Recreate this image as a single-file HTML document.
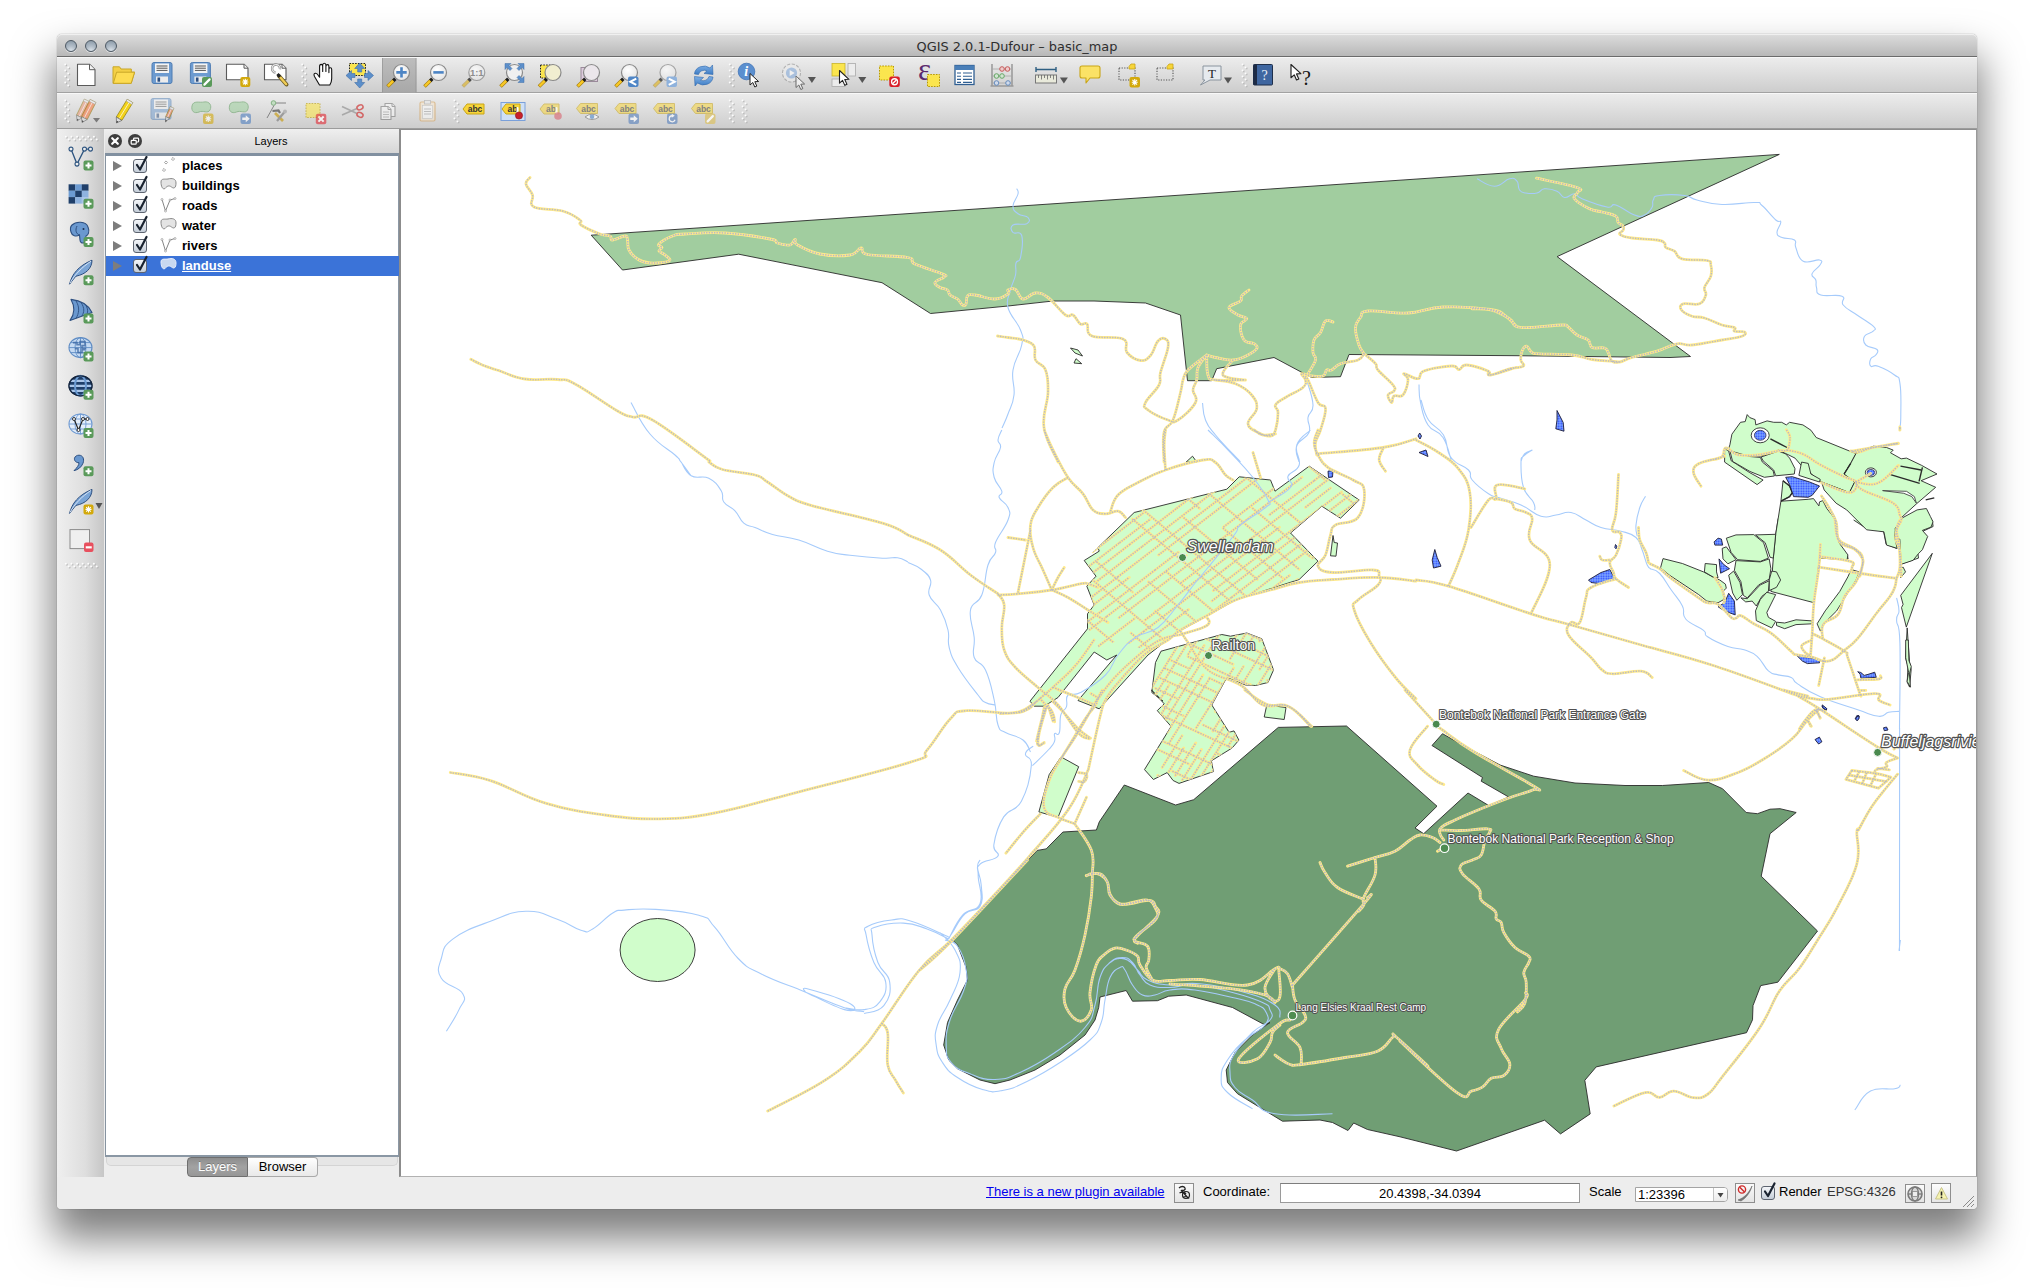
<!DOCTYPE html>
<html>
<head>
<meta charset="utf-8">
<title>QGIS 2.0.1-Dufour - basic_map</title>
<style>
html,body{margin:0;padding:0;background:#fff;}
body{width:2034px;height:1288px;position:relative;overflow:hidden;font-family:"Liberation Sans",sans-serif;font-size:13px;color:#000;}
#win{position:absolute;left:57px;top:34px;width:1920px;height:1175px;background:#ededed;border-radius:5px 5px 4px 4px;
 box-shadow:0 0 1px rgba(0,0,0,.6),0 26px 40px 4px rgba(0,0,0,.51);}
#title{position:absolute;left:0;top:0;width:1920px;height:22px;border-radius:5px 5px 0 0;
 background:linear-gradient(#e4e4e4 0,#dadada 8%,#b8b8b8 100%);border-bottom:1px solid #6b6b6b;box-shadow:inset 0 1px 0 #f0f0f0;}
#title .t{position:absolute;left:0;right:0;top:5px;text-align:center;font-size:13.5px;color:#2e2e2e;letter-spacing:.2px;font-family:"DejaVu Sans","Liberation Sans",sans-serif;font-size:12.9px;letter-spacing:0}
.tl{position:absolute;top:6px;width:12px;height:12px;border-radius:50%;border:1.2px solid #4e5964;box-sizing:border-box;
 background:radial-gradient(circle at 50% 95%,#dbe3ea 0,#b3bec9 40%,#8696a4 100%);box-shadow:0 1px 0 rgba(255,255,255,.5)}
.tb{position:absolute;left:0;width:1920px;height:35px;background:linear-gradient(#ececec,#cdcdcd);border-top:1px solid #f8f8f8;box-sizing:border-box}
#tb1{top:23px;height:36px;border-bottom:1px solid #a2a2a2}
#tb2{top:59px;height:36px;border-bottom:1px solid #9c9c9c}
#leftcol{position:absolute;left:0;top:95px;width:47px;height:1048px;background:linear-gradient(90deg,#efefef,#dedede 60%,#c6c6c6)}
#lp{position:absolute;left:48px;top:95px;width:295px;height:1048px;background:#ededed}
#lph{position:absolute;left:0;top:0;width:295px;height:24px;background:linear-gradient(#efefef,#d6d6d6);}
#lph .t{position:absolute;left:116px;width:100px;top:6px;text-align:center;font-size:11px;box-sizing:border-box}
#tree{position:absolute;left:0;top:24px;width:295px;height:1004px;background:#fff;box-sizing:border-box;border:1px solid #8693a0;border-top:3px solid #8190a0;border-right:2px solid #8c98a5;border-bottom:2px solid #8a97a4}
.row{position:absolute;left:0px;width:293px;height:20px;font-weight:bold;font-size:13px}
.row .n{position:absolute;left:76px;top:2px}
.row.sel{background:#3b73d8;color:#fff}
.row.sel .n{text-decoration:underline}
.tri{position:absolute;left:7px;top:5px;width:0;height:0;border-left:9px solid #7d7d7d;border-top:5px solid transparent;border-bottom:5px solid transparent}
.cb{position:absolute;left:27px;top:3px;width:14px;height:14px;box-sizing:border-box;border:1px solid #5d6470;border-radius:3px;background:linear-gradient(#f4f6f9,#c4cdd8)}
#map{position:absolute;left:342px;top:95px;width:1578px;height:1048px;background:#fff;overflow:hidden;box-sizing:border-box;border:1px solid #8e8e8e;border-left:2px solid #8c8c8c;border-bottom-color:#b2b2b2;border-right-color:#9a9a9a}
#status{position:absolute;left:0;top:1143px;width:1920px;height:32px;background:#ededed;box-sizing:border-box;border-radius:0 0 4px 4px;font-size:13px}
#status span,#status div{position:absolute}
</style>
</head>
<body>
<div id="win">
 <div id="title">
  <div class="tl" style="left:8px"></div><div class="tl" style="left:28px"></div><div class="tl" style="left:48px"></div>
  <div class="t">QGIS 2.0.1-Dufour &#8211; basic_map</div>
 </div>
 <div class="tb" id="tb1"><svg style="position:absolute;left:0;top:-1px" width="1920" height="36" viewBox="57 57 1920 36"><defs><radialGradient id="gl" cx=".4" cy=".35" r=".7"><stop offset="0" stop-color="#ffffff"/><stop offset="1" stop-color="#e3e3e3"/></radialGradient>
<linearGradient id="bl" x1="0" y1="0" x2="0" y2="1"><stop offset="0" stop-color="#7fb0e6"/><stop offset="1" stop-color="#3d7cc4"/></linearGradient></defs><rect x="65.2" y="64.3" width="2" height="2" rx=".9" fill="#a9a9a9" opacity=".75"/><rect x="64.3" y="63.4" width="2" height="2" rx=".9" fill="#fdfdfd"/><rect x="68.2" y="67.3" width="2" height="2" rx=".9" fill="#a9a9a9" opacity=".75"/><rect x="67.3" y="66.4" width="2" height="2" rx=".9" fill="#fdfdfd"/><rect x="65.2" y="70.3" width="2" height="2" rx=".9" fill="#a9a9a9" opacity=".75"/><rect x="64.3" y="69.4" width="2" height="2" rx=".9" fill="#fdfdfd"/><rect x="68.2" y="73.3" width="2" height="2" rx=".9" fill="#a9a9a9" opacity=".75"/><rect x="67.3" y="72.4" width="2" height="2" rx=".9" fill="#fdfdfd"/><rect x="65.2" y="76.3" width="2" height="2" rx=".9" fill="#a9a9a9" opacity=".75"/><rect x="64.3" y="75.4" width="2" height="2" rx=".9" fill="#fdfdfd"/><rect x="68.2" y="79.3" width="2" height="2" rx=".9" fill="#a9a9a9" opacity=".75"/><rect x="67.3" y="78.4" width="2" height="2" rx=".9" fill="#fdfdfd"/><rect x="65.2" y="82.3" width="2" height="2" rx=".9" fill="#a9a9a9" opacity=".75"/><rect x="64.3" y="81.4" width="2" height="2" rx=".9" fill="#fdfdfd"/><rect x="68.2" y="85.3" width="2" height="2" rx=".9" fill="#a9a9a9" opacity=".75"/><rect x="67.3" y="84.4" width="2" height="2" rx=".9" fill="#fdfdfd"/><g opacity="1"><path d="M77.5 64.2 H89.5 L95.0 69.7 V85.5 H77.5 Z" fill="#fff" stroke="#5a5a5a" stroke-width="1.1" stroke-linejoin="round"/><path d="M89.5 64.2 V69.7 H95.0" fill="#f4f4f4" stroke="#5a5a5a" stroke-width="1"/></g><path d="M113 83.3 V66.8 H119.5 L121 69 H131.3 V72.2 H134.6 L131.2 83.3 Z" fill="#f3cf45" stroke="#c9a728" stroke-width="1" stroke-linejoin="round"/><path d="M113.3 83.3 L116.6 72.2 H134.6 L131.2 83.3 Z" fill="#fddc52" stroke="#c9a728" stroke-width="1" stroke-linejoin="round"/><g opacity="1"><rect x="152" y="62.5" width="20" height="21" rx="2" fill="#6d9bd0" stroke="#4f7db3" stroke-width="1"/><rect x="155" y="63.5" width="14" height="9.5" fill="#f4f4f4"/><path d="M156.5 66.0 H167.5 M156.5 68.2 H167.5 M156.5 70.4 H167.5" stroke="#555" stroke-width="1"/><rect x="156" y="76.5" width="12" height="6" fill="#ececec"/><rect x="157.5" y="77.5" width="2.6" height="4.2" fill="#2d4f80"/></g><g opacity="1"><rect x="190.4" y="62.5" width="20" height="21" rx="2" fill="#6d9bd0" stroke="#4f7db3" stroke-width="1"/><rect x="193.4" y="63.5" width="14" height="9.5" fill="#f4f4f4"/><path d="M194.9 66.0 H205.9 M194.9 68.2 H205.9 M194.9 70.4 H205.9" stroke="#555" stroke-width="1"/><rect x="194.4" y="76.5" width="12" height="6" fill="#ececec"/><rect x="195.9" y="77.5" width="2.6" height="4.2" fill="#2d4f80"/></g><g opacity="1"><rect x="202" y="77" width="10" height="10" rx="2" fill="#5a9a5a"/><path d="M204.4 84.6 L209.6 79.4" stroke="#fff" stroke-width="2.2" stroke-linecap="round"/></g><g opacity="1"><path d="M226.5 64.2 H244.0 L248.0 68.2 V79.7 H226.5 Z" fill="#fff" stroke="#5a5a5a" stroke-width="1.1" stroke-linejoin="round"/><path d="M244.0 64.2 V68.2 H248.0" fill="#f4f4f4" stroke="#5a5a5a" stroke-width="1"/></g><g opacity="1"><rect x="240.3" y="77" width="10" height="10" rx="2" fill="#d3a90b"/><path d="M242.3 82.0 H248.3 M245.3 78.8 V85.2 M243.0 79.7 L247.60000000000002 84.3 M243.0 84.3 L247.60000000000002 79.7" stroke="#fff" stroke-width="1.1"/></g><g opacity="1"><path d="M264.5 64.2 H282.0 L286.0 68.2 V79.7 H264.5 Z" fill="#fff" stroke="#5a5a5a" stroke-width="1.1" stroke-linejoin="round"/><path d="M282.0 64.2 V68.2 H286.0" fill="#f4f4f4" stroke="#5a5a5a" stroke-width="1"/></g><path d="M275.5 72.5 A4 4 0 1 1 280 69.2" fill="none" stroke="#8a8a8a" stroke-width="2.4"/><path d="M275.5 72.5 A4 4 0 1 1 280 69.2" fill="none" stroke="#e8e8e8" stroke-width="1.1"/><line x1="279" y1="76" x2="286.5" y2="84.5" stroke="#6a5a20" stroke-width="4" stroke-linecap="round"/><line x1="279.3" y1="76.3" x2="286.2" y2="84.2" stroke="#f0cc55" stroke-width="2.4" stroke-linecap="round"/><line x1="277.5" y1="74" x2="280" y2="77" stroke="#222" stroke-width="3"/><rect x="302.2" y="64.3" width="2" height="2" rx=".9" fill="#a9a9a9" opacity=".75"/><rect x="301.3" y="63.4" width="2" height="2" rx=".9" fill="#fdfdfd"/><rect x="305.2" y="67.3" width="2" height="2" rx=".9" fill="#a9a9a9" opacity=".75"/><rect x="304.3" y="66.4" width="2" height="2" rx=".9" fill="#fdfdfd"/><rect x="302.2" y="70.3" width="2" height="2" rx=".9" fill="#a9a9a9" opacity=".75"/><rect x="301.3" y="69.4" width="2" height="2" rx=".9" fill="#fdfdfd"/><rect x="305.2" y="73.3" width="2" height="2" rx=".9" fill="#a9a9a9" opacity=".75"/><rect x="304.3" y="72.4" width="2" height="2" rx=".9" fill="#fdfdfd"/><rect x="302.2" y="76.3" width="2" height="2" rx=".9" fill="#a9a9a9" opacity=".75"/><rect x="301.3" y="75.4" width="2" height="2" rx=".9" fill="#fdfdfd"/><rect x="305.2" y="79.3" width="2" height="2" rx=".9" fill="#a9a9a9" opacity=".75"/><rect x="304.3" y="78.4" width="2" height="2" rx=".9" fill="#fdfdfd"/><rect x="302.2" y="82.3" width="2" height="2" rx=".9" fill="#a9a9a9" opacity=".75"/><rect x="301.3" y="81.4" width="2" height="2" rx=".9" fill="#fdfdfd"/><rect x="305.2" y="85.3" width="2" height="2" rx=".9" fill="#a9a9a9" opacity=".75"/><rect x="304.3" y="84.4" width="2" height="2" rx=".9" fill="#fdfdfd"/><path d="M319.5 85 L314.5 76.5 Q313.2 73.6 315.3 73.2 Q317 73 318.4 75.6 L319.6 77.2 V66.6 Q319.6 64.4 321.1 64.4 Q322.7 64.4 322.7 66.6 V71.5 V65.2 Q322.7 63.2 324.3 63.2 Q325.9 63.2 325.9 65.2 V71.5 V66.4 Q325.9 64.6 327.4 64.6 Q328.9 64.6 328.9 66.4 V72.6 V69.4 Q328.9 67.8 330.3 67.8 Q331.7 67.8 331.7 69.4 V78.5 Q331.7 82 329.8 85 Z" fill="#fff" stroke="#111" stroke-width="1.1" stroke-linejoin="round"/><rect x="349.5" y="63.5" width="16" height="12" fill="#fbe54e" stroke="#222" stroke-width="1" stroke-dasharray="1.6 1.2" opacity="1"/><path transform="translate(359.7 66.5) rotate(0)" d="M0 -3.5 L5 2 H2 V5.5 H-2 V2 H-5 Z" fill="#5c8fca" stroke="#3f6fa8" stroke-width=".6"/><path transform="translate(370 75.5) rotate(90)" d="M0 -3.5 L5 2 H2 V5.5 H-2 V2 H-5 Z" fill="#5c8fca" stroke="#3f6fa8" stroke-width=".6"/><path transform="translate(359.7 84.5) rotate(180)" d="M0 -3.5 L5 2 H2 V5.5 H-2 V2 H-5 Z" fill="#5c8fca" stroke="#3f6fa8" stroke-width=".6"/><path transform="translate(349.5 75.5) rotate(270)" d="M0 -3.5 L5 2 H2 V5.5 H-2 V2 H-5 Z" fill="#5c8fca" stroke="#3f6fa8" stroke-width=".6"/><rect x="382" y="58" width="34.5" height="34.5" fill="url(#pr)"/><defs><linearGradient id="pr" x1="0" y1="0" x2="0" y2="1"><stop offset="0" stop-color="#bdbdbd"/><stop offset="1" stop-color="#a8a8a8"/></linearGradient></defs><path d="M382.5 58 V92.5 M416 58 V92.5" stroke="#8f8f8f" stroke-width="1" opacity=".6"/><g opacity="1"><line x1="387.5" y1="86.5" x2="393.9" y2="80.2" stroke="#a07a10" stroke-width="3.6" stroke-linecap="butt" opacity="1"/><line x1="387.9" y1="86.1" x2="393.9" y2="80.2" stroke="#f7c826" stroke-width="2.4" opacity="1"/><line x1="393.3" y1="80.8" x2="395.3" y2="78.8" stroke="#1d1d1d" stroke-width="3.4"/><circle cx="401.5" cy="72.5" r="8" fill="url(#gl)" stroke="#8a8a8a" stroke-width="1.2"/></g><path d="M396.3 72.4 H406.7 M401.5 67.2 V77.6" stroke="#4c84c4" stroke-width="2.6"/><g opacity="1"><line x1="424.5" y1="86.5" x2="430.9" y2="80.2" stroke="#a07a10" stroke-width="3.6" stroke-linecap="butt" opacity="1"/><line x1="424.9" y1="86.1" x2="430.9" y2="80.2" stroke="#f7c826" stroke-width="2.4" opacity="1"/><line x1="430.3" y1="80.8" x2="432.3" y2="78.8" stroke="#1d1d1d" stroke-width="3.4"/><circle cx="438.5" cy="72.5" r="8" fill="url(#gl)" stroke="#8a8a8a" stroke-width="1.2"/></g><path d="M433.3 72.4 H443.7" stroke="#4c84c4" stroke-width="2.6"/><g opacity="0.75"><line x1="462.8" y1="86.5" x2="469.2" y2="80.2" stroke="#a07a10" stroke-width="3.6" stroke-linecap="butt" opacity="0.6"/><line x1="463.2" y1="86.1" x2="469.2" y2="80.2" stroke="#f7c826" stroke-width="2.4" opacity="0.6"/><line x1="468.6" y1="80.8" x2="470.6" y2="78.8" stroke="#1d1d1d" stroke-width="3.4"/><circle cx="476.8" cy="72.5" r="8" fill="url(#gl)" stroke="#8a8a8a" stroke-width="1.2"/></g><text x="476.8" y="76.3" font-family="Liberation Sans,sans-serif" font-weight="bold" font-size="9.5" text-anchor="middle" fill="#8e8e8e">1:1</text><g opacity="1"><line x1="500.5" y1="86.5" x2="506.9" y2="80.2" stroke="#a07a10" stroke-width="3.6" stroke-linecap="butt" opacity="1"/><line x1="500.9" y1="86.1" x2="506.9" y2="80.2" stroke="#f7c826" stroke-width="2.4" opacity="1"/><line x1="506.3" y1="80.8" x2="508.3" y2="78.8" stroke="#1d1d1d" stroke-width="3.4"/><circle cx="514.5" cy="72.5" r="8" fill="#f0f0f0" stroke="#8a8a8a" stroke-width="1.2"/></g><path d="M505 63.5 H511 L509 65.5 L512 68.5 L510 70.5 L507 67.5 L505 69.5 Z M524 63.5 H518 L520 65.5 L517 68.5 L519 70.5 L522 67.5 L524 69.5 Z M524 82.5 H518 L520 80.5 L517 77.5 L519 75.5 L522 78.5 L524 76.5 Z" fill="#5c8fca" stroke="#3f6fa8" stroke-width=".5"/><rect x="540.5" y="65" width="13" height="13" fill="#fbe54e" stroke="#222" stroke-width="1" stroke-dasharray="1.6 1.2" opacity="1"/><g opacity="1"><line x1="539" y1="86.5" x2="545.4" y2="80.2" stroke="#a07a10" stroke-width="3.6" stroke-linecap="butt" opacity="1"/><line x1="539.4" y1="86.1" x2="545.4" y2="80.2" stroke="#f7c826" stroke-width="2.4" opacity="1"/><line x1="544.8" y1="80.8" x2="546.8" y2="78.8" stroke="#1d1d1d" stroke-width="3.4"/><circle cx="553" cy="72.5" r="8" fill="#f1eed0" stroke="#8a8a8a" stroke-width="1.2"/></g><rect x="581" y="67.5" width="16.5" height="14" fill="#dccbdc" stroke="#9a8a9a" stroke-width="1"/><g opacity="1"><line x1="577.5" y1="86.5" x2="583.9" y2="80.2" stroke="#a07a10" stroke-width="3.6" stroke-linecap="butt" opacity="1"/><line x1="577.9" y1="86.1" x2="583.9" y2="80.2" stroke="#f7c826" stroke-width="2.4" opacity="1"/><line x1="583.3" y1="80.8" x2="585.3" y2="78.8" stroke="#1d1d1d" stroke-width="3.4"/><circle cx="591.5" cy="72.5" r="8" fill="#ebe6eb" stroke="#8a8a8a" stroke-width="1.2"/></g><g opacity="1"><line x1="615.5" y1="86.5" x2="621.9" y2="80.2" stroke="#a07a10" stroke-width="3.6" stroke-linecap="butt" opacity="1"/><line x1="615.9" y1="86.1" x2="621.9" y2="80.2" stroke="#f7c826" stroke-width="2.4" opacity="1"/><line x1="621.3" y1="80.8" x2="623.3" y2="78.8" stroke="#1d1d1d" stroke-width="3.4"/><circle cx="629.5" cy="72.5" r="8" fill="url(#gl)" stroke="#8a8a8a" stroke-width="1.2"/></g><g opacity="1"><rect x="628" y="76.5" width="10.5" height="10.5" rx="2" fill="#4f86c6"/><path d="M636.25 78.55 L630.25 81.75 L636.25 84.95" stroke="#fff" stroke-width="2" fill="none"/></g><g opacity="0.7"><line x1="654" y1="86.5" x2="660.4" y2="80.2" stroke="#a07a10" stroke-width="3.6" stroke-linecap="butt" opacity="0.7"/><line x1="654.4" y1="86.1" x2="660.4" y2="80.2" stroke="#f7c826" stroke-width="2.4" opacity="0.7"/><line x1="659.8" y1="80.8" x2="661.8" y2="78.8" stroke="#1d1d1d" stroke-width="3.4"/><circle cx="668" cy="72.5" r="8" fill="url(#gl)" stroke="#8a8a8a" stroke-width="1.2"/></g><g opacity="1"><rect x="666.5" y="76.5" width="10.5" height="10.5" rx="2" fill="#8fb2dc"/><path d="M668.75 78.55 L674.75 81.75 L668.75 84.95" stroke="#fff" stroke-width="2" fill="none"/></g><path d="M694.5 74 A9.5 8.5 0 0 1 710 68 L712.5 65 L713 74.5 L704 73.5 L707 70.8 A6 5.3 0 0 0 698.5 74.5 Z" fill="url(#bl)" stroke="#2f68ad" stroke-width=".6"/><path d="M713 77 A9.5 8.5 0 0 1 697.5 83 L695 86 L694.5 76.5 L703.5 77.5 L700.5 80.2 A6 5.3 0 0 0 709 76.5 Z" fill="url(#bl)" stroke="#2f68ad" stroke-width=".6"/><rect x="729.7" y="64.3" width="2" height="2" rx=".9" fill="#a9a9a9" opacity=".75"/><rect x="728.8" y="63.4" width="2" height="2" rx=".9" fill="#fdfdfd"/><rect x="732.7" y="67.3" width="2" height="2" rx=".9" fill="#a9a9a9" opacity=".75"/><rect x="731.8" y="66.4" width="2" height="2" rx=".9" fill="#fdfdfd"/><rect x="729.7" y="70.3" width="2" height="2" rx=".9" fill="#a9a9a9" opacity=".75"/><rect x="728.8" y="69.4" width="2" height="2" rx=".9" fill="#fdfdfd"/><rect x="732.7" y="73.3" width="2" height="2" rx=".9" fill="#a9a9a9" opacity=".75"/><rect x="731.8" y="72.4" width="2" height="2" rx=".9" fill="#fdfdfd"/><rect x="729.7" y="76.3" width="2" height="2" rx=".9" fill="#a9a9a9" opacity=".75"/><rect x="728.8" y="75.4" width="2" height="2" rx=".9" fill="#fdfdfd"/><rect x="732.7" y="79.3" width="2" height="2" rx=".9" fill="#a9a9a9" opacity=".75"/><rect x="731.8" y="78.4" width="2" height="2" rx=".9" fill="#fdfdfd"/><rect x="729.7" y="82.3" width="2" height="2" rx=".9" fill="#a9a9a9" opacity=".75"/><rect x="728.8" y="81.4" width="2" height="2" rx=".9" fill="#fdfdfd"/><rect x="732.7" y="85.3" width="2" height="2" rx=".9" fill="#a9a9a9" opacity=".75"/><rect x="731.8" y="84.4" width="2" height="2" rx=".9" fill="#fdfdfd"/><circle cx="746.5" cy="71.5" r="8.3" fill="#5b8fcf" stroke="#3f74b8" stroke-width=".8"/><text x="746.3" y="76.3" font-family="Liberation Serif,serif" font-style="italic" font-weight="bold" font-size="14" text-anchor="middle" fill="#fff">i</text><g transform="translate(750 73.5) scale(1)" opacity="1"><path d="M0 0 L0 11.5 L2.8 9 L4.8 13.5 L6.8 12.6 L4.8 8.2 L8.6 8 Z" fill="#fff" stroke="#222" stroke-width="1" stroke-linejoin="round"/></g><g opacity=".55"><circle cx="791.5" cy="73" r="9" fill="#eee" stroke="#8c8c8c" stroke-width="1.1" stroke-dasharray="3.2 1.5"/><circle cx="791.5" cy="73" r="5.6" fill="#7fa8dc"/><path d="M789.7 70 L794.7 73 L789.7 76 Z" fill="#fff"/></g><g transform="translate(796 76) scale(1)" opacity="0.6"><path d="M0 0 L0 11.5 L2.8 9 L4.8 13.5 L6.8 12.6 L4.8 8.2 L8.6 8 Z" fill="#fff" stroke="#222" stroke-width="1" stroke-linejoin="round"/></g><path d="M807.9 77.0 L815.9 77.0 L811.9 83.0 Z" fill="#555"/><rect x="832" y="63.5" width="13" height="12.5" fill="#fbe54e" stroke="#c9b52a" stroke-width=".8"/><rect x="848" y="63.5" width="7.5" height="12.5" fill="#ececec" stroke="#aaa" stroke-width=".8"/><rect x="832" y="79" width="13" height="7.5" fill="#ececec" stroke="#aaa" stroke-width=".8"/><g transform="translate(839.5 70.5) scale(1.1)" opacity="1"><path d="M0 0 L0 11.5 L2.8 9 L4.8 13.5 L6.8 12.6 L4.8 8.2 L8.6 8 Z" fill="#fff" stroke="#222" stroke-width="1" stroke-linejoin="round"/></g><path d="M858.3 77.0 L866.3 77.0 L862.3 83.0 Z" fill="#555"/><rect x="879.5" y="66" width="14" height="14" fill="#fbe54e" stroke="#b89a00" stroke-width="1" stroke-dasharray="1.6 1.2" opacity="1"/><g opacity="1"><rect x="889.3" y="76.5" width="10.5" height="10.5" rx="2" fill="#d9202a"/><circle cx="894.55" cy="81.75" r="3" fill="none" stroke="#fff" stroke-width="1.3"/><path d="M892.55 83.75 L896.55 79.75" stroke="#fff" stroke-width="1.3"/></g><text x="924.5" y="79.5" font-family="Liberation Serif,serif" font-size="31" text-anchor="middle" fill="#5b2a6e">&#949;</text><rect x="927.5" y="74.5" width="12" height="12" fill="#fbe54e" stroke="#b89a00" stroke-width="1" stroke-dasharray="1.6 1.2" opacity="1"/><rect x="955" y="65.5" width="19" height="19" fill="#fff" stroke="#2f5f92" stroke-width="1.3"/><rect x="955" y="65.5" width="19" height="4.5" fill="#4a7fb8"/><path d="M957 73 H961 M963 73 H972 M957 76.2 H961 M963 76.2 H972 M957 79.4 H961 M963 79.4 H972 M957 82.4 H961 M963 82.4 H972" stroke="#2f5f92" stroke-width="1.1"/><g opacity=".8"><path d="M992 64 V86 M1012 64 V86 M990.5 86 H1013.5" stroke="#8c8c8c" stroke-width="1.6"/><path d="M992 69 H1012 M992 76 H1012 M992 83 H1012" stroke="#999" stroke-width=".8"/><g fill="#f2c8c8" stroke="#c03a3a" stroke-width="1"><circle cx="1002" cy="69" r="2.3"/><circle cx="1007.5" cy="69" r="2.3"/></g><g fill="#cfe8cf" stroke="#4a9a4a" stroke-width="1"><circle cx="996.5" cy="76" r="2.3"/><circle cx="1002" cy="76" r="2.3"/></g><g fill="#cfdcf0" stroke="#4a7ab8" stroke-width="1"><circle cx="996.5" cy="83" r="2.3"/><circle cx="1008" cy="83" r="2.3"/></g></g><path d="M1036 69.5 H1056 M1036 67 V72 M1056 67 V72" stroke="#2f5f82" stroke-width="1.4"/><rect x="1035.5" y="75" width="21" height="8" fill="#e9eadb" stroke="#777" stroke-width="1"/><path d="M1038.5 75 V78 M1041.5 75 V79.5 M1044.5 75 V78 M1047.5 75 V79.5 M1050.5 75 V78 M1053.5 75 V79.5" stroke="#666" stroke-width=".8"/><path d="M1059.9 77.5 L1067.9 77.5 L1063.9 83.5 Z" fill="#555"/><path d="M1082 66 H1098 Q1100 66 1100 68 V76 Q1100 78 1098 78 H1090 L1086 83 V78 H1082 Q1080 78 1080 76 V68 Q1080 66 1082 66 Z" fill="#fbe266" stroke="#c9a516" stroke-width="1.1" stroke-linejoin="round"/><rect x="1119" y="68" width="16" height="12" fill="none" stroke="#555" stroke-width="1.1" stroke-dasharray="1.2 1.4"/><path d="M1129 66.5 L1131 64 H1135 V69 H1129 Z" fill="#f7d53a" stroke="#c8a516" stroke-width=".8"/><g opacity="1"><rect x="1129.5" y="77" width="10.5" height="10.5" rx="2" fill="#d3a90b"/><path d="M1131.75 82.25 H1137.75 M1134.75 79.05 V85.45 M1132.45 79.95 L1137.05 84.55 M1132.45 84.55 L1137.05 79.95" stroke="#fff" stroke-width="1.1"/></g><rect x="1157" y="68" width="16" height="12" fill="none" stroke="#555" stroke-width="1.1" stroke-dasharray="1.2 1.4"/><path d="M1167 66.5 L1169 64 H1173 V69 H1167 Z" fill="#f7d53a" stroke="#c8a516" stroke-width=".8"/><path d="M1203 66 H1221 V80 H1210 L1200.5 85 L1205 80 H1203 Z" fill="#e6eaee" stroke="#8a949e" stroke-width="1" stroke-linejoin="round"/><text x="1212" y="78" font-family="Liberation Serif,serif" font-size="13" text-anchor="middle" fill="#222">T</text><path d="M1224.0 77.5 L1232.0 77.5 L1228 83.5 Z" fill="#555"/><rect x="1242.5" y="64.3" width="2" height="2" rx=".9" fill="#a9a9a9" opacity=".75"/><rect x="1241.6" y="63.4" width="2" height="2" rx=".9" fill="#fdfdfd"/><rect x="1245.5" y="67.3" width="2" height="2" rx=".9" fill="#a9a9a9" opacity=".75"/><rect x="1244.6" y="66.4" width="2" height="2" rx=".9" fill="#fdfdfd"/><rect x="1242.5" y="70.3" width="2" height="2" rx=".9" fill="#a9a9a9" opacity=".75"/><rect x="1241.6" y="69.4" width="2" height="2" rx=".9" fill="#fdfdfd"/><rect x="1245.5" y="73.3" width="2" height="2" rx=".9" fill="#a9a9a9" opacity=".75"/><rect x="1244.6" y="72.4" width="2" height="2" rx=".9" fill="#fdfdfd"/><rect x="1242.5" y="76.3" width="2" height="2" rx=".9" fill="#a9a9a9" opacity=".75"/><rect x="1241.6" y="75.4" width="2" height="2" rx=".9" fill="#fdfdfd"/><rect x="1245.5" y="79.3" width="2" height="2" rx=".9" fill="#a9a9a9" opacity=".75"/><rect x="1244.6" y="78.4" width="2" height="2" rx=".9" fill="#fdfdfd"/><rect x="1242.5" y="82.3" width="2" height="2" rx=".9" fill="#a9a9a9" opacity=".75"/><rect x="1241.6" y="81.4" width="2" height="2" rx=".9" fill="#fdfdfd"/><rect x="1245.5" y="85.3" width="2" height="2" rx=".9" fill="#a9a9a9" opacity=".75"/><rect x="1244.6" y="84.4" width="2" height="2" rx=".9" fill="#fdfdfd"/><rect x="1253.5" y="64.5" width="19" height="20.5" rx="1" fill="#3f66a0" stroke="#1f2f4a" stroke-width="1"/><rect x="1253.5" y="64.5" width="3.5" height="20.5" fill="#1d2b45"/><text x="1264.5" y="80" font-family="Liberation Serif,serif" font-size="14" text-anchor="middle" fill="#e8eef8">?</text><g transform="translate(1291 64.5) scale(1.15)" opacity="1"><path d="M0 0 L0 11.5 L2.8 9 L4.8 13.5 L6.8 12.6 L4.8 8.2 L8.6 8 Z" fill="#fff" stroke="#222" stroke-width="1" stroke-linejoin="round"/></g><text x="1306.5" y="85" font-family="Liberation Serif,serif" font-size="20" text-anchor="middle" fill="#111">?</text></svg></div>
 <div class="tb" id="tb2"><svg style="position:absolute;left:0;top:-1px" width="1920" height="36" viewBox="57 93 1920 36"><rect x="65.2" y="100.3" width="2" height="2" rx=".9" fill="#a9a9a9" opacity=".75"/><rect x="64.3" y="99.4" width="2" height="2" rx=".9" fill="#fdfdfd"/><rect x="68.2" y="103.3" width="2" height="2" rx=".9" fill="#a9a9a9" opacity=".75"/><rect x="67.3" y="102.4" width="2" height="2" rx=".9" fill="#fdfdfd"/><rect x="65.2" y="106.3" width="2" height="2" rx=".9" fill="#a9a9a9" opacity=".75"/><rect x="64.3" y="105.4" width="2" height="2" rx=".9" fill="#fdfdfd"/><rect x="68.2" y="109.3" width="2" height="2" rx=".9" fill="#a9a9a9" opacity=".75"/><rect x="67.3" y="108.4" width="2" height="2" rx=".9" fill="#fdfdfd"/><rect x="65.2" y="112.3" width="2" height="2" rx=".9" fill="#a9a9a9" opacity=".75"/><rect x="64.3" y="111.4" width="2" height="2" rx=".9" fill="#fdfdfd"/><rect x="68.2" y="115.3" width="2" height="2" rx=".9" fill="#a9a9a9" opacity=".75"/><rect x="67.3" y="114.4" width="2" height="2" rx=".9" fill="#fdfdfd"/><rect x="65.2" y="118.3" width="2" height="2" rx=".9" fill="#a9a9a9" opacity=".75"/><rect x="64.3" y="117.4" width="2" height="2" rx=".9" fill="#fdfdfd"/><rect x="68.2" y="121.3" width="2" height="2" rx=".9" fill="#a9a9a9" opacity=".75"/><rect x="67.3" y="120.4" width="2" height="2" rx=".9" fill="#fdfdfd"/><g opacity="0.7"><path d="M76.5 115.2 L84.3 99.2 L89.7 101.8 L81.9 117.8 Z" fill="#e9a58a" stroke="#8a7a10" stroke-width=".7"/><path d="M79.2 116.5 L87.0 100.5" stroke="#fff" stroke-width="1" opacity=".7"/><path d="M83.4 101.0 L84.3 99.2 L89.7 101.8 L88.8 103.6 Z" fill="#eee" stroke="#999" stroke-width=".5"/><path d="M77 121 L76.5 115.2 L81.9 117.8 Z" fill="#ddd" stroke="#666" stroke-width=".7"/><path d="M77 121 L78.8 119.6 L77.0 118.8 Z" fill="#333"/></g><g opacity="0.8"><path d="M81.4 116.6 L90.1 99.5 L95.9 102.5 L87.2 119.5 Z" fill="#f0936a" stroke="#8a7a10" stroke-width=".7"/><path d="M84.3 118.0 L93.0 101.0" stroke="#fff" stroke-width="1" opacity=".7"/><path d="M89.2 101.3 L90.1 99.5 L95.9 102.5 L95.0 104.3 Z" fill="#eee" stroke="#999" stroke-width=".5"/><path d="M82 122.5 L81.4 116.6 L87.2 119.5 Z" fill="#ddd" stroke="#666" stroke-width=".7"/><path d="M82 122.5 L83.8 121.2 L82.0 120.3 Z" fill="#333"/></g><path d="M93 118 H100 L96.5 122.5 Z" fill="#7a7a7a"/><g opacity="1"><path d="M116.3 117.0 L127.2 99.3 L132.8 102.7 L121.9 120.4 Z" fill="#f2d21b" stroke="#8a7a10" stroke-width=".7"/><path d="M119.1 118.7 L130.0 101.0" stroke="#fff" stroke-width="1" opacity=".7"/><path d="M126.2 101.0 L127.2 99.3 L132.8 102.7 L131.7 104.4 Z" fill="#eee" stroke="#999" stroke-width=".5"/><path d="M116.5 123 L116.3 117.0 L121.9 120.4 Z" fill="#ddd" stroke="#666" stroke-width=".7"/><path d="M116.5 123 L118.4 121.8 L116.7 120.8 Z" fill="#333"/></g><g opacity="0.5"><rect x="151" y="98.5" width="20" height="21" rx="2" fill="#6d9bd0" stroke="#4f7db3" stroke-width="1"/><rect x="154" y="99.5" width="14" height="9.5" fill="#f4f4f4"/><path d="M155.5 102.0 H166.5 M155.5 104.2 H166.5 M155.5 106.4 H166.5" stroke="#555" stroke-width="1"/><rect x="155" y="112.5" width="12" height="6" fill="#ececec"/><rect x="156.5" y="113.5" width="2.6" height="4.2" fill="#2d4f80"/></g><g opacity="0.8"><path d="M165.7 116.6 L170.2 106.7 L173.8 108.3 L169.4 118.3 Z" fill="#f0936a" stroke="#8a7a10" stroke-width=".7"/><path d="M167.5 117.4 L172.0 107.5" stroke="#fff" stroke-width="1" opacity=".7"/><path d="M169.4 108.5 L170.2 106.7 L173.8 108.3 L173.0 110.1 Z" fill="#eee" stroke="#999" stroke-width=".5"/><path d="M165.5 122 L165.7 116.6 L169.4 118.3 Z" fill="#ddd" stroke="#666" stroke-width=".7"/><path d="M165.5 122 L167.2 120.6 L165.4 119.8 Z" fill="#333"/></g><path d="M192 106 C193 100 200 103 204 102 C210 101 212 106 210 110 C208 114 203 110 199 112 C194 114 191 111 192 106 Z" fill="#9ccf9c" stroke="#5a9a5a" stroke-width="1" opacity="0.55"/><g opacity="0.6"><rect x="203" y="113.5" width="10.5" height="10.5" rx="2" fill="#d3a90b"/><path d="M205.25 118.75 H211.25 M208.25 115.55 V121.95 M205.95 116.45 L210.55 121.05 M205.95 121.05 L210.55 116.45" stroke="#fff" stroke-width="1.1"/></g><path d="M229.5 106 C230.5 100 237.5 103 241.5 102 C247.5 101 249.5 106 247.5 110 C245.5 114 240.5 110 236.5 112 C231.5 114 228.5 111 229.5 106 Z" fill="#9ccf9c" stroke="#5a9a5a" stroke-width="1" opacity="0.55"/><g opacity="0.6"><rect x="240.5" y="113.5" width="10.5" height="10.5" rx="2" fill="#4f7fc0"/><path d="M242.25 117.45 H245.75 V115.25 L249.75 118.75 L245.75 122.25 V120.05 H242.25 Z" fill="#fff"/></g><g opacity=".75"><circle cx="273.5" cy="103" r="2.3" fill="#b8dcb8" stroke="#5a9a5a" stroke-width=".9"/><path d="M274 105.5 L267 118 M276 103 H286" stroke="#666" stroke-width="1"/><path d="M275 113 L283 121" stroke="#c9a228" stroke-width="2.6"/><path d="M272.5 111 L278.5 110.5 L280 113" stroke="#555" stroke-width="2.2" fill="none"/><path d="M284.5 112 L277 121" stroke="#888" stroke-width="2.2"/><circle cx="285" cy="111.5" r="2" fill="#aaa"/></g><rect x="306" y="103.5" width="14" height="14" fill="#fbe54e" stroke="#b89a00" stroke-width="1" stroke-dasharray="1.6 1.2" opacity="0.6"/><g opacity="0.7"><rect x="315.8" y="113.8" width="10.5" height="10.5" rx="2" fill="#e0404a"/><path d="M318.45 116.45 L323.65000000000003 121.64999999999999 M318.45 121.64999999999999 L323.65000000000003 116.45" stroke="#fff" stroke-width="2"/></g><g opacity=".75"><path d="M342 106.5 L357 113.5 M342 115 L357 108.5" stroke="#999" stroke-width="1.6"/><ellipse cx="360" cy="107.3" rx="3.2" ry="2.3" fill="none" stroke="#d04040" stroke-width="1.5" transform="rotate(-25 360 107.3)"/><ellipse cx="360" cy="114.8" rx="3.2" ry="2.3" fill="none" stroke="#d04040" stroke-width="1.5" transform="rotate(25 360 114.8)"/></g><g opacity=".45"><g opacity="1"><path d="M385 103.5 H392 L395 106.5 V116.5 H385 Z" fill="#fff" stroke="#5a5a5a" stroke-width="1.1" stroke-linejoin="round"/><path d="M392 103.5 V106.5 H395" fill="#f4f4f4" stroke="#5a5a5a" stroke-width="1"/></g><g opacity="1"><path d="M381 106.5 H388 L391 109.5 V119.5 H381 Z" fill="#fff" stroke="#5a5a5a" stroke-width="1.1" stroke-linejoin="round"/><path d="M388 106.5 V109.5 H391" fill="#f4f4f4" stroke="#5a5a5a" stroke-width="1"/></g><path d="M383 112 H389 M383 114.5 H389 M383 117 H389" stroke="#777" stroke-width=".8"/></g><g opacity=".5"><rect x="420" y="102" width="15" height="19" rx="1.5" fill="#f7e4c8" stroke="#d49a4a" stroke-width="1.2"/><rect x="424.5" y="100.5" width="6" height="3.5" fill="#e8e8e8" stroke="#999" stroke-width=".8"/><rect x="422.5" y="105.5" width="10" height="13" fill="#fff" stroke="#aaa" stroke-width=".6"/><path d="M424 109 H431 M424 111.5 H431 M424 114 H431" stroke="#888" stroke-width=".8"/></g><rect x="454.4" y="100.3" width="2" height="2" rx=".9" fill="#a9a9a9" opacity=".75"/><rect x="453.5" y="99.4" width="2" height="2" rx=".9" fill="#fdfdfd"/><rect x="457.4" y="103.3" width="2" height="2" rx=".9" fill="#a9a9a9" opacity=".75"/><rect x="456.5" y="102.4" width="2" height="2" rx=".9" fill="#fdfdfd"/><rect x="454.4" y="106.3" width="2" height="2" rx=".9" fill="#a9a9a9" opacity=".75"/><rect x="453.5" y="105.4" width="2" height="2" rx=".9" fill="#fdfdfd"/><rect x="457.4" y="109.3" width="2" height="2" rx=".9" fill="#a9a9a9" opacity=".75"/><rect x="456.5" y="108.4" width="2" height="2" rx=".9" fill="#fdfdfd"/><rect x="454.4" y="112.3" width="2" height="2" rx=".9" fill="#a9a9a9" opacity=".75"/><rect x="453.5" y="111.4" width="2" height="2" rx=".9" fill="#fdfdfd"/><rect x="457.4" y="115.3" width="2" height="2" rx=".9" fill="#a9a9a9" opacity=".75"/><rect x="456.5" y="114.4" width="2" height="2" rx=".9" fill="#fdfdfd"/><rect x="454.4" y="118.3" width="2" height="2" rx=".9" fill="#a9a9a9" opacity=".75"/><rect x="453.5" y="117.4" width="2" height="2" rx=".9" fill="#fdfdfd"/><rect x="457.4" y="121.3" width="2" height="2" rx=".9" fill="#a9a9a9" opacity=".75"/><rect x="456.5" y="120.4" width="2" height="2" rx=".9" fill="#fdfdfd"/><g opacity="1"><path d="M463.0 109 L467.0 104 H484.0 V114 H467.0 Z" fill="#f7d53a" stroke="#c8a516" stroke-width="1" stroke-linejoin="round"/><text x="475.0" y="112.2" font-family="Liberation Sans,sans-serif" font-weight="bold" font-size="8.5" text-anchor="middle" fill="#333">abc</text></g><rect x="501" y="102.5" width="24" height="18" fill="#cfe0f6" stroke="#7aa0da" stroke-width="1"/><g opacity="1"><path d="M502.0 109 L506.0 104 H520.0 V114 H506.0 Z" fill="#f7d53a" stroke="#c8a516" stroke-width="1" stroke-linejoin="round"/><text x="512.5" y="112.2" font-family="Liberation Sans,sans-serif" font-weight="bold" font-size="8.5" text-anchor="middle" fill="#333">ab</text></g><path d="M517.5 108 V113" stroke="#fff" stroke-width="2" stroke-linecap="round"/><circle cx="519" cy="115.5" r="3.6" fill="#c8202a" stroke="#8a1018" stroke-width=".6"/><g opacity="0.55"><path d="M540.0 109 L544.0 104 H559.0 V114 H544.0 Z" fill="#f7d53a" stroke="#c8a516" stroke-width="1" stroke-linejoin="round"/><text x="551.0" y="112.2" font-family="Liberation Sans,sans-serif" font-weight="bold" font-size="8.5" text-anchor="middle" fill="#333">ab</text></g><path d="M556.5 108 V113" stroke="#fff" stroke-width="2" stroke-linecap="round" opacity=".8"/><circle cx="558" cy="116" r="3.8" fill="#d88088" opacity=".8"/><g opacity="0.55"><path d="M576.5 108.5 L580.5 103.5 H597.5 V113.5 H580.5 Z" fill="#f7d53a" stroke="#c8a516" stroke-width="1" stroke-linejoin="round"/><text x="588.5" y="111.7" font-family="Liberation Sans,sans-serif" font-weight="bold" font-size="8.5" text-anchor="middle" fill="#333">abc</text></g><g opacity=".7"><path d="M585 117 Q592 111.5 599 117 Q592 122 585 117 Z" fill="#fff" stroke="#777" stroke-width=".9"/><circle cx="592" cy="116.8" r="2.3" fill="#6a9ad0"/></g><g opacity="0.55"><path d="M615.0 108.5 L619.0 103.5 H636.0 V113.5 H619.0 Z" fill="#f7d53a" stroke="#c8a516" stroke-width="1" stroke-linejoin="round"/><text x="627.0" y="111.7" font-family="Liberation Sans,sans-serif" font-weight="bold" font-size="8.5" text-anchor="middle" fill="#333">abc</text></g><g opacity="0.65"><rect x="628.5" y="113.5" width="10.5" height="10.5" rx="2" fill="#5f86bf"/><path d="M630.25 117.45 H633.75 V115.25 L637.75 118.75 L633.75 122.25 V120.05 H630.25 Z" fill="#fff"/></g><g opacity="0.55"><path d="M653.5 108.5 L657.5 103.5 H674.5 V113.5 H657.5 Z" fill="#f7d53a" stroke="#c8a516" stroke-width="1" stroke-linejoin="round"/><text x="665.5" y="111.7" font-family="Liberation Sans,sans-serif" font-weight="bold" font-size="8.5" text-anchor="middle" fill="#333">abc</text></g><g opacity="0.65"><rect x="667" y="113.5" width="10.5" height="10.5" rx="2" fill="#5f86bf"/><path d="M675.05 119.75 A3 3 0 1 1 672.25 115.75" stroke="#fff" stroke-width="1.3" fill="none"/><path d="M671.75 113.75 L674.75 115.75 L671.75 117.75 Z" fill="#fff"/></g><g opacity="0.55"><path d="M691.5 108.5 L695.5 103.5 H712.5 V113.5 H695.5 Z" fill="#f7d53a" stroke="#c8a516" stroke-width="1" stroke-linejoin="round"/><text x="703.5" y="111.7" font-family="Liberation Sans,sans-serif" font-weight="bold" font-size="8.5" text-anchor="middle" fill="#333">abc</text></g><g opacity="0.75"><rect x="705" y="113.5" width="10.5" height="10.5" rx="2" fill="#dcc36a"/><path d="M707.65 121.35 L712.85 116.15" stroke="#fff" stroke-width="2.2" stroke-linecap="round"/></g><rect x="729.7" y="100.3" width="2" height="2" rx=".9" fill="#a9a9a9" opacity=".75"/><rect x="728.8" y="99.4" width="2" height="2" rx=".9" fill="#fdfdfd"/><rect x="732.7" y="103.3" width="2" height="2" rx=".9" fill="#a9a9a9" opacity=".75"/><rect x="731.8" y="102.4" width="2" height="2" rx=".9" fill="#fdfdfd"/><rect x="729.7" y="106.3" width="2" height="2" rx=".9" fill="#a9a9a9" opacity=".75"/><rect x="728.8" y="105.4" width="2" height="2" rx=".9" fill="#fdfdfd"/><rect x="732.7" y="109.3" width="2" height="2" rx=".9" fill="#a9a9a9" opacity=".75"/><rect x="731.8" y="108.4" width="2" height="2" rx=".9" fill="#fdfdfd"/><rect x="729.7" y="112.3" width="2" height="2" rx=".9" fill="#a9a9a9" opacity=".75"/><rect x="728.8" y="111.4" width="2" height="2" rx=".9" fill="#fdfdfd"/><rect x="732.7" y="115.3" width="2" height="2" rx=".9" fill="#a9a9a9" opacity=".75"/><rect x="731.8" y="114.4" width="2" height="2" rx=".9" fill="#fdfdfd"/><rect x="729.7" y="118.3" width="2" height="2" rx=".9" fill="#a9a9a9" opacity=".75"/><rect x="728.8" y="117.4" width="2" height="2" rx=".9" fill="#fdfdfd"/><rect x="732.7" y="121.3" width="2" height="2" rx=".9" fill="#a9a9a9" opacity=".75"/><rect x="731.8" y="120.4" width="2" height="2" rx=".9" fill="#fdfdfd"/><rect x="742.5" y="100.3" width="2" height="2" rx=".9" fill="#a9a9a9" opacity=".75"/><rect x="741.6" y="99.4" width="2" height="2" rx=".9" fill="#fdfdfd"/><rect x="745.5" y="103.3" width="2" height="2" rx=".9" fill="#a9a9a9" opacity=".75"/><rect x="744.6" y="102.4" width="2" height="2" rx=".9" fill="#fdfdfd"/><rect x="742.5" y="106.3" width="2" height="2" rx=".9" fill="#a9a9a9" opacity=".75"/><rect x="741.6" y="105.4" width="2" height="2" rx=".9" fill="#fdfdfd"/><rect x="745.5" y="109.3" width="2" height="2" rx=".9" fill="#a9a9a9" opacity=".75"/><rect x="744.6" y="108.4" width="2" height="2" rx=".9" fill="#fdfdfd"/><rect x="742.5" y="112.3" width="2" height="2" rx=".9" fill="#a9a9a9" opacity=".75"/><rect x="741.6" y="111.4" width="2" height="2" rx=".9" fill="#fdfdfd"/><rect x="745.5" y="115.3" width="2" height="2" rx=".9" fill="#a9a9a9" opacity=".75"/><rect x="744.6" y="114.4" width="2" height="2" rx=".9" fill="#fdfdfd"/><rect x="742.5" y="118.3" width="2" height="2" rx=".9" fill="#a9a9a9" opacity=".75"/><rect x="741.6" y="117.4" width="2" height="2" rx=".9" fill="#fdfdfd"/><rect x="745.5" y="121.3" width="2" height="2" rx=".9" fill="#a9a9a9" opacity=".75"/><rect x="744.6" y="120.4" width="2" height="2" rx=".9" fill="#fdfdfd"/></svg></div>
 <div id="leftcol"><svg style="position:absolute;left:0;top:0" width="47" height="1048" viewBox="57 129 47 1048"><defs><radialGradient id="gl" cx=".4" cy=".35" r=".7"><stop offset="0" stop-color="#ffffff"/><stop offset="1" stop-color="#e3e3e3"/></radialGradient>
<linearGradient id="bl" x1="0" y1="0" x2="0" y2="1"><stop offset="0" stop-color="#7fb0e6"/><stop offset="1" stop-color="#3d7cc4"/></linearGradient></defs><rect x="65.8" y="136.6" width="2" height="2" rx=".9" fill="#a9a9a9" opacity=".7"/><rect x="64.9" y="135.7" width="2" height="2" rx=".9" fill="#fdfdfd"/><rect x="68.6" y="139.4" width="2" height="2" rx=".9" fill="#a9a9a9" opacity=".7"/><rect x="67.7" y="138.5" width="2" height="2" rx=".9" fill="#fdfdfd"/><rect x="71.4" y="136.6" width="2" height="2" rx=".9" fill="#a9a9a9" opacity=".7"/><rect x="70.5" y="135.7" width="2" height="2" rx=".9" fill="#fdfdfd"/><rect x="74.2" y="139.4" width="2" height="2" rx=".9" fill="#a9a9a9" opacity=".7"/><rect x="73.3" y="138.5" width="2" height="2" rx=".9" fill="#fdfdfd"/><rect x="77.0" y="136.6" width="2" height="2" rx=".9" fill="#a9a9a9" opacity=".7"/><rect x="76.1" y="135.7" width="2" height="2" rx=".9" fill="#fdfdfd"/><rect x="79.8" y="139.4" width="2" height="2" rx=".9" fill="#a9a9a9" opacity=".7"/><rect x="78.9" y="138.5" width="2" height="2" rx=".9" fill="#fdfdfd"/><rect x="82.6" y="136.6" width="2" height="2" rx=".9" fill="#a9a9a9" opacity=".7"/><rect x="81.7" y="135.7" width="2" height="2" rx=".9" fill="#fdfdfd"/><rect x="85.4" y="139.4" width="2" height="2" rx=".9" fill="#a9a9a9" opacity=".7"/><rect x="84.5" y="138.5" width="2" height="2" rx=".9" fill="#fdfdfd"/><rect x="88.2" y="136.6" width="2" height="2" rx=".9" fill="#a9a9a9" opacity=".7"/><rect x="87.3" y="135.7" width="2" height="2" rx=".9" fill="#fdfdfd"/><rect x="91.0" y="139.4" width="2" height="2" rx=".9" fill="#a9a9a9" opacity=".7"/><rect x="90.1" y="138.5" width="2" height="2" rx=".9" fill="#fdfdfd"/><rect x="93.8" y="136.6" width="2" height="2" rx=".9" fill="#a9a9a9" opacity=".7"/><rect x="92.9" y="135.7" width="2" height="2" rx=".9" fill="#fdfdfd"/><rect x="96.6" y="139.4" width="2" height="2" rx=".9" fill="#a9a9a9" opacity=".7"/><rect x="95.7" y="138.5" width="2" height="2" rx=".9" fill="#fdfdfd"/><path d="M71 149.1 L77 164.1 L84.5 149.1 H90.5" fill="none" stroke="#2f5580" stroke-width="1.3"/><circle cx="71" cy="149.1" r="2" fill="#eee" stroke="#2f5580" stroke-width="1.1"/><circle cx="77" cy="164.1" r="2" fill="#eee" stroke="#2f5580" stroke-width="1.1"/><circle cx="84.5" cy="149.1" r="2" fill="#eee" stroke="#2f5580" stroke-width="1.1"/><circle cx="90.5" cy="149.1" r="2" fill="#eee" stroke="#2f5580" stroke-width="1.1"/><g opacity="1"><rect x="83.5" y="160.6" width="10" height="10" rx="2" fill="#5a9a5a"/><path d="M85.5 165.6 H91.5 M88.5 162.6 V168.6" stroke="#fff" stroke-width="2"/></g><rect x="68.6" y="184.3" width="6.7" height="6.5" fill="#1f3f6a"/><rect x="75.2" y="184.3" width="6.7" height="6.5" fill="#6c9bd2"/><rect x="81.8" y="184.3" width="6.7" height="6.5" fill="#1f3f6a"/><rect x="68.6" y="190.7" width="6.7" height="6.5" fill="#6c9bd2"/><rect x="75.2" y="190.7" width="6.7" height="6.5" fill="#1f3f6a"/><rect x="81.8" y="190.7" width="6.7" height="6.5" fill="#8fb3df"/><rect x="68.6" y="197.1" width="6.7" height="6.5" fill="#1f3f6a"/><rect x="75.2" y="197.1" width="6.7" height="6.5" fill="#8fb3df"/><rect x="81.8" y="197.1" width="6.7" height="6.5" fill="#a9c5e8"/><g opacity="1"><rect x="83.5" y="198.8" width="10" height="10" rx="2" fill="#5a9a5a"/><path d="M85.5 203.8 H91.5 M88.5 200.8 V206.8" stroke="#fff" stroke-width="2"/></g><path d="M72 225 C76 221 86 221 88 227 C90 232 88 235 86 236 L85 242 C83 244 80 243 80 240 L79.5 235 C76 237 72 236 71 232 C70 229 70 227 72 225 Z" fill="#6a98cf" stroke="#2d4f80" stroke-width="1.1"/><path d="M77 226 C75 230 76 234 79.5 235" fill="none" stroke="#2d4f80" stroke-width="1"/><circle cx="83.5" cy="229" r="1" fill="#1d3050"/><g opacity="1"><rect x="83.5" y="237" width="10" height="10" rx="2" fill="#5a9a5a"/><path d="M85.5 242.0 H91.5 M88.5 239.0 V245.0" stroke="#fff" stroke-width="2"/></g><path d="M69.5 284.2 C72 274.2 78 266.2 92 260.2 C92 268.2 86 274.2 76 276.2 C74 278.2 72 281.2 69.5 284.2 Z" fill="#7ba5d6" stroke="#2d4f80" stroke-width="1"/><path d="M70 283.2 C75 274.2 82 267.2 91 261.2" fill="none" stroke="#dfeaf7" stroke-width=".9"/><g opacity="1"><rect x="83.5" y="275.2" width="10" height="10" rx="2" fill="#5a9a5a"/><path d="M85.5 280.2 H91.5 M88.5 277.2 V283.2" stroke="#fff" stroke-width="2"/></g><path d="M71 299.4 C80 300.4 88 304.4 92 312.4 L70 320.4 C75 313.4 75 306.4 71 299.4 Z" fill="#6a98cf" stroke="#2d4f80" stroke-width="1.1" stroke-linejoin="round"/><path d="M76 300.9 C80 307.4 79 313.4 76 318.4 M81 302.4 C85 308.4 84 312.4 82 315.9 M86 305.4 C88 309.4 88 311.4 87 313.9" fill="none" stroke="#2d4f80" stroke-width=".9"/><g opacity="1"><rect x="83.5" y="313.4" width="10" height="10" rx="2" fill="#5a9a5a"/><path d="M85.5 318.4 H91.5 M88.5 315.4 V321.4" stroke="#fff" stroke-width="2"/></g><ellipse cx="80.5" cy="347.6" rx="11.5" ry="10" fill="#c5daf2" stroke="#5f8cc4" stroke-width="1.1"/><path d="M69 347.6 H92 M71 342.6 H90 M71 352.6 H90 M80.5 337.6 V357.6" stroke="#5f8cc4" stroke-width=".9" fill="none"/><ellipse cx="80.5" cy="347.6" rx="5.5" ry="10" fill="none" stroke="#5f8cc4" stroke-width=".9"/><path d="M73 342.6 h4 v2 h3 v-3 h5 v4 h-3 v3 h4 M75 348.6 h3 v4 h4 v-3 h3" fill="none" stroke="#3f6aa5" stroke-width="1.6" opacity=".8"/><g opacity="1"><rect x="83.5" y="351.6" width="10" height="10" rx="2" fill="#5a9a5a"/><path d="M85.5 356.6 H91.5 M88.5 353.6 V359.6" stroke="#fff" stroke-width="2"/></g><ellipse cx="80.5" cy="385.8" rx="11.5" ry="10" fill="#1f3f6a" stroke="#14253f" stroke-width="1.1"/><path d="M70 380.8 H91 M69 385.8 H92 M70 390.8 H91" stroke="#a9c5e8" stroke-width="2.2"/><ellipse cx="80.5" cy="385.8" rx="5.5" ry="10" fill="none" stroke="#6c9bd2" stroke-width="2"/><ellipse cx="80.5" cy="385.8" rx="11.5" ry="10" fill="none" stroke="#14253f" stroke-width="1.2"/><g opacity="1"><rect x="83.5" y="389.8" width="10" height="10" rx="2" fill="#5a9a5a"/><path d="M85.5 394.8 H91.5 M88.5 391.8 V397.8" stroke="#fff" stroke-width="2"/></g><ellipse cx="80.5" cy="424" rx="11.5" ry="10" fill="#e4eefa" stroke="#6f9ad2" stroke-width="1.1"/><path d="M69 424 H92 M71 419 H90 M71 429 H90 M80.5 414 V434" stroke="#6f9ad2" stroke-width=".9" fill="none"/><ellipse cx="80.5" cy="424" rx="5.5" ry="10" fill="none" stroke="#6f9ad2" stroke-width=".9"/><path d="M74 419 L78.5 430 L83 419 H87.5" fill="none" stroke="#222" stroke-width="1.2"/><circle cx="74" cy="419" r="1.5" fill="#fff" stroke="#222" stroke-width=".9"/><circle cx="78.5" cy="430" r="1.5" fill="#fff" stroke="#222" stroke-width=".9"/><circle cx="83" cy="419" r="1.5" fill="#fff" stroke="#222" stroke-width=".9"/><circle cx="87.5" cy="419" r="1.5" fill="#fff" stroke="#222" stroke-width=".9"/><g opacity="1"><rect x="83.5" y="428" width="10" height="10" rx="2" fill="#5a9a5a"/><path d="M85.5 433.0 H91.5 M88.5 430.0 V436.0" stroke="#fff" stroke-width="2"/></g><path d="M79 455.2 C83 455.2 84.5 459.2 83 463.2 C81.5 467.2 78 469.7 74 470.7 C77 467.7 79 465.2 79 462.7 C75.5 462.7 74 460.2 74.5 458.2 C75 456.2 77 455.2 79 455.2 Z" fill="#6a98cf" stroke="#2d4f80" stroke-width="1"/><g opacity="1"><rect x="83.5" y="466.2" width="10" height="10" rx="2" fill="#5a9a5a"/><path d="M85.5 471.2 H91.5 M88.5 468.2 V474.2" stroke="#fff" stroke-width="2"/></g><path d="M69.5 513.4 C72 503.4 78 495.4 92 489.4 C92 497.4 86 503.4 76 505.4 C74 507.4 72 510.4 69.5 513.4 Z" fill="#7ba5d6" stroke="#2d4f80" stroke-width="1"/><path d="M70 512.4 C75 503.4 82 496.4 91 490.4" fill="none" stroke="#dfeaf7" stroke-width=".9"/><g opacity="1"><rect x="83.5" y="504.4" width="10" height="10" rx="2" fill="#d3a90b"/><path d="M85.5 509.4 H91.5 M88.5 506.2 V512.6 M86.2 507.09999999999997 L90.8 511.7 M86.2 511.7 L90.8 507.09999999999997" stroke="#fff" stroke-width="1.1"/></g><path d="M95.5 502.9 L102.5 502.9 L99 508.9 Z" fill="#555"/><rect x="70" y="529.6" width="19.5" height="19" fill="#efefef" stroke="#8c8c8c" stroke-width="1"/><g opacity="1"><rect x="84" y="542.6" width="9.5" height="9.5" rx="2" fill="#e8505e"/><path d="M85.75 547.35 H91.75" stroke="#fff" stroke-width="2.2"/></g><rect x="65.8" y="563.6" width="2" height="2" rx=".9" fill="#a9a9a9" opacity=".7"/><rect x="64.9" y="562.7" width="2" height="2" rx=".9" fill="#fdfdfd"/><rect x="68.6" y="566.4" width="2" height="2" rx=".9" fill="#a9a9a9" opacity=".7"/><rect x="67.7" y="565.5" width="2" height="2" rx=".9" fill="#fdfdfd"/><rect x="71.4" y="563.6" width="2" height="2" rx=".9" fill="#a9a9a9" opacity=".7"/><rect x="70.5" y="562.7" width="2" height="2" rx=".9" fill="#fdfdfd"/><rect x="74.2" y="566.4" width="2" height="2" rx=".9" fill="#a9a9a9" opacity=".7"/><rect x="73.3" y="565.5" width="2" height="2" rx=".9" fill="#fdfdfd"/><rect x="77.0" y="563.6" width="2" height="2" rx=".9" fill="#a9a9a9" opacity=".7"/><rect x="76.1" y="562.7" width="2" height="2" rx=".9" fill="#fdfdfd"/><rect x="79.8" y="566.4" width="2" height="2" rx=".9" fill="#a9a9a9" opacity=".7"/><rect x="78.9" y="565.5" width="2" height="2" rx=".9" fill="#fdfdfd"/><rect x="82.6" y="563.6" width="2" height="2" rx=".9" fill="#a9a9a9" opacity=".7"/><rect x="81.7" y="562.7" width="2" height="2" rx=".9" fill="#fdfdfd"/><rect x="85.4" y="566.4" width="2" height="2" rx=".9" fill="#a9a9a9" opacity=".7"/><rect x="84.5" y="565.5" width="2" height="2" rx=".9" fill="#fdfdfd"/><rect x="88.2" y="563.6" width="2" height="2" rx=".9" fill="#a9a9a9" opacity=".7"/><rect x="87.3" y="562.7" width="2" height="2" rx=".9" fill="#fdfdfd"/><rect x="91.0" y="566.4" width="2" height="2" rx=".9" fill="#a9a9a9" opacity=".7"/><rect x="90.1" y="565.5" width="2" height="2" rx=".9" fill="#fdfdfd"/><rect x="93.8" y="563.6" width="2" height="2" rx=".9" fill="#a9a9a9" opacity=".7"/><rect x="92.9" y="562.7" width="2" height="2" rx=".9" fill="#fdfdfd"/><rect x="96.6" y="566.4" width="2" height="2" rx=".9" fill="#a9a9a9" opacity=".7"/><rect x="95.7" y="565.5" width="2" height="2" rx=".9" fill="#fdfdfd"/></svg></div>
 <div id="lp">
  <div id="lph"><div class="t">Layers</div><svg style="position:absolute;left:0;top:0" width="295" height="24" viewBox="105 129 295 24"><circle cx="115" cy="141" r="7" fill="#3e3e3e"/><path d="M112.2 138.2 L117.8 143.8 M112.2 143.8 L117.8 138.2" stroke="#fff" stroke-width="2.2" stroke-linecap="round"/><circle cx="135" cy="141" r="7" fill="#3e3e3e"/><rect x="133.6" y="138.2" width="5" height="3.8" rx=".8" fill="none" stroke="#fff" stroke-width="1.2"/><rect x="131.2" y="140.4" width="5" height="3.8" rx=".8" fill="#3e3e3e" stroke="#fff" stroke-width="1.2"/></svg></div>
  <div id="tree">
   <div class="row" style="top:0px"><div class="tri"></div><div class="cb"></div><span class="n">places</span></div>
   <div class="row" style="top:20px"><div class="tri"></div><div class="cb"></div><span class="n">buildings</span></div>
   <div class="row" style="top:40px"><div class="tri"></div><div class="cb"></div><span class="n">roads</span></div>
   <div class="row" style="top:60px"><div class="tri"></div><div class="cb"></div><span class="n">water</span></div>
   <div class="row" style="top:80px"><div class="tri"></div><div class="cb"></div><span class="n">rivers</span></div>
   <div class="row sel" style="top:100px"><div class="tri"></div><div class="cb"></div><span class="n">landuse</span></div>
  <svg style="position:absolute;left:0;top:0;pointer-events:none" width="292" height="130" viewBox="106 156 292 130"><path d="M137 165 L140 169.5 L146.5 157" fill="none" stroke="#1a2330" stroke-width="2.2" stroke-linecap="round" stroke-linejoin="round"/><rect x="162.9" y="168.9" width="2.2" height="2.2" transform="rotate(45 164 170)" fill="#fff" stroke="#888" stroke-width=".7"/><rect x="164.9" y="161.4" width="2.2" height="2.2" transform="rotate(45 166 162.5)" fill="#fff" stroke="#888" stroke-width=".7"/><rect x="171.9" y="157.9" width="2.2" height="2.2" transform="rotate(45 173 159)" fill="#fff" stroke="#888" stroke-width=".7"/><path d="M137 185 L140 189.5 L146.5 177" fill="none" stroke="#1a2330" stroke-width="2.2" stroke-linecap="round" stroke-linejoin="round"/><path d="M161 182 C161 178 165 179.5 168 179 C172 178 176 178.5 176 183 C176 188 174 189 171.5 187 C169 185 167 186 165 188.5 C162.5 190 161 186 161 182 Z" fill="#e4e4e4" stroke="#8a8a8a" stroke-width="1"/><path d="M137 205 L140 209.5 L146.5 197" fill="none" stroke="#1a2330" stroke-width="2.2" stroke-linecap="round" stroke-linejoin="round"/><path d="M162 199.5 L165.5 211 L170 200 L175 198.5" fill="none" stroke="#777" stroke-width=".9"/><circle cx="162" cy="199.5" r="1" fill="#fff" stroke="#888" stroke-width=".6"/><circle cx="165.5" cy="211" r="1" fill="#fff" stroke="#888" stroke-width=".6"/><circle cx="170" cy="200" r="1" fill="#fff" stroke="#888" stroke-width=".6"/><circle cx="175" cy="198.5" r="1" fill="#fff" stroke="#888" stroke-width=".6"/><path d="M137 225 L140 229.5 L146.5 217" fill="none" stroke="#1a2330" stroke-width="2.2" stroke-linecap="round" stroke-linejoin="round"/><path d="M161 222 C161 218 165 219.5 168 219 C172 218 176 218.5 176 223 C176 228 174 229 171.5 227 C169 225 167 226 165 228.5 C162.5 230 161 226 161 222 Z" fill="#e4e4e4" stroke="#8a8a8a" stroke-width="1"/><path d="M137 245 L140 249.5 L146.5 237" fill="none" stroke="#1a2330" stroke-width="2.2" stroke-linecap="round" stroke-linejoin="round"/><path d="M162 239.5 L165.5 251 L170 240 L175 238.5" fill="none" stroke="#777" stroke-width=".9"/><circle cx="162" cy="239.5" r="1" fill="#fff" stroke="#888" stroke-width=".6"/><circle cx="165.5" cy="251" r="1" fill="#fff" stroke="#888" stroke-width=".6"/><circle cx="170" cy="240" r="1" fill="#fff" stroke="#888" stroke-width=".6"/><circle cx="175" cy="238.5" r="1" fill="#fff" stroke="#888" stroke-width=".6"/><path d="M137 265 L140 269.5 L146.5 257" fill="none" stroke="#1a2330" stroke-width="2.2" stroke-linecap="round" stroke-linejoin="round"/><path d="M161 262 C161 258 165 259.5 168 259 C172 258 176 258.5 176 263 C176 268 174 269 171.5 267 C169 265 167 266 165 268.5 C162.5 270 161 266 161 262 Z" fill="#c9d8f0" stroke="#e8eefc" stroke-width="1"/></svg>
  </div>
  <div style="position:absolute;left:1px;top:1028px;width:292px;height:9px;border:1px solid #d4d4d4;border-top:none;border-radius:0 0 5px 5px;background:#e6e6e6;box-sizing:border-box"></div><div style="position:absolute;left:82px;top:1028px;width:61px;height:20px;box-sizing:border-box;border:1px solid #6f6f6f;border-radius:4px 0 0 4px;background:linear-gradient(#8e8e8e,#a2a2a2 50%,#979797);color:#fff;font-size:13px;text-align:center;line-height:17px;text-shadow:0 -1px 0 rgba(0,0,0,.25)">Layers</div><div style="position:absolute;left:143px;top:1028px;width:70px;height:20px;box-sizing:border-box;border:1px solid #a9a9a9;border-left:none;border-radius:0 4px 4px 0;background:linear-gradient(#ffffff,#f3f3f3 50%,#e9e9e9);color:#000;font-size:13px;text-align:center;line-height:17px">Browser</div>
 </div>
 <div id="map"><svg width="1577" height="1047" viewBox="400 130 1577 1047" style="position:absolute;left:-1px;top:0">
<defs>
<pattern id="wat" width="2.5" height="2.5" patternUnits="userSpaceOnUse"><rect width="2.5" height="2.5" fill="#a3d0ff"/><rect x="0.35" y="0.35" width="1.8" height="1.8" fill="#2440ff"/></pattern>
</defs>
<polygon points="591.2,235.2 1779.3,154.4 1557.1,256.6 1690.5,356.5 1670.0,357.5 1516.0,355.7 1349.0,354.5 1340.5,376.7 1311.7,377.5 1303.0,373.0 1274.0,357.5 1216.7,368.7 1211.7,380.7 1187.5,380.7 1180.5,315.0 1145.5,303.0 1094.0,301.0 1053.0,301.0 1008.0,306.0 930.5,313.5 882.0,282.7 738.7,254.2 622.5,270.0" fill="#a1cd9f" stroke="#2a2a2a" stroke-width="0.9" stroke-linejoin="round"/>
<polygon points="952.5,940.0 1037.2,850.4 1046.2,848.9 1062.9,832.0 1096.4,830.0 1099.3,821.8 1124.3,785.0 1175.6,805.0 1193.7,799.7 1278.3,727.4 1346.5,726.0 1437.0,806.2 1415.0,828.0 1423.7,833.7 1468.0,793.0 1488.7,805.5 1508.7,797.0 1481.2,781.2 1482.5,777.5 1432.0,745.5 1442.5,733.7 1460.0,743.7 1500.0,765.0 1533.7,776.2 1575.0,783.0 1625.0,785.5 1662.5,785.5 1708.7,782.5 1722.5,788.7 1746.2,812.5 1757.5,813.7 1770.0,809.2 1780.0,808.7 1796.2,812.5 1770.0,833.7 1761.2,876.2 1817.5,931.0 1777.8,982.2 1760.7,985.6 1753.0,1005.6 1752.5,1019.8 1746.5,1032.7 1596.2,1066.9 1584.8,1080.3 1590.2,1113.9 1560.5,1133.9 1544.6,1120.2 1456.5,1151.0 1400.0,1136.8 1367.5,1129.5 1353.7,1123.0 1348.0,1130.5 1332.5,1122.5 1320.0,1120.0 1282.5,1121.2 1260.0,1107.5 1237.5,1093.7 1227.5,1082.5 1226.2,1070.0 1235.0,1052.5 1252.5,1035.0 1270.0,1022.5 1265.0,1025.0 1232.5,1007.5 1186.2,995.0 1168.7,996.2 1157.5,1000.7 1132.5,1001.2 1126.2,990.5 1100.0,997.0 1098.7,1007.5 1095.0,1020.0 1085.0,1035.0 1060.0,1055.0 1035.0,1070.0 1010.0,1080.0 995.0,1083.7 980.0,1080.0 957.5,1068.7 948.7,1060.0 943.7,1045.0 947.5,1022.5 957.5,1000.0 967.5,980.0 966.2,967.5 957.5,945.0" fill="#709e74" stroke="#2a2a2a" stroke-width="0.9" stroke-linejoin="round"/>
<polygon points="1134.2,512.5 1226.8,489.2 1239.2,476.8 1270.5,480.0 1275.0,491.2 1309.2,466.2 1359.2,500.0 1340.5,518.2 1321.8,506.2 1290.5,533.0 1318.0,561.2 1299.2,579.5 1235.5,600.0 1206.8,616.2 1176.8,632.5 1148.0,655.0 1099.2,708.8 1078.0,700.5 1116.8,655.0 1106.8,660.0 1094.2,652.0 1058.0,697.5 1044.2,706.2 1034.2,706.2 1030.0,701.2 1087.5,628.8 1087.5,613.8 1094.2,605.0 1086.8,586.2 1096.0,576.2 1084.2,560.5 1099.2,551.2 1098.0,547.5" fill="#d0fdcb" stroke="#2a2a2a" stroke-width="0.9" stroke-linejoin="round"/>
<polygon points="1161.0,651.2 1221.8,634.5 1230.5,636.2 1246.8,633.0 1261.8,638.8 1273.5,670.0 1268.0,682.5 1255.5,685.5 1245.5,685.0 1226.8,677.5 1211.8,705.0 1229.1,732.3 1234.0,730.9 1238.9,740.1 1232.1,748.0 1211.4,760.8 1213.4,771.6 1179.0,783.4 1173.1,780.5 1167.2,772.6 1153.4,779.5 1144.5,769.6 1171.1,726.4 1157.3,710.6 1164.2,703.8 1151.4,690.0 1163.0,701.2 1151.8,692.5 1155.5,662.5" fill="#d0fdcb" stroke="#2a2a2a" stroke-width="0.9" stroke-linejoin="round"/>
<polygon points="1070.5,348.0 1078.0,350.0 1082.5,356.0 1075.0,353.0" fill="#d0fdcb" stroke="#2a2a2a" stroke-width="0.9" stroke-linejoin="round"/>
<polygon points="1076.0,358.7 1081.7,363.7 1074.0,363.0" fill="#d0fdcb" stroke="#2a2a2a" stroke-width="0.9" stroke-linejoin="round"/>
<polygon points="1266.8,705.0 1286.0,707.5 1284.2,719.5 1264.2,717.0" fill="#d0fdcb" stroke="#2a2a2a" stroke-width="0.9" stroke-linejoin="round"/>
<polygon points="1333.0,535.5 1334.2,542.5 1337.5,543.0 1336.0,556.2 1330.5,555.8" fill="#d0fdcb" stroke="#2a2a2a" stroke-width="0.9" stroke-linejoin="round"/>
<polygon points="1186.2,462.0 1192.5,456.2 1196.8,462.0" fill="#d0fdcb" stroke="#2a2a2a" stroke-width="0.9" stroke-linejoin="round"/>
<polygon points="1061.0,756.9 1078.7,766.7 1058.0,817.4 1038.9,811.9 1049.2,774.6" fill="#d0fdcb" stroke="#2a2a2a" stroke-width="0.9" stroke-linejoin="round"/>
<polygon points="1772.4,576.0 1775.7,534.4 1781.0,500.6 1783.0,480.7 1789.6,486.0 1792.3,492.6 1789.6,496.6 1781.0,501.2 1808.2,499.3 1813.5,498.6 1818.9,505.9 1819.5,501.9 1822.8,500.6 1826.8,508.5 1832.1,515.2 1836.1,521.8 1837.4,535.1 1840.1,541.7 1839.4,547.0 1847.4,555.0 1848.1,559.0 1820.2,556.3 1818.2,576.0" fill="#d0fdcb"/><polyline points="1772.4,576.0 1775.7,534.4 1781.0,500.6 1783.0,480.7 1789.6,486.0 1792.3,492.6 1789.6,496.6 1781.0,501.2 1808.2,499.3 1813.5,498.6 1818.9,505.9 1819.5,501.9 1822.8,500.6 1826.8,508.5 1832.1,515.2 1836.1,521.8 1837.4,535.1 1840.1,541.7 1839.4,547.0 1847.4,555.0 1848.1,559.0 1820.2,556.3 1818.2,576.0" fill="none" stroke="#2a2a2a" stroke-width="0.9" stroke-linejoin="round"/>
<polygon points="1835.0,518.4 1839.0,542.7 1847.9,554.9 1847.1,559.7 1819.5,558.1 1813.9,602.7 1770.9,591.4 1773.3,558.1 1775.7,534.3 1778.2,518.4" fill="#d0fdcb"/><polyline points="1835.0,518.4 1839.0,542.7 1847.9,554.9 1847.1,559.7 1819.5,558.1 1813.9,602.7 1770.9,591.4 1773.3,558.1 1775.7,534.3 1778.2,518.4" fill="none" stroke="#2a2a2a" stroke-width="0.9" stroke-linejoin="round"/>
<polygon points="1853.6,520.0 1865.8,528.1 1883.6,531.4 1886.1,544.3 1896.6,548.4 1898.2,539.5 1902.3,539.5 1901.5,563.8 1918.5,558.1 1917.7,551.6 1925.8,535.4 1922.6,531.4 1933.1,526.5 1932.3,520.0" fill="#d0fdcb"/><polyline points="1853.6,520.0 1865.8,528.1 1883.6,531.4 1886.1,544.3 1896.6,548.4 1898.2,539.5 1902.3,539.5 1901.5,563.8 1918.5,558.1 1917.7,551.6 1925.8,535.4 1922.6,531.4 1933.1,526.5 1932.3,520.0" fill="none" stroke="#2a2a2a" stroke-width="0.9" stroke-linejoin="round"/>
<polygon points="1747.2,414.6 1749.8,417.6 1755.1,419.6 1755.8,424.9 1767.1,420.9 1773.7,422.3 1781.7,422.3 1786.3,424.9 1789.6,422.3 1802.9,424.9 1810.9,430.2 1816.2,437.5 1850.7,451.5 1856.0,453.5 1850.7,463.4 1844.1,474.0 1854.7,482.0 1849.4,492.6 1821.5,482.0 1802.9,467.4 1795.0,458.1 1785.7,453.5 1778.4,450.1 1761.1,456.1 1749.8,455.4 1736.5,454.1 1728.6,448.8 1729.9,444.8 1731.9,434.2 1740.5,422.3 1745.2,421.6" fill="#d0fdcb" stroke="#2a2a2a" stroke-width="0.9" stroke-linejoin="round"/>
<polygon points="1724.6,448.8 1728.6,450.8 1731.2,460.8 1736.5,464.1 1749.8,472.7 1763.1,480.0 1757.1,484.6 1724.6,462.1" fill="#d0fdcb" stroke="#2a2a2a" stroke-width="0.9" stroke-linejoin="round"/>
<polygon points="1761.1,457.0 1778.4,451.1 1785.7,453.9 1789.6,458.1 1795.0,468.7 1794.3,474.0 1775.7,475.8 1773.7,470.0 1763.1,460.8" fill="#d0fdcb" stroke="#2a2a2a" stroke-width="0.9" stroke-linejoin="round"/>
<polygon points="1729.9,450.8 1749.8,456.5 1760.4,457.4 1762.4,462.1 1773.1,470.7 1774.4,476.0 1764.4,477.3 1749.8,471.4 1732.6,461.4" fill="#d0fdcb" stroke="#2a2a2a" stroke-width="0.9" stroke-linejoin="round"/>
<polygon points="1801.6,462.1 1808.2,463.4 1810.9,474.0 1820.2,479.3 1819.5,482.0 1798.9,475.4" fill="#d0fdcb" stroke="#2a2a2a" stroke-width="0.9" stroke-linejoin="round"/>
<polygon points="1856.0,453.5 1873.3,446.2 1886.6,447.5 1893.2,450.1 1890.5,452.8 1901.2,458.8 1906.5,458.1 1921.7,465.4 1937.0,474.0 1921.1,480.7 1935.7,487.3 1916.4,503.9 1901.2,517.8 1895.8,528.5 1894.5,536.4 1897.2,548.4 1886.6,545.1 1883.9,531.8 1866.6,529.8 1846.7,509.9 1836.1,503.2 1824.2,490.0 1821.5,482.0 1849.4,492.6 1854.7,482.0 1844.1,474.0 1850.7,463.4" fill="#d0fdcb" stroke="#2a2a2a" stroke-width="0.9" stroke-linejoin="round"/>
<polygon points="1902.5,517.8 1917.1,509.9 1926.4,508.5 1930.4,516.5 1933.0,521.8 1931.0,527.1 1922.4,530.4 1927.7,536.4 1922.4,549.7 1918.4,553.7 1913.1,560.3 1901.2,564.3 1899.8,539.1 1895.8,539.1 1895.2,528.5 1901.2,519.2" fill="#d0fdcb" stroke="#2a2a2a" stroke-width="0.9" stroke-linejoin="round"/>
<polygon points="1663.0,558.6 1682.4,563.5 1703.5,571.9 1714.1,577.6 1719.8,580.0 1725.4,584.1 1726.3,588.1 1723.0,591.4 1723.8,599.5 1718.1,602.7 1706.8,601.1 1698.7,594.6 1684.1,584.9 1669.5,575.2 1660.5,567.9" fill="#d0fdcb" stroke="#2a2a2a" stroke-width="0.9" stroke-linejoin="round"/>
<polygon points="1705.2,563.5 1716.5,564.6 1716.5,571.9 1718.1,577.6 1714.1,577.6 1704.4,571.9" fill="#d0fdcb" stroke="#2a2a2a" stroke-width="0.9" stroke-linejoin="round"/>
<polygon points="1726.3,538.2 1736.0,534.9 1753.8,534.6 1763.6,542.7 1768.4,558.1 1760.3,561.4 1737.6,559.7 1731.1,552.4" fill="#d0fdcb" stroke="#2a2a2a" stroke-width="0.9" stroke-linejoin="round"/>
<polygon points="1755.5,534.9 1775.7,534.3 1773.3,558.1 1770.1,557.3 1765.2,542.7" fill="#d0fdcb" stroke="#2a2a2a" stroke-width="0.9" stroke-linejoin="round"/>
<polygon points="1722.2,548.4 1726.3,546.8 1731.1,553.3 1736.0,559.7 1727.9,563.8 1723.0,558.9" fill="#d0fdcb" stroke="#2a2a2a" stroke-width="0.9" stroke-linejoin="round"/>
<polygon points="1736.0,560.6 1760.3,561.9 1769.2,558.9 1770.9,568.7 1769.2,579.2 1758.7,584.9 1747.3,597.9 1743.3,595.4 1740.9,581.7 1734.4,570.3" fill="#d0fdcb" stroke="#2a2a2a" stroke-width="0.9" stroke-linejoin="round"/>
<polygon points="1728.7,575.2 1733.6,571.1 1740.0,582.5 1742.5,594.6 1736.8,600.3 1732.7,593.0" fill="#d0fdcb" stroke="#2a2a2a" stroke-width="0.9" stroke-linejoin="round"/>
<polygon points="1771.7,571.1 1776.5,571.9 1780.6,580.0 1776.5,587.3 1769.2,590.6 1769.2,580.0" fill="#d0fdcb" stroke="#2a2a2a" stroke-width="0.9" stroke-linejoin="round"/>
<polygon points="1740.9,597.9 1747.3,598.7 1760.3,584.9 1769.2,580.8 1768.4,591.4 1761.9,596.3 1756.3,606.0 1752.2,601.1 1745.7,601.9" fill="#d0fdcb" stroke="#2a2a2a" stroke-width="0.9" stroke-linejoin="round"/>
<polygon points="1766.8,592.2 1775.7,594.6 1766.8,612.5 1768.4,617.3 1775.7,621.4 1771.7,627.9 1756.3,620.6 1755.5,610.9 1760.3,599.5" fill="#d0fdcb" stroke="#2a2a2a" stroke-width="0.9" stroke-linejoin="round"/>
<polygon points="1776.5,622.2 1784.7,623.0 1796.0,619.8 1812.2,620.9 1812.2,623.8 1796.0,624.6 1784.7,628.7 1776.5,625.5" fill="#d0fdcb" stroke="#2a2a2a" stroke-width="0.9" stroke-linejoin="round"/>
<polygon points="1851.2,569.5 1859.3,571.9 1856.0,580.0 1844.7,597.9 1836.6,610.9 1823.6,623.8 1820.4,631.1 1817.1,623.8 1825.2,610.9 1839.8,591.4 1847.9,576.8" fill="#d0fdcb" stroke="#2a2a2a" stroke-width="0.9" stroke-linejoin="round"/>
<polygon points="1899.9,568.7 1903.1,567.1 1905.5,571.9 1900.7,577.6" fill="#d0fdcb" stroke="#2a2a2a" stroke-width="0.9" stroke-linejoin="round"/>
<polygon points="1932.3,553.3 1906.3,627.1 1901.5,607.6 1903.1,604.4 1900.7,595.4" fill="#d0fdcb" stroke="#2a2a2a" stroke-width="0.9" stroke-linejoin="round"/>
<polygon points="1907.2,627.9 1909.6,662.8 1911.2,669.3 1909.6,687.1 1907.2,682.2 1908.0,666.0 1905.5,657.9" fill="#d0fdcb" stroke="#2a2a2a" stroke-width="0.9" stroke-linejoin="round"/>
<polygon points="1905.7,640.0 1908.3,640.0 1908.9,660.6 1911.3,666.5 1909.4,673.9 1910.4,687.2 1907.1,681.3 1908.6,672.4 1905.7,657.7" fill="#d0fdcb" stroke="#2a2a2a" stroke-width="0.9" stroke-linejoin="round"/>
<polygon points="1882.6,490.6 1906.5,491.3 1914.4,496.6 1916.4,503.2 1911.8,496.6 1903.8,493.3" fill="#ffffff" stroke="#444" stroke-width="0.9" stroke-linejoin="round"/>
<ellipse cx="657.6" cy="950" rx="37.5" ry="31.5" fill="#d0fdcb" stroke="#2a2a2a" stroke-width="0.9"/>
<path d="M1900.5 466.1 L1921.1 470.0" fill="none" stroke="#2a2a2a" stroke-width="1.4"/>
<path d="M1922.4 467.4 L1919.1 481.3" fill="none" stroke="#2a2a2a" stroke-width="1.4"/>
<path d="M1890.5 474.7 L1919.7 483.3" fill="none" stroke="#2a2a2a" stroke-width="1.4"/>
<path d="M1925.7 499.9 L1934.3 497.9" fill="none" stroke="#2a2a2a" stroke-width="1.4"/>
<path d="M1850.7 463.4 L1844.1 474.0" fill="none" stroke="#2a2a2a" stroke-width="1.4"/>
<path d="M1770.4 438.9 L1787.0 447.5" fill="none" stroke="#2a2a2a" stroke-width="1.4"/>
<path d="M1781.0 501.2 L1789.6 496.6 L1792.3 492.6 L1789.6 486.0 L1783.0 480.7" fill="none" stroke="#2a2a2a" stroke-width="1.4"/>
<clipPath id="ct1"><polygon points="1084.0,560.0 1098.0,547.0 1134.0,512.0 1226.0,489.0 1239.0,477.0 1270.0,480.0 1275.0,491.0 1309.0,466.0 1359.0,500.0 1340.0,518.0 1322.0,506.0 1290.0,533.0 1318.0,561.0 1299.0,579.0 1235.0,600.0 1206.0,616.0 1176.0,632.0 1150.0,652.0 1118.0,640.0 1100.0,650.0 1088.0,628.0 1087.0,614.0 1094.0,605.0 1087.0,586.0 1096.0,576.0"/></clipPath>
<clipPath id="ct2"><polygon points="1161.0,651.2 1221.8,634.5 1230.5,636.2 1246.8,633.0 1261.8,638.8 1273.5,670.0 1268.0,682.5 1255.5,685.5 1245.5,685.0 1226.8,677.5 1211.8,705.0 1229.1,732.3 1234.0,730.9 1238.9,740.1 1232.1,748.0 1211.4,760.8 1213.4,771.6 1179.0,783.4 1173.1,780.5 1167.2,772.6 1153.4,779.5 1144.5,769.6 1171.1,726.4 1157.3,710.6 1164.2,703.8 1151.4,690.0 1163.0,701.2 1151.8,692.5 1155.5,662.5"/></clipPath>
<g clip-path="url(#ct1)"><path d="M1032.8 586.8 L1058.0 567.5 M1058.0 567.5 L1080.4 550.2 M1186.6 468.8 L1209.7 451.1 M1259.0 413.2 L1286.8 391.9 M1286.8 391.9 L1302.5 379.8 M1092.8 551.8 L1143.3 513.0 M1168.3 493.9 L1199.1 470.2 M1199.1 470.2 L1225.4 450.0 M1225.4 450.0 L1268.1 417.3 M1043.7 601.0 L1078.8 574.1 M1078.8 574.1 L1119.5 542.8 M1119.5 542.8 L1150.1 519.4 M1194.9 485.0 L1235.2 454.1 M1235.2 454.1 L1286.3 414.9 M1286.3 414.9 L1313.4 394.0 M1048.3 606.9 L1083.0 580.3 M1083.0 580.3 L1108.3 560.9 M1108.3 560.9 L1129.5 544.6 M1129.5 544.6 L1176.6 508.4 M1176.6 508.4 L1227.7 469.2 M1227.7 469.2 L1272.4 435.0 M1272.4 435.0 L1312.9 403.9 M1312.9 403.9 L1318.0 400.0 M1097.5 580.9 L1142.3 546.5 M1142.3 546.5 L1197.6 504.1 M1197.6 504.1 L1227.6 481.0 M1084.0 602.9 L1117.8 576.9 M1117.8 576.9 L1140.5 559.5 M1140.5 559.5 L1179.9 529.2 M1179.9 529.2 L1229.0 491.6 M1229.0 491.6 L1258.8 468.7 M1258.8 468.7 L1291.4 443.7 M1092.1 605.9 L1129.3 577.4 M1158.5 555.0 L1193.3 528.3 M1193.3 528.3 L1233.3 497.6 M1233.3 497.6 L1277.8 463.4 M1277.8 463.4 L1319.7 431.3 M1319.7 431.3 L1333.8 420.5 M1070.0 635.3 L1121.1 596.1 M1121.1 596.1 L1154.9 570.1 M1154.9 570.1 L1178.4 552.1 M1279.6 474.5 L1303.0 456.5 M1303.0 456.5 L1323.8 440.6 M1074.6 641.3 L1106.8 616.5 M1106.8 616.5 L1131.0 598.0 M1131.0 598.0 L1186.3 555.5 M1223.4 527.1 L1246.9 509.0 M1246.9 509.0 L1276.2 486.6 M1301.8 466.9 L1344.3 434.3 M1118.9 617.8 L1157.6 588.1 M1157.6 588.1 L1208.3 549.3 M1208.3 549.3 L1237.4 526.9 M1237.4 526.9 L1263.2 507.1 M1263.2 507.1 L1302.1 477.3 M1333.7 453.0 L1349.4 440.9 M1085.8 655.9 L1134.4 618.6 M1180.7 583.1 L1219.0 553.7 M1269.6 514.8 L1314.2 480.6 M1314.2 480.6 L1350.0 453.1 M1350.0 453.1 L1355.5 448.9 M1145.0 620.1 L1187.1 587.7 M1187.1 587.7 L1236.9 549.5 M1236.9 549.5 L1280.1 516.4 M1280.1 516.4 L1303.0 498.8 M1303.0 498.8 L1355.3 458.7 M1355.3 458.7 L1360.2 454.9 M1095.4 668.4 L1143.5 631.6 M1143.5 631.6 L1191.9 594.5 M1191.9 594.5 L1225.8 568.4 M1225.8 568.4 L1279.5 527.2 M1305.4 507.4 L1330.6 488.0 M1101.5 676.3 L1156.3 634.2 M1156.3 634.2 L1188.6 609.4 M1213.2 590.6 L1267.6 548.8 M1267.6 548.8 L1306.3 519.1 M1306.3 519.1 L1341.6 492.0 M1211.9 601.0 L1264.2 560.8 M1264.2 560.8 L1300.4 533.1 M1300.4 533.1 L1352.5 493.1 M1352.5 493.1 L1375.7 475.2 M1185.7 632.6 L1205.6 617.3 M1205.6 617.3 L1231.6 597.4 M1231.6 597.4 L1277.3 562.3 M1277.3 562.3 L1308.8 538.1 M1308.8 538.1 L1348.5 507.7 M1348.5 507.7 L1372.1 489.6 M1117.1 696.7 L1155.1 667.6 M1155.1 667.6 L1202.0 631.5 M1202.0 631.5 L1237.7 604.2 M1237.7 604.2 L1275.6 575.1 M1275.6 575.1 L1320.1 540.9 M1320.1 540.9 L1359.0 511.1 M1359.0 511.1 L1386.8 489.7 M1175.9 662.6 L1215.8 632.1 M1265.6 593.9 L1289.7 575.3 M1312.2 558.1 L1334.6 540.9 M1334.6 540.9 L1382.4 504.2 M1382.4 504.2 L1392.2 496.7 M1127.4 710.1 L1152.4 691.0 M1206.8 649.3 L1260.6 608.0 M1260.6 608.0 L1297.8 579.4 M1347.4 541.4 L1382.6 514.3 M1292.9 403.8 L1325.2 430.9 M1325.2 430.9 L1341.0 444.2 M1341.0 444.2 L1375.5 473.1 M1375.5 473.1 L1378.0 475.2 M1311.5 444.7 L1350.7 477.6 M1350.7 477.6 L1365.5 490.1 M1231.4 401.0 L1271.8 434.9 M1271.8 434.9 L1291.7 451.6 M1291.7 451.6 L1324.5 479.1 M1342.6 494.3 L1354.0 503.8 M1222.3 411.8 L1266.4 448.8 M1209.0 427.7 L1238.3 452.2 M1238.3 452.2 L1270.5 479.3 M1199.9 438.6 L1221.4 456.6 M1221.4 456.6 L1246.0 477.3 M1246.0 477.3 L1270.2 497.6 M1270.2 497.6 L1291.0 515.1 M1291.0 515.1 L1306.9 528.4 M1306.9 528.4 L1322.4 541.4 M1187.3 453.5 L1208.5 471.2 M1252.4 508.1 L1292.8 542.0 M1292.8 542.0 L1309.9 556.4 M1176.5 466.4 L1207.3 492.3 M1207.3 492.3 L1252.8 530.4 M1252.8 530.4 L1293.6 564.7 M1293.6 564.7 L1299.1 569.3 M1182.3 494.0 L1199.8 508.6 M1223.0 528.1 L1240.9 543.1 M1240.9 543.1 L1282.9 578.3 M1183.6 517.6 L1212.6 541.9 M1212.6 541.9 L1257.4 579.5 M1141.3 508.4 L1166.1 529.2 M1166.1 529.2 L1181.4 542.1 M1181.4 542.1 L1211.3 567.2 M1211.3 567.2 L1232.8 585.2 M1232.8 585.2 L1248.2 598.2 M1248.2 598.2 L1263.8 611.3 M1132.4 519.0 L1148.4 532.4 M1148.4 532.4 L1170.9 551.3 M1170.9 551.3 L1202.4 577.7 M1202.4 577.7 L1237.9 607.5 M1237.9 607.5 L1255.0 621.8 M1165.9 571.4 L1203.4 602.9 M1203.4 602.9 L1220.1 616.9 M1220.1 616.9 L1243.0 636.1 M1148.3 581.7 L1179.7 608.0 M1179.7 608.0 L1220.6 642.3 M1220.6 642.3 L1230.7 650.8 M1096.5 561.8 L1132.7 592.2 M1155.1 611.0 L1174.5 627.3 M1174.5 627.3 L1193.0 642.8 M1193.0 642.8 L1219.0 664.7 M1085.9 574.4 L1122.1 604.8 M1122.1 604.8 L1137.5 617.7 M1137.5 617.7 L1175.7 649.8 M1175.7 649.8 L1207.5 676.4 M1207.5 676.4 L1208.5 677.2 M1075.6 586.7 L1093.2 601.4 M1130.9 633.0 L1168.9 664.9 M1168.9 664.9 L1198.2 689.5 M1063.8 600.8 L1100.1 631.2 M1100.1 631.2 L1134.3 659.9 M1152.0 674.8 L1175.1 694.1 M1175.1 694.1 L1186.3 703.6 M1053.7 612.7 L1070.9 627.2 M1070.9 627.2 L1106.8 657.3 M1106.8 657.3 L1142.8 687.5 M1142.8 687.5 L1174.0 713.7" fill="none" stroke="#ffea8a" stroke-width="2.7" stroke-linecap="round"/><path d="M1032.8 586.8 L1058.0 567.5 M1058.0 567.5 L1080.4 550.2 M1186.6 468.8 L1209.7 451.1 M1259.0 413.2 L1286.8 391.9 M1286.8 391.9 L1302.5 379.8 M1092.8 551.8 L1143.3 513.0 M1168.3 493.9 L1199.1 470.2 M1199.1 470.2 L1225.4 450.0 M1225.4 450.0 L1268.1 417.3 M1043.7 601.0 L1078.8 574.1 M1078.8 574.1 L1119.5 542.8 M1119.5 542.8 L1150.1 519.4 M1194.9 485.0 L1235.2 454.1 M1235.2 454.1 L1286.3 414.9 M1286.3 414.9 L1313.4 394.0 M1048.3 606.9 L1083.0 580.3 M1083.0 580.3 L1108.3 560.9 M1108.3 560.9 L1129.5 544.6 M1129.5 544.6 L1176.6 508.4 M1176.6 508.4 L1227.7 469.2 M1227.7 469.2 L1272.4 435.0 M1272.4 435.0 L1312.9 403.9 M1312.9 403.9 L1318.0 400.0 M1097.5 580.9 L1142.3 546.5 M1142.3 546.5 L1197.6 504.1 M1197.6 504.1 L1227.6 481.0 M1084.0 602.9 L1117.8 576.9 M1117.8 576.9 L1140.5 559.5 M1140.5 559.5 L1179.9 529.2 M1179.9 529.2 L1229.0 491.6 M1229.0 491.6 L1258.8 468.7 M1258.8 468.7 L1291.4 443.7 M1092.1 605.9 L1129.3 577.4 M1158.5 555.0 L1193.3 528.3 M1193.3 528.3 L1233.3 497.6 M1233.3 497.6 L1277.8 463.4 M1277.8 463.4 L1319.7 431.3 M1319.7 431.3 L1333.8 420.5 M1070.0 635.3 L1121.1 596.1 M1121.1 596.1 L1154.9 570.1 M1154.9 570.1 L1178.4 552.1 M1279.6 474.5 L1303.0 456.5 M1303.0 456.5 L1323.8 440.6 M1074.6 641.3 L1106.8 616.5 M1106.8 616.5 L1131.0 598.0 M1131.0 598.0 L1186.3 555.5 M1223.4 527.1 L1246.9 509.0 M1246.9 509.0 L1276.2 486.6 M1301.8 466.9 L1344.3 434.3 M1118.9 617.8 L1157.6 588.1 M1157.6 588.1 L1208.3 549.3 M1208.3 549.3 L1237.4 526.9 M1237.4 526.9 L1263.2 507.1 M1263.2 507.1 L1302.1 477.3 M1333.7 453.0 L1349.4 440.9 M1085.8 655.9 L1134.4 618.6 M1180.7 583.1 L1219.0 553.7 M1269.6 514.8 L1314.2 480.6 M1314.2 480.6 L1350.0 453.1 M1350.0 453.1 L1355.5 448.9 M1145.0 620.1 L1187.1 587.7 M1187.1 587.7 L1236.9 549.5 M1236.9 549.5 L1280.1 516.4 M1280.1 516.4 L1303.0 498.8 M1303.0 498.8 L1355.3 458.7 M1355.3 458.7 L1360.2 454.9 M1095.4 668.4 L1143.5 631.6 M1143.5 631.6 L1191.9 594.5 M1191.9 594.5 L1225.8 568.4 M1225.8 568.4 L1279.5 527.2 M1305.4 507.4 L1330.6 488.0 M1101.5 676.3 L1156.3 634.2 M1156.3 634.2 L1188.6 609.4 M1213.2 590.6 L1267.6 548.8 M1267.6 548.8 L1306.3 519.1 M1306.3 519.1 L1341.6 492.0 M1211.9 601.0 L1264.2 560.8 M1264.2 560.8 L1300.4 533.1 M1300.4 533.1 L1352.5 493.1 M1352.5 493.1 L1375.7 475.2 M1185.7 632.6 L1205.6 617.3 M1205.6 617.3 L1231.6 597.4 M1231.6 597.4 L1277.3 562.3 M1277.3 562.3 L1308.8 538.1 M1308.8 538.1 L1348.5 507.7 M1348.5 507.7 L1372.1 489.6 M1117.1 696.7 L1155.1 667.6 M1155.1 667.6 L1202.0 631.5 M1202.0 631.5 L1237.7 604.2 M1237.7 604.2 L1275.6 575.1 M1275.6 575.1 L1320.1 540.9 M1320.1 540.9 L1359.0 511.1 M1359.0 511.1 L1386.8 489.7 M1175.9 662.6 L1215.8 632.1 M1265.6 593.9 L1289.7 575.3 M1312.2 558.1 L1334.6 540.9 M1334.6 540.9 L1382.4 504.2 M1382.4 504.2 L1392.2 496.7 M1127.4 710.1 L1152.4 691.0 M1206.8 649.3 L1260.6 608.0 M1260.6 608.0 L1297.8 579.4 M1347.4 541.4 L1382.6 514.3 M1292.9 403.8 L1325.2 430.9 M1325.2 430.9 L1341.0 444.2 M1341.0 444.2 L1375.5 473.1 M1375.5 473.1 L1378.0 475.2 M1311.5 444.7 L1350.7 477.6 M1350.7 477.6 L1365.5 490.1 M1231.4 401.0 L1271.8 434.9 M1271.8 434.9 L1291.7 451.6 M1291.7 451.6 L1324.5 479.1 M1342.6 494.3 L1354.0 503.8 M1222.3 411.8 L1266.4 448.8 M1209.0 427.7 L1238.3 452.2 M1238.3 452.2 L1270.5 479.3 M1199.9 438.6 L1221.4 456.6 M1221.4 456.6 L1246.0 477.3 M1246.0 477.3 L1270.2 497.6 M1270.2 497.6 L1291.0 515.1 M1291.0 515.1 L1306.9 528.4 M1306.9 528.4 L1322.4 541.4 M1187.3 453.5 L1208.5 471.2 M1252.4 508.1 L1292.8 542.0 M1292.8 542.0 L1309.9 556.4 M1176.5 466.4 L1207.3 492.3 M1207.3 492.3 L1252.8 530.4 M1252.8 530.4 L1293.6 564.7 M1293.6 564.7 L1299.1 569.3 M1182.3 494.0 L1199.8 508.6 M1223.0 528.1 L1240.9 543.1 M1240.9 543.1 L1282.9 578.3 M1183.6 517.6 L1212.6 541.9 M1212.6 541.9 L1257.4 579.5 M1141.3 508.4 L1166.1 529.2 M1166.1 529.2 L1181.4 542.1 M1181.4 542.1 L1211.3 567.2 M1211.3 567.2 L1232.8 585.2 M1232.8 585.2 L1248.2 598.2 M1248.2 598.2 L1263.8 611.3 M1132.4 519.0 L1148.4 532.4 M1148.4 532.4 L1170.9 551.3 M1170.9 551.3 L1202.4 577.7 M1202.4 577.7 L1237.9 607.5 M1237.9 607.5 L1255.0 621.8 M1165.9 571.4 L1203.4 602.9 M1203.4 602.9 L1220.1 616.9 M1220.1 616.9 L1243.0 636.1 M1148.3 581.7 L1179.7 608.0 M1179.7 608.0 L1220.6 642.3 M1220.6 642.3 L1230.7 650.8 M1096.5 561.8 L1132.7 592.2 M1155.1 611.0 L1174.5 627.3 M1174.5 627.3 L1193.0 642.8 M1193.0 642.8 L1219.0 664.7 M1085.9 574.4 L1122.1 604.8 M1122.1 604.8 L1137.5 617.7 M1137.5 617.7 L1175.7 649.8 M1175.7 649.8 L1207.5 676.4 M1207.5 676.4 L1208.5 677.2 M1075.6 586.7 L1093.2 601.4 M1130.9 633.0 L1168.9 664.9 M1168.9 664.9 L1198.2 689.5 M1063.8 600.8 L1100.1 631.2 M1100.1 631.2 L1134.3 659.9 M1152.0 674.8 L1175.1 694.1 M1175.1 694.1 L1186.3 703.6 M1053.7 612.7 L1070.9 627.2 M1070.9 627.2 L1106.8 657.3 M1106.8 657.3 L1142.8 687.5 M1142.8 687.5 L1174.0 713.7" fill="none" stroke="#b9b9c6" stroke-width="1.5" stroke-dasharray="1.4 1.2"/></g>
<g clip-path="url(#ct2)"><path d="M1118.8 740.4 L1129.3 723.5 M1149.7 690.9 L1163.7 668.5 M1163.7 668.5 L1184.5 635.2 M1124.6 744.1 L1134.4 728.4 M1155.0 695.4 L1173.8 665.3 M1173.8 665.3 L1193.5 633.8 M1193.5 633.8 L1204.5 616.2 M1130.0 747.4 L1144.4 724.3 M1156.4 705.2 L1168.9 685.2 M1188.0 654.6 L1205.9 626.0 M1205.9 626.0 L1214.7 611.8 M1157.4 720.3 L1170.3 699.7 M1170.3 699.7 L1191.5 665.8 M1191.5 665.8 L1204.2 645.5 M1215.8 626.9 L1222.3 616.5 M1163.5 723.1 L1175.0 704.8 M1175.0 704.8 L1185.4 688.0 M1185.4 688.0 L1206.1 655.0 M1206.1 655.0 L1224.8 625.1 M1224.8 625.1 L1227.9 620.0 M1167.5 732.0 L1185.1 703.7 M1185.1 703.7 L1203.0 675.0 M1168.7 743.8 L1186.4 715.4 M1186.4 715.4 L1197.8 697.2 M1197.8 697.2 L1209.8 678.1 M1233.0 640.9 L1241.0 628.2 M1162.1 767.5 L1182.1 735.6 M1230.1 658.8 L1245.6 634.0 M1245.6 634.0 L1246.9 631.9 M1168.8 771.7 L1183.7 747.9 M1196.1 728.0 L1207.8 709.4 M1207.8 709.4 L1217.4 694.0 M1217.4 694.0 L1233.7 667.9 M1244.5 650.6 L1253.6 636.0 M1175.2 775.7 L1195.8 742.8 M1215.3 711.6 L1223.7 698.2 M1223.7 698.2 L1243.5 666.4 M1259.3 641.3 L1260.0 640.0 M1182.2 780.1 L1201.5 749.3 M1212.8 731.3 L1222.8 715.3 M1222.8 715.3 L1239.7 688.1 M1239.7 688.1 L1257.3 660.1 M1257.3 660.1 L1267.0 644.4 M1188.1 783.8 L1196.6 770.2 M1196.6 770.2 L1207.6 752.6 M1207.6 752.6 L1224.1 726.2 M1233.8 710.7 L1250.2 684.5 M1259.6 669.4 L1272.9 648.1 M1194.2 787.6 L1205.1 770.1 M1205.1 770.1 L1213.2 757.2 M1213.2 757.2 L1227.3 734.7 M1227.3 734.7 L1243.8 708.3 M1258.0 685.5 L1269.2 667.6 M1269.2 667.6 L1279.0 651.9 M1200.0 791.2 L1214.5 767.9 M1228.0 746.3 L1244.8 719.4 M1255.8 701.9 L1268.2 682.0 M1207.6 796.0 L1225.4 767.6 M1225.4 767.6 L1236.0 750.5 M1236.0 750.5 L1248.1 731.2 M1277.1 684.7 L1292.4 660.3 M1197.3 598.3 L1215.9 607.0 M1215.9 607.0 L1244.6 620.3 M1244.6 620.3 L1261.5 628.2 M1261.5 628.2 L1279.9 636.8 M1192.8 607.9 L1215.3 618.4 M1215.3 618.4 L1248.9 634.1 M1248.9 634.1 L1283.4 650.1 M1187.8 618.6 L1205.6 626.9 M1236.1 641.1 L1264.7 654.5 M1264.7 654.5 L1278.4 660.9 M1197.0 634.5 L1218.6 644.5 M1218.6 644.5 L1235.0 652.2 M1235.0 652.2 L1253.3 660.7 M1253.3 660.7 L1274.0 670.4 M1178.4 638.8 L1193.1 645.7 M1193.1 645.7 L1215.1 655.9 M1215.1 655.9 L1233.1 664.3 M1267.0 680.1 L1269.0 681.1 M1187.8 656.5 L1202.8 663.5 M1202.8 663.5 L1222.2 672.5 M1222.2 672.5 L1256.2 688.3 M1256.2 688.3 L1263.9 691.9 M1168.8 659.2 L1188.4 668.4 M1209.1 678.0 L1222.8 684.4 M1222.8 684.4 L1257.2 700.4 M1164.7 668.2 L1189.0 679.5 M1189.0 679.5 L1224.2 696.0 M1224.2 696.0 L1243.5 704.9 M1243.5 704.9 L1255.3 710.4 M1160.1 678.0 L1191.9 692.8 M1191.9 692.8 L1224.1 707.9 M1224.1 707.9 L1250.7 720.3 M1155.3 688.3 L1177.1 698.5 M1238.2 727.0 L1245.9 730.6 M1149.8 700.1 L1183.4 715.8 M1203.0 724.9 L1218.8 732.3 M1218.8 732.3 L1240.4 742.4 M1146.1 708.1 L1169.1 718.8 M1169.1 718.8 L1198.0 732.3 M1198.0 732.3 L1230.8 747.5 M1230.8 747.5 L1236.7 750.3 M1141.4 718.2 L1167.8 730.5 M1217.3 753.6 L1232.0 760.4 M1136.3 728.9 L1157.3 738.7 M1157.3 738.7 L1193.4 755.5 M1193.4 755.5 L1212.2 764.3 M1212.2 764.3 L1227.0 771.2 M1132.3 737.6 L1156.6 749.0 M1156.6 749.0 L1189.3 764.2 M1220.1 778.5 L1222.9 779.9 M1126.6 749.8 L1148.6 760.1 M1172.4 771.2 L1203.6 785.7 M1203.6 785.7 L1217.2 792.1 M1122.3 759.0 L1140.9 767.6 M1157.7 775.4 L1177.0 784.5 M1205.4 797.7 L1213.0 801.2" fill="none" stroke="#ffea8a" stroke-width="2.7" stroke-linecap="round"/><path d="M1118.8 740.4 L1129.3 723.5 M1149.7 690.9 L1163.7 668.5 M1163.7 668.5 L1184.5 635.2 M1124.6 744.1 L1134.4 728.4 M1155.0 695.4 L1173.8 665.3 M1173.8 665.3 L1193.5 633.8 M1193.5 633.8 L1204.5 616.2 M1130.0 747.4 L1144.4 724.3 M1156.4 705.2 L1168.9 685.2 M1188.0 654.6 L1205.9 626.0 M1205.9 626.0 L1214.7 611.8 M1157.4 720.3 L1170.3 699.7 M1170.3 699.7 L1191.5 665.8 M1191.5 665.8 L1204.2 645.5 M1215.8 626.9 L1222.3 616.5 M1163.5 723.1 L1175.0 704.8 M1175.0 704.8 L1185.4 688.0 M1185.4 688.0 L1206.1 655.0 M1206.1 655.0 L1224.8 625.1 M1224.8 625.1 L1227.9 620.0 M1167.5 732.0 L1185.1 703.7 M1185.1 703.7 L1203.0 675.0 M1168.7 743.8 L1186.4 715.4 M1186.4 715.4 L1197.8 697.2 M1197.8 697.2 L1209.8 678.1 M1233.0 640.9 L1241.0 628.2 M1162.1 767.5 L1182.1 735.6 M1230.1 658.8 L1245.6 634.0 M1245.6 634.0 L1246.9 631.9 M1168.8 771.7 L1183.7 747.9 M1196.1 728.0 L1207.8 709.4 M1207.8 709.4 L1217.4 694.0 M1217.4 694.0 L1233.7 667.9 M1244.5 650.6 L1253.6 636.0 M1175.2 775.7 L1195.8 742.8 M1215.3 711.6 L1223.7 698.2 M1223.7 698.2 L1243.5 666.4 M1259.3 641.3 L1260.0 640.0 M1182.2 780.1 L1201.5 749.3 M1212.8 731.3 L1222.8 715.3 M1222.8 715.3 L1239.7 688.1 M1239.7 688.1 L1257.3 660.1 M1257.3 660.1 L1267.0 644.4 M1188.1 783.8 L1196.6 770.2 M1196.6 770.2 L1207.6 752.6 M1207.6 752.6 L1224.1 726.2 M1233.8 710.7 L1250.2 684.5 M1259.6 669.4 L1272.9 648.1 M1194.2 787.6 L1205.1 770.1 M1205.1 770.1 L1213.2 757.2 M1213.2 757.2 L1227.3 734.7 M1227.3 734.7 L1243.8 708.3 M1258.0 685.5 L1269.2 667.6 M1269.2 667.6 L1279.0 651.9 M1200.0 791.2 L1214.5 767.9 M1228.0 746.3 L1244.8 719.4 M1255.8 701.9 L1268.2 682.0 M1207.6 796.0 L1225.4 767.6 M1225.4 767.6 L1236.0 750.5 M1236.0 750.5 L1248.1 731.2 M1277.1 684.7 L1292.4 660.3 M1197.3 598.3 L1215.9 607.0 M1215.9 607.0 L1244.6 620.3 M1244.6 620.3 L1261.5 628.2 M1261.5 628.2 L1279.9 636.8 M1192.8 607.9 L1215.3 618.4 M1215.3 618.4 L1248.9 634.1 M1248.9 634.1 L1283.4 650.1 M1187.8 618.6 L1205.6 626.9 M1236.1 641.1 L1264.7 654.5 M1264.7 654.5 L1278.4 660.9 M1197.0 634.5 L1218.6 644.5 M1218.6 644.5 L1235.0 652.2 M1235.0 652.2 L1253.3 660.7 M1253.3 660.7 L1274.0 670.4 M1178.4 638.8 L1193.1 645.7 M1193.1 645.7 L1215.1 655.9 M1215.1 655.9 L1233.1 664.3 M1267.0 680.1 L1269.0 681.1 M1187.8 656.5 L1202.8 663.5 M1202.8 663.5 L1222.2 672.5 M1222.2 672.5 L1256.2 688.3 M1256.2 688.3 L1263.9 691.9 M1168.8 659.2 L1188.4 668.4 M1209.1 678.0 L1222.8 684.4 M1222.8 684.4 L1257.2 700.4 M1164.7 668.2 L1189.0 679.5 M1189.0 679.5 L1224.2 696.0 M1224.2 696.0 L1243.5 704.9 M1243.5 704.9 L1255.3 710.4 M1160.1 678.0 L1191.9 692.8 M1191.9 692.8 L1224.1 707.9 M1224.1 707.9 L1250.7 720.3 M1155.3 688.3 L1177.1 698.5 M1238.2 727.0 L1245.9 730.6 M1149.8 700.1 L1183.4 715.8 M1203.0 724.9 L1218.8 732.3 M1218.8 732.3 L1240.4 742.4 M1146.1 708.1 L1169.1 718.8 M1169.1 718.8 L1198.0 732.3 M1198.0 732.3 L1230.8 747.5 M1230.8 747.5 L1236.7 750.3 M1141.4 718.2 L1167.8 730.5 M1217.3 753.6 L1232.0 760.4 M1136.3 728.9 L1157.3 738.7 M1157.3 738.7 L1193.4 755.5 M1193.4 755.5 L1212.2 764.3 M1212.2 764.3 L1227.0 771.2 M1132.3 737.6 L1156.6 749.0 M1156.6 749.0 L1189.3 764.2 M1220.1 778.5 L1222.9 779.9 M1126.6 749.8 L1148.6 760.1 M1172.4 771.2 L1203.6 785.7 M1203.6 785.7 L1217.2 792.1 M1122.3 759.0 L1140.9 767.6 M1157.7 775.4 L1177.0 784.5 M1205.4 797.7 L1213.0 801.2" fill="none" stroke="#b9b9c6" stroke-width="1.5" stroke-dasharray="1.4 1.2"/></g>
<path d="M631.0 402.5 C635.4 409.9 639.7 421.8 650.0 434.0 C660.3 446.2 667.8 448.5 675.0 455.0 C682.2 461.5 677.3 457.2 681.0 462.0 C684.7 466.8 688.7 472.5 691.0 475.7 M1016.7 188.7 C1017.0 189.9 1018.9 190.0 1018.0 194.0 C1017.1 198.0 1013.0 201.4 1013.0 206.0 C1013.0 210.6 1014.5 211.0 1018.0 213.7 C1021.5 216.4 1026.0 215.2 1028.0 217.5 C1030.0 219.8 1030.2 221.9 1026.7 223.7 C1023.2 225.4 1016.2 222.9 1013.0 225.0 C1009.8 227.1 1011.0 230.1 1013.0 232.5 C1015.0 234.9 1020.0 229.7 1021.7 235.5 C1023.5 241.3 1021.8 251.1 1020.5 257.5 C1019.2 263.9 1017.2 258.9 1016.0 263.0 C1014.8 267.1 1016.8 268.7 1015.5 275.0 C1014.2 281.3 1012.2 282.4 1010.5 290.0 C1008.8 297.6 1005.7 298.2 1008.0 307.5 C1010.3 316.8 1017.3 321.2 1020.5 330.0 C1023.7 338.8 1023.5 335.7 1021.7 345.0 C1020.0 354.3 1014.8 358.3 1013.0 370.0 C1011.2 381.7 1015.2 384.7 1014.0 395.0 C1012.8 405.3 1010.8 406.3 1008.0 414.0 C1005.2 421.7 1003.4 424.7 1002.0 428.0 M1202.5 403.0 C1203.2 407.0 1202.5 412.5 1205.5 420.0 C1208.5 427.5 1207.3 425.2 1215.5 435.0 C1223.7 444.8 1234.7 455.7 1240.5 462.0 M1306.7 380.0 C1308.2 385.8 1312.7 396.2 1313.0 405.0 C1313.3 413.8 1308.9 411.1 1308.0 417.5 C1307.1 423.9 1311.6 425.9 1309.0 432.5 C1306.4 439.1 1299.0 439.1 1296.7 446.0 C1294.4 452.9 1298.5 458.3 1299.0 462.0 M1419.0 384.5 C1419.3 388.7 1418.4 393.1 1420.5 402.5 C1422.6 411.9 1422.8 416.8 1428.0 425.0 C1433.2 433.2 1437.5 428.9 1443.0 437.5 C1448.5 446.1 1449.7 456.3 1451.7 462.0 M1477.0 178.8 C1481.1 180.5 1486.9 186.2 1494.5 186.2 C1502.1 186.2 1504.2 180.0 1509.5 178.8 C1514.8 177.6 1514.7 178.6 1517.0 181.2 C1519.3 183.8 1517.4 187.2 1519.5 190.0 C1521.6 192.8 1521.7 192.3 1525.8 193.0 C1529.9 193.7 1532.6 194.0 1537.0 193.0 C1541.4 192.0 1539.8 189.2 1544.5 188.8 C1549.2 188.4 1552.3 189.2 1557.0 191.2 C1561.7 193.2 1560.4 196.9 1564.5 197.5 C1568.6 198.1 1570.4 193.5 1574.5 193.8 C1578.6 194.1 1574.4 195.7 1582.0 198.8 C1589.6 201.9 1599.1 205.6 1607.0 207.0 C1614.9 208.4 1609.4 203.1 1615.8 205.0 C1622.2 206.9 1627.8 212.7 1634.5 215.0 C1641.2 217.3 1640.4 216.8 1644.5 215.0 C1648.6 213.2 1650.0 211.0 1652.0 207.5 C1654.0 204.0 1651.5 202.8 1653.2 200.0 C1655.0 197.2 1652.2 196.6 1659.5 195.5 C1666.8 194.4 1675.8 194.4 1684.5 195.5 C1693.2 196.6 1688.2 197.9 1697.0 200.0 C1705.8 202.1 1708.6 203.9 1722.0 204.5 C1735.4 205.1 1745.2 202.3 1754.5 202.5 C1763.8 202.7 1757.0 201.4 1762.0 205.5 C1767.0 209.6 1771.4 216.2 1775.8 220.0 C1780.2 223.8 1780.5 219.1 1780.8 222.0 C1781.1 224.9 1776.7 228.9 1777.0 232.5 C1777.3 236.1 1777.9 235.8 1782.0 237.5 C1786.1 239.2 1791.3 237.7 1794.5 240.0 C1797.7 242.3 1793.8 242.6 1795.8 247.5 C1797.8 252.4 1797.7 258.3 1803.2 261.2 C1808.7 264.1 1815.6 259.1 1819.5 260.0 C1823.4 260.9 1821.8 261.8 1820.0 265.0 C1818.2 268.2 1813.0 270.3 1812.0 273.8 C1811.0 277.3 1814.8 276.8 1815.8 280.0 C1816.8 283.2 1815.3 284.0 1816.5 287.5 C1817.7 291.0 1814.8 293.0 1820.8 295.0 C1826.8 297.0 1836.8 293.9 1842.0 296.2 C1847.2 298.5 1839.7 300.6 1843.2 305.0 C1846.7 309.4 1850.0 310.1 1857.0 315.0 C1864.0 319.9 1869.4 322.4 1873.2 326.2 C1877.0 330.0 1875.2 328.9 1873.2 331.2 C1871.2 333.5 1866.2 333.0 1864.5 336.2 C1862.8 339.4 1862.9 341.9 1865.8 345.0 C1868.7 348.1 1874.7 347.2 1877.0 349.5 C1879.3 351.8 1877.2 352.8 1875.8 355.0 C1874.4 357.2 1872.0 356.2 1870.8 358.8 C1869.6 361.4 1869.1 364.5 1870.8 366.2 C1872.5 367.9 1872.7 364.1 1878.2 366.2 C1883.7 368.3 1889.4 370.9 1894.5 375.0 C1899.6 379.1 1898.5 374.5 1900.0 383.8 C1901.5 393.1 1900.8 404.8 1900.8 415.0 C1900.8 425.2 1900.2 424.6 1900.0 427.5 M1532.5 450.0 C1530.6 450.9 1527.2 451.0 1524.5 453.8 C1521.8 456.6 1521.7 460.1 1520.8 462.0 M681.2 462.0 C683.5 465.2 684.8 472.0 691.2 475.8 C697.6 479.6 701.8 474.7 708.8 478.2 C715.8 481.7 717.7 485.2 721.2 490.8 C724.7 496.4 720.6 497.3 723.8 502.0 C727.0 506.7 730.3 505.9 735.0 510.8 C739.7 515.7 739.1 519.3 743.8 523.2 C748.5 527.1 748.3 524.9 755.0 527.5 C761.7 530.1 762.3 531.6 772.5 534.5 C782.7 537.4 786.0 536.1 798.8 540.0 C811.6 543.9 815.6 547.7 827.5 551.2 C839.4 554.7 837.2 553.6 850.0 555.2 C862.8 556.8 871.4 557.6 882.5 558.2 C893.6 558.8 891.5 556.9 897.5 557.8 C903.5 558.7 905.5 561.0 908.0 562.0 M1001.8 430.0 C1000.9 432.3 998.3 435.9 998.0 440.0 C997.7 444.1 1001.4 442.2 1000.5 447.5 C999.6 452.8 995.7 455.5 994.2 462.5 C992.7 469.5 992.4 470.8 994.2 477.5 C996.0 484.2 1000.6 486.5 1001.8 491.2 C1003.0 495.9 997.8 493.7 999.2 497.5 C1000.6 501.3 1005.9 502.2 1008.0 507.5 C1010.1 512.8 1010.9 511.8 1008.0 520.0 C1005.1 528.2 998.4 534.9 995.5 542.5 C992.6 550.1 997.2 547.2 995.5 552.5 C993.8 557.8 991.2 555.1 988.0 565.0 C984.8 574.9 985.9 584.5 981.8 595.0 C977.7 605.5 972.3 600.1 970.5 610.0 C968.7 619.9 973.3 626.4 974.2 637.5 C975.1 648.6 971.6 649.9 974.2 657.5 C976.8 665.1 980.8 660.1 985.5 670.0 C990.2 679.9 991.3 687.2 994.2 700.0 C997.1 712.8 995.4 717.4 998.0 725.0 C1000.6 732.6 999.7 729.0 1005.5 732.5 C1011.3 736.0 1017.2 735.5 1023.0 740.0 C1028.8 744.5 1028.8 749.2 1030.5 752.0 M908.0 562.5 C910.9 564.0 915.2 564.7 920.5 568.8 C925.8 572.9 928.5 573.9 930.5 580.0 C932.5 586.1 926.9 588.0 929.2 595.0 C931.5 602.0 936.1 601.8 940.5 610.0 C944.9 618.2 946.0 621.2 948.0 630.0 C950.0 638.8 946.9 638.8 949.2 647.5 C951.5 656.2 951.3 656.4 958.0 667.5 C964.7 678.6 971.6 686.8 978.0 695.0 C984.4 703.2 981.4 700.2 985.5 702.5 C989.6 704.8 993.2 704.4 995.5 705.0 M1208.0 430.0 C1213.2 435.2 1220.0 441.4 1230.5 452.5 C1241.0 463.6 1244.2 466.4 1253.0 477.5 C1261.8 488.6 1265.1 493.0 1268.0 500.0 C1270.9 507.0 1271.9 501.7 1265.5 507.5 C1259.1 513.3 1247.8 518.6 1240.5 525.0 C1233.2 531.4 1241.8 525.1 1234.2 535.0 C1226.6 544.9 1217.0 556.4 1208.0 567.5 C1199.0 578.6 1202.5 573.8 1195.5 582.5 C1188.5 591.2 1186.8 594.5 1178.0 605.0 C1169.2 615.5 1167.9 619.9 1158.0 627.5 C1148.1 635.1 1144.8 631.1 1135.5 637.5 C1126.2 643.9 1125.0 646.2 1118.0 655.0 C1111.0 663.8 1114.2 666.2 1105.5 675.0 C1096.8 683.8 1089.2 687.8 1080.5 692.5 C1071.8 697.2 1071.3 691.6 1068.0 695.0 C1064.7 698.4 1068.1 702.3 1066.4 706.9 C1064.7 711.5 1062.6 708.7 1060.9 714.7 C1059.2 720.7 1060.8 728.4 1059.3 732.8 C1057.8 737.2 1055.7 731.7 1054.6 733.6 C1053.5 735.5 1055.9 737.4 1054.6 741.0 C1053.3 744.6 1054.4 743.2 1049.2 749.0 C1044.0 754.8 1036.3 761.8 1032.4 765.7 M1310.5 430.0 C1307.3 433.5 1299.4 436.8 1296.8 445.0 C1294.2 453.2 1301.3 457.7 1299.2 465.0 C1297.1 472.3 1290.0 470.9 1288.0 476.2 C1286.0 481.4 1295.2 481.4 1290.5 487.5 C1285.8 493.6 1273.2 499.0 1268.0 502.5 M1650.0 568.7 C1652.3 569.8 1654.8 568.6 1659.7 573.5 C1664.6 578.4 1665.8 582.2 1671.1 589.8 C1676.4 597.4 1679.0 599.2 1682.4 606.0 C1685.8 612.8 1680.8 613.3 1685.7 619.0 C1690.6 624.7 1698.4 626.1 1703.5 630.3 C1708.6 634.5 1701.9 633.0 1707.6 636.8 C1713.3 640.6 1719.4 643.5 1727.9 646.5 C1736.4 649.5 1737.3 647.5 1744.1 649.8 C1750.9 652.1 1751.4 651.4 1757.1 656.3 C1762.8 661.2 1763.5 666.6 1768.4 670.9 C1773.3 675.2 1772.9 673.4 1778.2 674.9 C1783.5 676.4 1786.7 675.3 1791.2 677.4 C1795.7 679.5 1790.8 679.4 1797.6 683.9 C1804.4 688.4 1806.4 690.8 1820.4 696.8 C1834.4 702.8 1844.1 705.2 1857.7 709.8 C1871.3 714.3 1871.6 715.7 1878.8 716.3 C1886.0 716.9 1883.8 713.4 1888.5 712.3 C1893.2 711.2 1896.5 711.6 1899.0 711.4 M1896.6 597.9 C1897.2 600.9 1899.0 605.6 1899.0 610.9 C1899.0 616.2 1896.4 613.0 1896.6 620.6 C1896.8 628.2 1899.2 618.0 1899.9 643.3 C1900.6 668.6 1899.6 709.0 1899.5 729.0 M1421.0 400.0 C1422.8 404.7 1423.2 411.8 1428.5 420.0 C1433.8 428.2 1438.2 426.2 1443.5 435.0 C1448.8 443.8 1445.2 449.3 1451.0 457.5 C1456.8 465.7 1463.6 464.8 1468.5 470.0 C1473.4 475.2 1467.5 474.4 1472.2 480.0 C1476.9 485.6 1482.4 489.7 1488.5 493.8 C1494.6 497.9 1490.9 494.9 1498.5 497.5 C1506.1 500.1 1511.1 500.6 1521.0 505.0 C1530.9 509.4 1532.8 513.9 1541.0 516.2 C1549.2 518.5 1549.0 515.9 1556.0 515.0 C1563.0 514.1 1564.0 511.3 1571.0 512.5 C1578.0 513.7 1579.0 516.5 1586.0 520.0 C1593.0 523.5 1592.8 524.9 1601.0 527.5 C1609.2 530.1 1612.8 528.9 1621.0 531.2 C1629.2 533.5 1631.1 533.1 1636.0 537.5 C1640.9 541.9 1639.6 543.6 1642.2 550.0 C1644.8 556.4 1645.1 560.6 1647.2 565.0 C1649.3 569.4 1650.1 567.9 1651.0 568.8 M1532.2 450.0 C1530.2 451.4 1526.1 453.3 1523.5 456.2 C1520.9 459.1 1521.0 455.2 1521.0 462.5 C1521.0 469.8 1520.6 478.2 1523.5 487.5 C1526.4 496.8 1530.9 497.2 1533.5 502.5 C1536.1 507.8 1534.5 508.2 1534.8 510.0 M1645.5 496.2 C1644.2 498.8 1642.0 500.8 1639.8 507.5 C1637.6 514.2 1636.6 518.3 1636.0 525.0 C1635.4 531.7 1636.9 533.6 1637.2 536.2 M446.4 1031.3 C449.3 1026.2 455.1 1018.3 459.0 1009.6 C462.9 1000.9 467.0 1001.2 462.9 993.9 C458.8 986.6 446.3 986.5 441.3 978.2 C436.3 969.9 438.5 967.7 441.3 958.5 C444.1 949.3 441.6 947.6 453.1 938.9 C464.6 930.2 473.5 927.6 490.5 921.2 C507.5 914.8 510.3 911.8 525.9 911.3 C541.5 910.8 544.5 914.8 557.3 919.2 C570.1 923.6 572.6 927.9 580.9 930.2 C589.2 932.5 585.4 932.9 592.7 929.0 C600.1 925.1 605.0 917.7 612.4 913.3 C619.8 908.9 614.1 911.0 624.2 910.1 C634.3 909.2 638.3 908.2 655.7 909.4 C673.1 910.6 685.1 911.2 698.9 915.3 C712.7 919.4 705.5 917.0 714.7 927.1 C723.9 937.2 727.2 947.5 738.2 958.5 C749.2 969.5 746.2 966.4 761.8 974.2 C777.4 982.0 785.8 984.1 805.1 991.9 C824.4 999.7 830.6 1003.1 844.4 1007.7 C858.2 1012.3 859.5 1010.7 864.1 1011.6 M805.1 991.9 C806.0 991.3 798.5 986.4 809.0 989.2 C819.5 992.0 842.0 998.9 850.3 1003.7 C858.6 1008.5 854.9 1012.4 844.4 1009.6 C833.9 1006.8 814.3 996.0 805.1 991.9 M864.1 1013.6 C868.7 1011.8 877.8 1013.1 883.8 1005.7 C889.8 998.4 891.1 992.2 889.7 982.1 C888.3 972.0 882.0 973.5 877.9 962.5 C873.8 951.5 872.5 943.2 872.0 934.9 C871.5 926.6 868.6 929.9 875.9 927.1 C883.2 924.3 891.5 922.7 903.4 923.1 C915.3 923.5 916.4 925.3 927.0 929.0 C937.6 932.7 943.6 936.6 948.7 938.9 M844.4 1007.7 C849.0 1008.1 855.8 1011.0 864.1 1009.6 C872.4 1008.2 874.8 1008.2 879.8 1001.8 C884.8 995.4 887.1 991.3 885.7 982.1 C884.3 972.9 878.5 973.5 873.9 962.5 C869.3 951.5 867.5 943.3 866.1 934.9 C864.7 926.5 862.0 929.8 868.0 926.3 C874.0 922.8 881.5 921.2 891.6 920.0 C901.7 918.8 898.0 917.3 911.3 921.2 C924.6 925.1 940.0 933.2 948.7 936.9 M1033.2 746.1 C1031.4 747.9 1025.8 749.4 1025.4 754.0 C1025.0 758.6 1032.2 754.8 1031.3 765.8 C1030.4 776.8 1027.8 789.3 1021.4 801.2 C1015.0 813.1 1010.1 806.8 1003.7 816.9 C997.3 827.0 995.3 835.3 993.9 844.5 C992.5 853.7 1001.0 851.7 997.8 856.3 C994.6 860.9 984.7 859.5 980.1 864.1 C975.5 868.7 978.2 866.7 978.2 875.9 C978.2 885.1 983.8 894.3 980.1 903.5 C976.4 912.7 969.7 907.0 962.4 915.3 C955.1 923.6 951.9 933.4 948.7 938.9 M940.0 932.5 C943.5 936.6 950.3 940.7 955.0 950.0 C959.7 959.3 961.2 960.8 960.0 972.5 C958.8 984.2 955.2 987.8 950.0 1000.0 C944.8 1012.2 940.7 1014.5 937.5 1025.0 C934.3 1035.5 935.0 1036.2 936.2 1045.0 C937.4 1053.8 937.5 1054.9 942.5 1062.5 C947.5 1070.1 948.2 1071.2 957.5 1077.5 C966.8 1083.8 972.0 1086.5 982.5 1089.5 C993.0 1092.5 992.0 1092.4 1002.5 1090.5 C1013.0 1088.6 1014.1 1087.7 1027.5 1081.2 C1040.9 1074.7 1045.4 1072.1 1060.0 1062.5 C1074.6 1052.9 1080.4 1049.3 1090.0 1040.0 C1099.6 1030.7 1097.7 1031.8 1101.2 1022.5 C1104.7 1013.2 1102.9 1010.5 1105.0 1000.0 C1107.1 989.5 1106.5 985.1 1110.0 977.5 C1113.5 969.9 1116.5 969.2 1120.0 967.5 C1123.5 965.8 1122.1 965.9 1125.0 970.0 C1127.9 974.1 1128.4 979.2 1132.5 985.0 C1136.6 990.8 1137.2 992.7 1142.5 995.0 C1147.8 997.3 1148.6 996.2 1155.0 995.0 C1161.4 993.8 1160.7 991.2 1170.0 990.0 C1179.3 988.8 1180.4 988.2 1195.0 990.0 C1209.6 991.8 1218.5 994.3 1232.5 997.5 C1246.5 1000.7 1247.1 1000.3 1255.0 1003.8 C1262.9 1007.3 1263.9 1007.6 1266.2 1012.5 C1268.5 1017.4 1269.9 1018.6 1265.0 1025.0 C1260.1 1031.4 1253.8 1031.8 1245.0 1040.0 C1236.2 1048.2 1233.1 1051.2 1227.5 1060.0 C1221.9 1068.8 1221.2 1069.9 1221.2 1077.5 C1221.2 1085.1 1220.2 1085.2 1227.5 1092.5 C1234.8 1099.8 1246.7 1105.0 1252.5 1108.8 M945.0 940.0 C947.9 941.4 952.6 939.2 957.5 946.2 C962.4 953.2 964.7 959.8 966.2 970.0 C967.7 980.2 967.6 978.3 963.8 990.0 C960.0 1001.7 954.1 1007.2 950.0 1020.0 C945.9 1032.8 945.9 1035.1 946.2 1045.0 C946.5 1054.9 945.6 1055.8 951.2 1062.5 C956.8 1069.2 959.8 1069.8 970.0 1073.8 C980.2 1077.8 983.3 1079.8 995.0 1079.5 C1006.7 1079.2 1006.0 1078.8 1020.0 1072.5 C1034.0 1066.2 1039.8 1063.0 1055.0 1052.5 C1070.2 1042.0 1075.7 1038.6 1085.0 1027.5 C1094.3 1016.4 1091.5 1016.7 1095.0 1005.0 C1098.5 993.3 1096.5 987.4 1100.0 977.5 C1103.5 967.6 1104.8 967.2 1110.0 962.5 C1115.2 957.8 1117.2 957.5 1122.5 957.5 C1127.8 957.5 1128.4 958.4 1132.5 962.5 C1136.6 966.6 1135.9 969.8 1140.0 975.0 C1144.1 980.2 1143.0 982.1 1150.0 985.0 C1157.0 987.9 1159.5 987.5 1170.0 987.5 C1180.5 987.5 1180.4 983.8 1195.0 985.0 C1209.6 986.2 1216.8 988.4 1232.5 992.5 C1248.2 996.6 1253.8 998.4 1262.5 1002.5 C1271.2 1006.6 1268.2 1005.9 1270.0 1010.0 C1271.8 1014.1 1274.1 1014.8 1270.0 1020.0 C1265.9 1025.2 1260.9 1024.3 1252.5 1032.5 C1244.1 1040.7 1239.0 1045.7 1233.8 1055.0 C1228.5 1064.3 1229.7 1064.9 1230.0 1072.5 C1230.3 1080.1 1229.8 1081.1 1235.0 1087.5 C1240.2 1093.9 1243.2 1093.9 1252.5 1100.0 C1261.8 1106.1 1256.3 1110.6 1275.0 1113.8 C1293.7 1117.0 1319.1 1113.8 1332.5 1113.8 M1110.0 962.5 C1111.8 961.6 1113.4 959.4 1117.5 958.8 C1121.6 958.2 1122.8 957.4 1127.5 960.0 C1132.2 962.6 1132.8 965.3 1137.5 970.0 C1142.2 974.7 1139.9 976.5 1147.5 980.0 C1155.1 983.5 1157.8 984.1 1170.0 985.0 C1182.2 985.9 1182.5 982.0 1200.0 983.8 C1217.5 985.5 1227.5 987.6 1245.0 992.5 C1262.5 997.4 1266.8 999.2 1275.0 1005.0 C1283.2 1010.8 1278.8 1014.6 1280.0 1017.5 M980.0 860.0 C979.4 861.8 977.2 861.7 977.5 867.5 C977.8 873.3 980.6 876.0 981.2 885.0 C981.8 894.0 983.8 899.5 980.0 906.2 C976.2 912.9 971.4 907.7 965.0 913.8 C958.6 919.9 956.6 926.4 952.5 932.5 C948.4 938.6 948.7 938.2 947.5 940.0 M1900.4 1084.9 C1899.1 1085.8 1901.7 1087.4 1894.7 1088.8 C1887.7 1090.2 1879.8 1086.2 1870.5 1091.1 C1861.2 1096.0 1858.5 1105.6 1854.8 1110.0 M1900.4 940.0 L1899.0 950.8 M1899.6 728.0 L1899.5 951.0" fill="none" stroke="#a6cbfb" stroke-width="1.1" stroke-linejoin="round"/>
<polygon points="1419.7,433.0 1421.5,436.0 1420.0,439.0 1418.0,436.0" fill="url(#wat)" stroke="#1c1c3a" stroke-width="0.9" stroke-linejoin="round"/>
<polygon points="1419.0,452.5 1426.0,450.0 1428.0,456.5" fill="url(#wat)" stroke="#1c1c3a" stroke-width="0.9" stroke-linejoin="round"/>
<polygon points="1557.0,410.5 1563.2,422.5 1564.0,431.2 1555.8,428.8 1557.0,420.0" fill="url(#wat)" stroke="#1c1c3a" stroke-width="0.9" stroke-linejoin="round"/>
<polygon points="1328.0,471.2 1333.0,470.5 1332.5,477.0 1328.5,477.5" fill="url(#wat)" stroke="#1c1c3a" stroke-width="0.9" stroke-linejoin="round"/>
<polygon points="1785.7,477.3 1792.3,476.7 1809.6,482.0 1819.5,486.0 1812.2,495.3 1808.2,497.3 1793.6,496.6 1789.6,484.6" fill="url(#wat)" stroke="#1c1c3a" stroke-width="0.9" stroke-linejoin="round"/>
<polygon points="1714.1,541.9 1718.1,538.2 1721.4,539.1 1722.7,545.1 1714.9,545.1" fill="url(#wat)" stroke="#1c1c3a" stroke-width="0.9" stroke-linejoin="round"/>
<polygon points="1719.0,558.9 1723.8,564.6 1729.5,568.7 1720.6,573.2" fill="url(#wat)" stroke="#1c1c3a" stroke-width="0.9" stroke-linejoin="round"/>
<polygon points="1718.1,606.8 1724.6,602.7 1728.7,593.3 1734.4,601.1 1735.2,614.9 1724.6,610.9" fill="url(#wat)" stroke="#1c1c3a" stroke-width="0.9" stroke-linejoin="round"/>
<polygon points="1796.8,655.5 1805.8,657.1 1819.5,659.5 1819.5,662.8 1807.4,663.6 1802.5,661.2" fill="url(#wat)" stroke="#1c1c3a" stroke-width="0.9" stroke-linejoin="round"/>
<polygon points="1857.7,671.7 1860.9,672.5 1864.2,675.4 1869.0,674.1 1874.7,672.2 1876.3,677.4 1860.9,678.2 1860.1,674.1" fill="url(#wat)" stroke="#1c1c3a" stroke-width="0.9" stroke-linejoin="round"/>
<polygon points="1822.0,705.8 1826.8,709.0 1826.0,710.6 1822.8,708.2" fill="url(#wat)" stroke="#1c1c3a" stroke-width="0.9" stroke-linejoin="round"/>
<polygon points="1856.9,715.5 1859.3,716.3 1857.7,720.4 1855.2,718.7" fill="url(#wat)" stroke="#1c1c3a" stroke-width="0.9" stroke-linejoin="round"/>
<polygon points="1434.8,549.5 1437.2,557.5 1441.0,566.2 1433.5,568.0 1432.2,560.0" fill="url(#wat)" stroke="#1c1c3a" stroke-width="0.9" stroke-linejoin="round"/>
<polygon points="1588.5,580.0 1601.0,572.5 1609.8,569.5 1614.8,578.8 1601.0,583.8 1591.0,582.5" fill="url(#wat)" stroke="#1c1c3a" stroke-width="0.9" stroke-linejoin="round"/>
<polygon points="1615.5,544.5 1616.8,546.2 1616.0,548.8 1614.8,547.5" fill="url(#wat)" stroke="#1c1c3a" stroke-width="0.9" stroke-linejoin="round"/>
<polygon points="1822.3,704.9 1826.8,708.6 1826.0,710.1 1822.3,707.1" fill="url(#wat)" stroke="#1c1c3a" stroke-width="0.9" stroke-linejoin="round"/>
<polygon points="1855.5,718.9 1858.5,715.2 1859.2,718.2 1857.0,720.8" fill="url(#wat)" stroke="#1c1c3a" stroke-width="0.9" stroke-linejoin="round"/>
<polygon points="1883.5,727.8 1886.5,727.0 1888.0,730.0 1884.3,730.7" fill="url(#wat)" stroke="#1c1c3a" stroke-width="0.9" stroke-linejoin="round"/>
<polygon points="1815.0,739.6 1819.4,737.1 1821.9,741.8 1818.6,744.0" fill="url(#wat)" stroke="#1c1c3a" stroke-width="0.9" stroke-linejoin="round"/>
<ellipse cx="1760.2" cy="435.3" rx="9" ry="7.5" fill="#fff" stroke="#2a2a2a" stroke-width="0.9"/>
<ellipse cx="1760.2" cy="435.3" rx="5.8" ry="5" fill="url(#wat)" stroke="#1c1c3a" stroke-width="0.7"/>
<ellipse cx="1870.9" cy="472.4" rx="5.5" ry="4.5" fill="#fff" stroke="#2a2a2a" stroke-width="0.9"/>
<ellipse cx="1870.9" cy="472.4" rx="3.8" ry="3" fill="url(#wat)" stroke="#1c1c3a" stroke-width="0.7"/>
<path d="M530.0 177.5 C529.2 178.8 525.5 180.5 526.0 184.0 C526.5 187.5 530.9 190.4 532.5 195.0 C534.1 199.6 528.0 203.8 534.0 207.0 C540.0 210.2 553.3 208.4 562.5 211.0 C571.7 213.6 576.3 217.2 580.0 220.0 C583.7 222.8 577.0 222.2 581.0 225.0 C585.0 227.8 594.2 231.8 600.0 234.0 C605.8 236.2 607.5 234.8 610.0 236.0 C612.5 237.2 609.5 240.0 612.5 240.0 C615.5 240.0 622.0 236.0 625.0 236.0 C628.0 236.0 626.7 237.2 627.5 240.0 C628.3 242.8 627.0 246.2 629.0 250.0 C631.0 253.8 633.3 256.4 637.5 259.0 C641.7 261.6 643.7 262.6 650.0 263.0 C656.3 263.4 666.0 262.6 669.0 261.0 C672.0 259.4 667.0 257.0 665.0 255.0 C663.0 253.0 659.6 252.5 659.0 251.0 C658.4 249.5 662.0 248.9 662.0 247.5 C662.0 246.1 656.9 246.3 659.0 244.0 C661.1 241.7 667.3 238.0 672.5 236.0 C677.7 234.0 674.5 234.6 685.0 234.0 C695.5 233.4 708.0 232.0 725.0 233.0 C742.0 234.0 759.5 237.0 770.0 239.0 C780.5 241.0 773.5 241.8 777.5 243.0 C781.5 244.2 786.5 245.7 790.0 245.0 C793.5 244.3 793.5 239.5 795.0 239.5 C796.5 239.5 792.5 242.1 797.5 245.0 C802.5 247.9 809.5 252.0 820.0 254.0 C830.5 256.0 841.8 256.2 850.0 255.0 C858.2 253.8 857.5 248.1 861.0 248.0 C864.5 247.9 858.2 252.6 867.5 254.5 C876.8 256.4 898.0 255.6 907.5 257.5 C917.0 259.4 908.0 260.7 915.0 264.0 C922.0 267.3 936.7 271.4 942.5 274.0 C948.3 276.6 945.5 275.3 944.0 277.0 C942.5 278.7 935.8 280.4 935.0 282.5 C934.2 284.6 937.5 286.0 940.0 287.5 C942.5 289.0 945.5 288.5 947.5 290.0 C949.5 291.5 948.0 293.2 950.0 295.0 C952.0 296.8 955.0 297.0 957.5 299.0 C960.0 301.0 960.8 304.0 962.5 305.0 C964.2 306.0 965.0 305.8 966.0 304.0 C967.0 302.2 965.7 297.8 967.5 296.0 C969.3 294.2 969.5 294.4 975.0 295.0 C980.5 295.6 988.4 299.2 995.0 299.0 C1001.6 298.8 1005.4 295.8 1008.0 294.0 C1010.6 292.2 1006.5 290.9 1008.0 290.0 C1009.5 289.1 1012.5 287.7 1015.5 289.5 C1018.5 291.3 1019.0 298.3 1023.0 299.0 C1027.0 299.7 1030.5 293.3 1035.5 293.0 C1040.5 292.7 1042.0 293.1 1048.0 297.5 C1054.0 301.9 1060.5 311.5 1065.5 315.0 C1070.5 318.5 1070.0 313.2 1073.0 315.0 C1076.0 316.8 1077.7 322.2 1080.5 324.0 C1083.3 325.8 1084.7 321.6 1087.0 324.0 C1089.3 326.4 1084.8 333.0 1092.0 336.0 C1099.2 339.0 1116.0 335.7 1123.0 339.0 C1130.0 342.3 1123.5 348.2 1127.0 352.5 C1130.5 356.8 1135.8 359.9 1140.5 360.5 C1145.2 361.1 1147.0 359.4 1150.5 355.5 C1154.0 351.6 1155.0 344.3 1158.0 341.0 C1161.0 337.7 1163.5 337.7 1165.5 339.0 C1167.5 340.3 1169.0 340.8 1168.0 347.5 C1167.0 354.2 1162.3 365.0 1160.5 372.5 C1158.7 380.0 1162.0 379.0 1159.0 385.0 C1156.0 391.0 1147.7 397.5 1145.5 402.5 C1143.3 407.5 1143.5 406.5 1148.0 410.0 C1152.5 413.5 1162.0 418.0 1168.0 420.0 C1174.0 422.0 1172.5 423.5 1178.0 420.0 C1183.5 416.5 1192.5 408.5 1195.5 402.5 C1198.5 396.5 1192.8 394.5 1193.0 390.0 C1193.2 385.5 1195.7 384.5 1196.7 380.0 C1197.7 375.5 1196.0 372.5 1198.0 367.5 C1200.0 362.5 1205.0 357.5 1206.7 355.0 M500.0 371.0 C505.0 372.6 513.5 377.3 525.0 379.0 C536.5 380.7 547.5 378.5 557.5 379.5 C567.5 380.5 563.0 377.7 575.0 384.0 C587.0 390.3 606.0 404.4 617.5 411.0 C629.0 417.6 625.5 415.2 632.5 417.0 C639.5 418.8 637.0 411.2 652.5 420.0 C668.0 428.8 698.5 452.8 710.0 461.0 M997.5 336.0 C999.6 336.3 1002.9 336.7 1008.0 337.5 C1013.1 338.3 1017.8 338.3 1023.0 340.0 C1028.2 341.7 1031.5 342.0 1034.0 346.0 C1036.5 350.0 1033.2 355.2 1035.5 360.0 C1037.8 364.8 1043.0 363.5 1045.5 370.0 C1048.0 376.5 1048.3 381.0 1048.0 392.5 C1047.7 404.0 1042.0 413.6 1044.0 427.5 C1046.0 441.4 1055.2 455.1 1058.0 462.0 M1206.7 355.0 C1208.5 355.5 1210.2 356.5 1215.5 357.5 C1220.8 358.5 1226.5 360.5 1233.0 360.0 C1239.5 359.5 1243.3 357.3 1248.0 355.0 C1252.7 352.7 1255.5 351.0 1256.7 348.7 C1257.9 346.4 1256.5 345.4 1254.0 343.7 C1251.5 342.0 1246.7 343.7 1244.0 340.0 C1241.3 336.3 1240.0 329.3 1240.5 325.0 C1241.0 320.7 1247.2 320.7 1246.7 318.7 C1246.2 316.7 1241.5 317.2 1238.0 315.0 C1234.5 312.8 1228.5 310.3 1229.0 307.5 C1229.5 304.7 1238.0 303.3 1240.5 301.0 C1243.0 298.7 1240.0 298.2 1241.7 296.0 C1243.4 293.8 1247.5 291.2 1249.0 290.0 M1206.7 355.0 C1203.0 358.0 1192.7 365.0 1188.0 370.0 C1183.3 375.0 1184.5 375.5 1183.0 380.0 C1181.5 384.5 1182.5 384.5 1180.5 392.5 C1178.5 400.5 1176.3 412.0 1173.0 420.0 C1169.7 428.0 1165.8 424.1 1164.0 432.5 C1162.2 440.9 1164.0 456.1 1164.0 462.0 M1206.7 355.0 C1207.0 359.0 1206.2 370.0 1208.0 375.0 C1209.8 380.0 1208.0 379.0 1215.5 380.0 C1223.0 381.0 1239.5 380.0 1245.5 380.0 M1233.0 360.0 C1231.0 362.5 1224.0 369.0 1223.0 372.5 C1222.0 376.0 1223.5 376.0 1228.0 377.5 C1232.5 379.0 1242.0 379.5 1245.5 380.0 M1215.5 380.0 C1219.5 380.7 1228.3 380.7 1235.5 383.7 C1242.7 386.7 1247.5 390.0 1251.7 395.0 C1255.9 400.0 1257.4 403.0 1256.7 408.7 C1256.0 414.4 1247.7 418.9 1248.0 423.7 C1248.3 428.5 1253.5 430.0 1258.0 432.5 C1262.5 435.0 1267.0 436.5 1270.5 436.0 C1274.0 435.5 1274.0 434.7 1275.5 430.0 C1277.0 425.3 1278.0 417.5 1278.0 412.5 C1278.0 407.5 1274.0 408.0 1275.5 405.0 C1277.0 402.0 1280.0 401.0 1285.5 397.5 C1291.0 394.0 1299.0 391.0 1303.0 387.5 C1307.0 384.0 1305.8 382.8 1305.5 380.0 C1305.2 377.2 1300.5 374.5 1301.7 373.7 C1302.9 372.9 1307.4 375.5 1311.7 376.0 C1316.0 376.5 1320.0 377.2 1323.0 376.0 C1326.0 374.8 1325.0 371.2 1326.7 370.0 C1328.4 368.8 1328.9 371.3 1331.7 370.0 C1334.5 368.7 1335.2 365.7 1340.5 363.7 C1345.8 361.7 1353.3 362.0 1358.0 360.0 C1362.7 358.0 1362.8 355.0 1364.0 353.7 M1333.0 322.0 C1331.5 321.8 1328.0 318.9 1325.5 321.0 C1323.0 323.1 1322.8 328.7 1320.5 332.5 C1318.2 336.3 1315.5 336.0 1314.0 340.0 C1312.5 344.0 1312.7 348.5 1313.0 352.5 C1313.3 356.5 1316.5 355.8 1315.5 360.0 C1314.5 364.2 1309.5 371.0 1308.0 373.7 M1364.0 353.7 C1363.0 352.0 1360.7 350.2 1359.0 345.0 C1357.3 339.8 1355.2 333.0 1355.5 327.5 C1355.8 322.0 1358.0 320.8 1360.5 317.5 C1363.0 314.2 1358.5 311.9 1368.0 311.0 C1377.5 310.1 1393.0 313.8 1408.0 313.0 C1423.0 312.2 1426.5 307.7 1443.0 307.0 C1459.5 306.3 1478.0 307.7 1490.5 309.5 C1503.0 311.3 1500.4 312.7 1505.5 316.0 C1510.6 319.3 1513.9 324.0 1516.0 326.0 M1364.0 353.7 C1366.3 355.7 1372.7 360.4 1375.5 363.7 C1378.3 367.0 1374.5 365.7 1378.0 370.0 C1381.5 374.3 1389.8 380.8 1393.0 385.0 C1396.2 389.2 1395.0 389.0 1394.0 391.0 C1393.0 393.0 1388.5 392.7 1388.0 395.0 C1387.5 397.3 1390.5 402.3 1391.7 402.5 C1392.9 402.7 1391.7 397.5 1394.0 396.0 C1396.3 394.5 1400.2 398.2 1403.0 395.0 C1405.8 391.8 1407.8 384.3 1408.0 380.0 C1408.2 375.7 1402.0 374.0 1404.0 373.7 C1406.0 373.4 1414.0 379.2 1418.0 378.7 C1422.0 378.2 1417.3 373.5 1424.0 371.0 C1430.7 368.5 1444.7 366.3 1451.7 366.0 C1458.7 365.7 1456.0 369.7 1459.0 369.5 C1462.0 369.3 1460.9 364.7 1466.7 365.0 C1472.5 365.3 1483.2 369.0 1488.0 371.0 C1492.8 373.0 1484.9 375.7 1490.5 375.0 C1496.1 374.3 1510.9 369.0 1516.0 367.5 M1305.0 377.0 C1305.6 377.6 1305.4 374.9 1308.0 380.0 C1310.6 385.1 1314.5 396.8 1318.0 402.5 C1321.5 408.2 1325.0 403.2 1325.5 408.7 C1326.0 414.2 1322.5 423.2 1320.5 430.0 C1318.5 436.8 1316.3 437.5 1315.5 442.5 C1314.7 447.5 1316.5 452.5 1316.7 455.0 M1536.5 178.2 C1544.6 180.1 1568.8 184.6 1577.0 187.5 C1585.2 190.4 1578.0 190.2 1577.5 192.5 C1577.0 194.8 1572.1 195.5 1574.5 198.8 C1576.9 202.1 1584.0 206.2 1589.5 208.8 C1595.0 211.4 1596.7 210.5 1602.0 212.0 C1607.3 213.5 1612.6 214.1 1615.8 216.2 C1619.0 218.3 1616.7 220.5 1618.2 222.5 C1619.7 224.5 1622.2 224.7 1623.2 226.2 C1624.2 227.7 1623.8 228.3 1623.2 230.0 C1622.6 231.7 1618.2 232.9 1620.0 234.5 C1621.8 236.1 1624.6 236.9 1632.0 238.0 C1639.4 239.1 1650.5 239.0 1657.0 240.0 C1663.5 241.0 1662.7 241.5 1664.5 243.0 C1666.3 244.5 1663.8 245.9 1665.8 247.5 C1667.8 249.1 1671.3 248.9 1674.5 251.2 C1677.7 253.5 1675.5 256.9 1682.0 258.8 C1688.5 260.7 1701.2 259.3 1707.0 260.5 C1712.8 261.7 1710.0 261.9 1710.8 265.0 C1711.6 268.1 1712.1 271.7 1710.8 276.2 C1709.5 280.7 1705.5 283.7 1704.5 287.5 C1703.5 291.3 1706.8 291.7 1705.8 295.0 C1704.8 298.3 1704.0 302.0 1699.5 303.8 C1695.0 305.6 1686.8 302.6 1683.2 303.8 C1679.6 305.0 1679.7 307.5 1681.5 310.0 C1683.3 312.5 1687.4 314.6 1692.0 316.2 C1696.6 317.8 1698.5 316.2 1704.5 318.0 C1710.5 319.8 1716.0 323.1 1722.0 325.0 C1728.0 326.9 1732.0 326.3 1734.5 327.5 C1737.0 328.7 1732.5 330.3 1734.5 331.2 C1736.5 332.1 1743.0 331.0 1744.5 332.0 C1746.0 333.0 1746.5 334.6 1742.0 336.2 C1737.5 337.8 1732.0 338.2 1722.0 340.0 C1712.0 341.8 1701.0 344.2 1692.0 345.0 C1683.0 345.8 1684.0 342.6 1677.0 343.8 C1670.0 345.0 1666.0 348.5 1657.0 351.2 C1648.0 353.9 1639.5 355.3 1632.0 357.5 C1624.5 359.7 1623.5 361.3 1619.5 362.0 C1615.5 362.7 1614.3 363.1 1612.0 361.2 C1609.7 359.3 1609.7 355.1 1608.2 352.5 C1606.7 349.9 1607.7 349.0 1604.5 348.0 C1601.3 347.0 1595.3 349.1 1592.0 347.5 C1588.7 345.9 1591.2 342.5 1588.2 340.0 C1585.2 337.5 1581.0 337.6 1577.0 335.0 C1573.0 332.4 1571.2 329.0 1568.2 327.0 C1565.2 325.0 1569.7 324.9 1562.0 325.0 C1554.3 325.1 1538.7 327.3 1529.5 327.5 C1520.3 327.7 1519.8 327.9 1515.8 326.2 C1511.8 324.5 1514.5 322.0 1509.5 318.8 C1504.5 315.6 1498.3 312.0 1490.8 310.0 C1483.3 308.0 1475.8 309.0 1472.0 308.8 M1619.5 362.0 C1618.0 361.8 1617.5 361.7 1612.0 361.2 C1606.5 360.7 1600.0 360.7 1592.0 359.5 C1584.0 358.3 1582.5 356.1 1572.0 355.0 C1561.5 353.9 1547.5 354.3 1539.5 353.8 C1531.5 353.3 1534.6 354.0 1532.0 352.5 C1529.4 351.0 1528.5 346.5 1526.5 346.2 C1524.5 345.9 1523.1 348.4 1522.0 351.2 C1520.9 354.0 1520.6 357.0 1520.8 360.0 C1521.0 363.0 1525.5 364.4 1523.2 366.2 C1520.9 368.0 1516.0 367.0 1509.5 368.8 C1503.0 370.6 1495.1 374.5 1490.8 375.0 C1486.5 375.5 1488.7 372.0 1488.2 371.2 M1900.0 427.5 L1900.0 430.0 M1852.0 451.2 L1898.2 443.2 M708.8 462.0 C711.5 463.5 713.3 466.9 722.5 469.5 C731.7 472.1 746.0 472.5 755.0 475.0 C764.0 477.5 760.5 477.6 767.5 482.0 C774.5 486.4 781.0 492.2 790.0 497.0 C799.0 501.8 794.0 500.6 812.5 505.8 C831.0 511.0 863.4 517.4 882.5 523.2 C901.6 529.0 902.9 532.6 908.0 535.0 M908.0 535.0 C914.5 538.0 928.0 542.0 940.5 550.0 C953.0 558.0 959.0 566.2 970.5 575.0 C982.0 583.8 992.5 590.0 998.0 593.8 M998.0 593.8 C999.2 596.0 1003.4 598.3 1004.2 605.0 C1005.0 611.7 1001.8 618.5 1001.8 627.5 C1001.8 636.5 1001.5 642.0 1004.2 650.0 C1006.9 658.0 1008.7 660.0 1015.5 667.5 C1022.3 675.0 1029.5 680.0 1038.0 687.5 C1046.5 695.0 1050.0 696.0 1058.0 705.0 C1066.0 714.0 1071.8 725.7 1078.0 732.5 C1084.2 739.3 1087.0 737.5 1089.2 738.8 M998.0 595.0 C1002.0 594.8 1007.2 594.8 1018.0 593.8 C1028.8 592.8 1039.3 592.0 1051.8 590.0 C1064.3 588.0 1073.3 585.0 1080.5 583.8 C1087.7 582.6 1084.5 583.1 1088.0 583.8 C1091.5 584.5 1096.0 586.8 1098.0 587.5 M1051.8 590.0 C1055.0 591.5 1060.8 593.5 1068.0 597.5 C1075.2 601.5 1080.0 605.0 1088.0 610.0 C1096.0 615.0 1104.0 620.0 1108.0 622.5 M1051.8 590.0 C1050.0 586.0 1046.8 578.5 1043.0 570.0 C1039.2 561.5 1035.5 556.5 1033.0 547.5 C1030.5 538.5 1029.5 533.0 1030.5 525.0 C1031.5 517.0 1033.5 515.0 1038.0 507.5 C1042.5 500.0 1047.0 493.5 1053.0 487.5 C1059.0 481.5 1065.0 479.5 1068.0 477.5 M1030.5 530.0 C1029.5 535.0 1028.0 542.5 1025.5 555.0 C1023.0 567.5 1019.5 585.0 1018.0 592.5 M1008.0 537.5 L1025.5 540.0 M1051.8 590.0 C1053.0 587.5 1055.5 582.0 1058.0 577.5 C1060.5 573.0 1063.0 569.5 1064.2 567.5 M1044.2 430.0 C1046.0 434.0 1048.2 440.5 1053.0 450.0 C1057.8 459.5 1062.0 468.7 1068.0 477.5 C1074.0 486.3 1078.0 487.3 1083.0 493.8 C1088.0 500.3 1088.5 506.0 1093.0 510.0 C1097.5 514.0 1100.5 513.6 1105.5 513.8 C1110.5 514.0 1114.0 510.5 1118.0 511.2 C1122.0 511.9 1124.0 516.2 1125.5 517.5 M1110.5 511.2 C1112.0 508.0 1112.5 500.7 1118.0 495.0 C1123.5 489.3 1128.5 487.5 1138.0 482.5 C1147.5 477.5 1152.5 474.5 1165.5 470.0 C1178.5 465.5 1193.0 461.5 1203.0 460.0 C1213.0 458.5 1211.0 459.5 1215.5 462.5 C1220.0 465.5 1222.0 471.5 1225.5 475.0 C1229.0 478.5 1231.5 479.0 1233.0 480.0 M1165.5 470.0 C1165.2 465.0 1164.2 453.0 1164.2 445.0 C1164.2 437.0 1165.2 433.0 1165.5 430.0 M1253.0 452.5 L1260.5 477.5 M1254.2 430.0 C1256.0 431.0 1258.7 434.2 1263.0 435.0 C1267.3 435.8 1273.0 434.0 1275.5 433.8 M1318.0 430.0 C1317.2 432.5 1314.2 437.5 1314.2 442.5 C1314.2 447.5 1315.2 450.0 1318.0 455.0 C1320.8 460.0 1321.0 462.5 1328.0 467.5 C1335.0 472.5 1345.8 475.5 1353.0 480.0 C1360.2 484.5 1363.2 482.5 1364.2 490.0 C1365.2 497.5 1363.7 510.5 1358.0 517.5 C1352.3 524.5 1341.0 521.5 1335.5 525.0 C1330.0 528.5 1332.5 529.0 1330.5 535.0 C1328.5 541.0 1328.0 548.8 1325.5 555.0 C1323.0 561.2 1316.5 562.7 1318.0 566.2 C1319.5 569.7 1322.0 571.7 1333.0 572.5 C1344.0 573.3 1363.8 569.3 1373.0 570.0 C1382.2 570.7 1378.2 573.2 1379.2 576.2 C1380.2 579.2 1382.2 580.2 1378.0 585.0 C1373.8 589.8 1362.8 595.0 1358.0 600.0 C1353.2 605.0 1351.7 601.5 1354.2 610.0 C1356.7 618.5 1362.2 629.0 1370.5 642.5 C1378.8 656.0 1386.4 666.2 1395.5 677.5 C1404.6 688.8 1411.9 694.5 1416.0 698.8 M1318.0 453.8 C1331.0 452.5 1363.4 450.5 1383.0 447.5 C1402.6 444.5 1409.4 440.5 1416.0 438.8 M1383.0 448.8 C1382.2 451.0 1378.7 455.5 1379.2 460.0 C1379.7 464.5 1384.2 469.0 1385.5 471.2 M1088.3 769.7 C1090.7 758.9 1096.7 729.9 1100.3 715.6 C1103.9 701.3 1102.1 705.8 1106.5 698.2 C1110.9 690.6 1114.4 686.8 1122.3 677.8 C1130.2 668.8 1136.8 661.0 1145.9 653.4 C1155.0 645.8 1161.0 644.7 1167.9 640.0 C1174.8 635.3 1172.5 635.0 1180.5 630.0 C1188.5 625.0 1197.0 621.0 1208.0 615.0 C1219.0 609.0 1223.0 605.0 1235.5 600.0 C1248.0 595.0 1257.8 593.5 1270.5 590.0 C1283.2 586.5 1286.7 584.6 1299.2 582.5 C1311.7 580.4 1317.2 580.5 1333.0 579.5 C1348.8 578.5 1361.4 577.2 1378.0 577.5 C1394.6 577.8 1408.4 580.5 1416.0 581.2 M1061.0 758.8 C1063.2 755.2 1067.0 749.0 1071.9 741.0 C1076.8 733.0 1080.6 725.8 1085.3 718.7 C1090.0 711.6 1092.8 709.4 1095.5 705.3 C1098.2 701.2 1094.9 703.7 1098.7 698.2 C1102.5 692.7 1106.5 686.3 1114.4 677.8 C1122.3 669.3 1128.9 663.3 1138.0 655.7 C1147.1 648.1 1151.0 644.4 1160.0 640.0 C1169.0 635.6 1174.4 636.3 1183.0 633.8 C1191.6 631.3 1197.8 629.8 1203.0 627.5 C1208.2 625.2 1208.4 624.5 1209.2 622.5 C1210.0 620.5 1207.3 618.5 1206.8 617.5 M1180.5 631.2 C1182.0 633.5 1182.5 634.7 1188.0 642.5 C1193.5 650.3 1197.5 661.5 1208.0 670.0 C1218.5 678.5 1229.5 678.0 1240.5 685.0 C1251.5 692.0 1253.5 700.8 1263.0 705.0 C1272.5 709.2 1278.5 702.0 1288.0 706.2 C1297.5 710.4 1306.0 722.2 1310.5 726.2 M1044.2 707.5 C1043.0 714.5 1038.0 735.5 1038.0 742.5 C1038.0 749.5 1043.0 742.5 1044.2 742.5 M1048.0 705.0 L1053.0 721.2 M1710.0 460.1 C1712.4 459.4 1719.0 459.1 1721.9 456.8 C1724.8 454.5 1723.3 450.4 1724.6 448.8 C1725.9 447.2 1726.2 447.7 1728.6 448.8 C1731.0 449.9 1732.3 453.1 1736.5 454.4 C1740.7 455.7 1744.9 455.4 1749.8 455.4 C1754.7 455.4 1755.4 455.3 1761.1 454.4 C1766.8 453.5 1773.2 451.7 1778.4 450.8 C1783.6 449.9 1784.8 451.8 1787.0 450.1 C1789.2 448.4 1789.1 445.1 1789.6 442.2 C1790.1 439.3 1790.3 438.0 1789.6 435.5 C1788.9 433.0 1787.0 430.8 1786.3 429.6 M1787.0 450.1 C1790.2 450.9 1796.3 451.2 1802.9 454.1 C1809.5 457.0 1812.0 460.2 1820.2 464.7 C1828.4 469.2 1836.9 473.2 1844.1 476.7 C1851.3 480.2 1854.9 478.8 1856.0 482.0 C1857.1 485.2 1856.3 492.5 1849.4 492.6 C1842.5 492.7 1827.1 484.7 1821.5 482.7 M1856.0 482.0 C1860.3 482.3 1868.8 486.6 1877.3 483.3 C1885.8 480.0 1894.3 469.0 1898.5 465.4 M1856.0 482.0 C1857.9 480.9 1862.4 478.4 1865.3 476.7 C1868.2 475.0 1869.5 474.1 1870.6 473.4 M1856.0 482.0 C1857.3 483.6 1855.3 485.8 1862.7 490.0 C1870.1 494.2 1885.8 498.2 1893.2 503.2 C1900.6 508.2 1898.2 511.7 1899.8 515.2 C1901.4 518.7 1901.7 517.8 1901.2 520.5 C1900.7 523.2 1898.3 524.8 1897.2 528.5 C1896.1 532.2 1895.3 534.6 1895.8 539.1 C1896.3 543.6 1898.7 543.6 1899.8 551.0 C1900.9 558.4 1900.9 571.0 1901.2 576.0 M1850.7 450.8 C1852.3 451.1 1854.2 452.8 1858.7 452.1 C1863.2 451.4 1865.3 449.2 1873.3 447.5 C1881.3 445.8 1893.5 444.3 1898.5 443.5 M1821.5 495.9 C1823.1 498.4 1826.6 503.3 1829.5 508.5 C1832.4 513.7 1834.5 516.5 1836.1 521.8 C1837.7 527.1 1836.5 531.1 1837.4 535.1 C1838.3 539.1 1837.1 538.8 1840.8 541.7 C1844.5 544.6 1851.6 546.2 1856.0 549.7 C1860.4 553.2 1861.9 553.7 1862.7 559.0 C1863.5 564.3 1860.5 572.6 1860.0 576.0 M1899.8 426.9 L1899.8 430.2 M1650.0 647.4 C1663.0 651.1 1685.2 656.3 1714.9 666.0 C1744.6 675.7 1781.8 690.0 1798.5 696.0 M1650.0 563.8 C1651.9 564.8 1655.5 565.8 1659.7 568.7 C1663.9 571.6 1663.3 572.6 1671.1 578.4 C1678.9 584.2 1691.6 593.0 1698.7 597.9 C1705.8 602.8 1702.9 601.4 1706.8 602.7 C1710.7 604.0 1713.2 601.5 1718.1 604.4 C1723.0 607.3 1727.5 614.5 1731.1 617.3 C1734.7 620.1 1734.0 618.5 1736.0 618.2 C1738.0 617.9 1737.3 614.6 1740.9 615.7 C1744.5 616.8 1747.6 620.2 1753.8 623.8 C1760.0 627.4 1764.2 628.1 1771.7 633.6 C1779.2 639.1 1786.3 647.2 1791.2 651.4 C1796.1 655.6 1791.8 653.6 1796.0 654.7 C1800.2 655.8 1806.7 655.8 1812.2 657.1 C1817.7 658.4 1819.4 660.7 1823.6 661.2 C1827.8 661.7 1829.4 661.5 1833.3 659.5 C1837.2 657.5 1838.2 655.6 1843.1 651.4 C1848.0 647.2 1850.9 646.2 1857.7 638.4 C1864.5 630.6 1870.6 620.9 1877.1 612.5 C1883.6 604.1 1886.5 601.5 1890.1 596.3 C1893.7 591.1 1893.7 590.1 1895.0 586.5 C1896.3 582.9 1895.6 582.3 1896.6 578.4 C1897.6 574.5 1899.4 573.9 1899.9 567.1 C1900.4 560.3 1899.7 551.8 1899.0 544.3 C1898.3 536.8 1896.4 534.6 1896.6 529.7 C1896.8 524.8 1899.2 521.9 1899.9 520.0 M1714.9 577.6 C1716.2 579.7 1719.5 584.0 1721.4 588.1 C1723.3 592.2 1724.1 595.0 1724.6 597.9 C1725.1 600.8 1724.0 601.7 1723.8 602.7 M1820.4 544.3 C1820.1 549.2 1820.0 557.0 1818.7 568.7 C1817.4 580.4 1815.2 589.7 1813.9 602.7 C1812.6 615.7 1812.9 623.2 1812.2 633.6 C1811.5 644.0 1810.9 650.5 1810.6 654.7 M1812.2 633.6 C1814.2 634.6 1815.5 634.8 1822.0 638.4 C1828.5 642.0 1839.5 647.5 1844.7 651.4 C1849.9 655.3 1845.0 649.8 1847.9 657.9 C1850.8 666.0 1856.7 684.5 1859.3 692.0 C1861.9 699.5 1860.6 694.6 1860.9 695.2 M1819.5 556.5 C1825.7 557.5 1843.9 559.3 1850.4 561.4 C1856.9 563.5 1851.8 565.3 1852.0 567.1 C1852.2 568.9 1851.4 569.7 1851.2 570.3 M1818.7 567.1 C1827.1 568.4 1845.3 571.2 1860.9 573.5 C1876.5 575.8 1889.5 577.4 1896.6 578.4 M1835.0 520.0 C1835.8 524.2 1835.1 535.3 1839.0 541.1 C1842.9 546.9 1849.9 546.0 1854.4 549.2 C1858.9 552.4 1860.1 554.1 1861.7 557.3 C1863.3 560.5 1863.6 560.5 1862.5 565.4 C1861.4 570.3 1859.6 575.5 1856.0 581.7 C1852.4 587.9 1848.3 589.8 1844.7 596.3 C1841.1 602.8 1842.1 608.9 1838.2 614.1 C1834.3 619.3 1828.4 619.3 1825.2 622.2 C1822.0 625.1 1822.5 625.5 1822.0 628.7 C1821.5 631.9 1822.6 636.5 1822.8 638.4 M1811.4 640.1 C1809.5 641.2 1802.8 643.1 1801.7 645.7 C1800.6 648.3 1804.0 651.0 1805.8 653.0 C1807.6 655.0 1809.6 655.0 1810.6 655.5 M1824.4 657.9 L1818.7 685.5 M1798.5 696.0 C1801.2 696.5 1806.2 697.8 1812.2 698.5 C1818.2 699.2 1815.8 700.3 1828.5 699.3 C1841.2 698.3 1865.4 693.4 1875.5 693.6 C1885.6 693.8 1875.9 697.8 1878.8 700.1 C1881.7 702.4 1887.8 704.0 1890.1 705.0 M1857.7 679.8 C1861.9 679.6 1874.3 679.8 1878.8 679.0 C1883.3 678.2 1880.1 676.4 1880.4 675.8 M1860.9 690.4 L1865.8 690.4 M1825.2 711.4 C1823.3 711.1 1819.4 708.2 1815.5 709.8 C1811.6 711.4 1809.0 715.8 1805.8 719.6 C1802.6 723.4 1800.6 727.1 1799.3 729.0 M1815.5 709.8 L1820.4 717.9 M1808.2 721.2 L1810.6 726.0 M1416.0 580.0 C1422.5 581.2 1425.5 579.4 1448.5 586.2 C1471.5 593.0 1506.5 606.0 1531.0 613.8 C1555.5 621.6 1547.2 618.3 1571.0 625.0 C1594.8 631.7 1634.2 643.0 1650.0 647.5 M1416.0 440.0 C1420.5 442.5 1430.0 446.7 1438.5 452.5 C1447.0 458.3 1452.2 460.8 1458.5 468.8 C1464.8 476.8 1467.8 480.3 1469.8 492.5 C1471.8 504.7 1470.8 516.0 1468.5 530.0 C1466.2 544.0 1462.5 551.3 1458.5 562.5 C1454.5 573.7 1450.5 581.5 1448.5 586.2 M1471.0 527.5 C1474.5 522.0 1483.5 505.7 1488.5 500.0 C1493.5 494.3 1494.3 501.8 1496.0 498.8 C1497.7 495.8 1491.4 487.0 1497.2 485.0 C1503.0 483.0 1519.3 488.0 1524.8 488.8 M1496.0 498.8 C1499.0 499.5 1507.2 500.5 1511.0 502.5 C1514.8 504.5 1511.8 506.8 1514.8 508.8 C1517.8 510.8 1522.5 510.5 1526.0 512.5 C1529.5 514.5 1531.4 513.3 1532.2 518.8 C1533.0 524.3 1526.3 530.8 1529.8 540.0 C1533.3 549.2 1549.6 550.2 1549.8 565.0 C1550.0 579.8 1534.8 604.0 1531.0 613.8 M1618.5 474.5 C1618.0 482.1 1617.3 501.4 1616.0 512.5 C1614.7 523.6 1611.4 526.0 1612.2 530.0 C1613.0 534.0 1618.0 530.5 1619.8 532.5 C1621.6 534.5 1621.8 535.5 1621.0 540.0 C1620.2 544.5 1618.2 550.5 1616.0 555.0 C1613.8 559.5 1610.3 559.0 1609.8 562.5 C1609.3 566.0 1612.3 569.2 1613.5 572.5 C1614.7 575.8 1613.0 575.8 1616.0 578.8 C1619.0 581.8 1626.0 585.8 1628.5 587.5 M1599.8 556.2 C1600.3 557.0 1600.2 559.2 1602.2 560.0 C1604.2 560.8 1608.3 560.0 1609.8 560.0 M1616.0 578.8 C1611.0 580.5 1597.0 583.8 1591.0 587.5 C1585.0 591.2 1588.2 590.5 1586.0 597.5 C1583.8 604.5 1582.8 617.5 1579.8 622.5 C1576.8 627.5 1573.3 620.0 1571.0 622.5 C1568.7 625.0 1564.5 628.0 1568.5 635.0 C1572.5 642.0 1584.3 650.5 1591.0 657.5 C1597.7 664.5 1597.7 666.7 1602.2 670.0 C1606.7 673.3 1605.7 673.6 1613.5 673.8 C1621.3 674.0 1633.3 670.5 1641.0 671.2 C1648.7 671.9 1650.0 676.2 1652.2 677.5 M1638.5 527.5 C1638.8 530.0 1638.3 535.0 1639.8 540.0 C1641.3 545.0 1644.3 548.0 1646.0 552.5 C1647.7 557.0 1648.0 560.5 1648.5 562.5 M1701.0 486.2 C1699.5 483.5 1694.0 477.0 1693.5 472.5 C1693.0 468.0 1694.0 466.5 1698.5 463.8 C1703.0 461.1 1710.7 460.3 1716.0 458.8 C1721.3 457.3 1723.0 456.7 1724.8 456.2 M450.3 772.5 C458.3 774.1 471.5 774.6 490.5 780.7 C509.5 786.8 522.7 796.3 545.5 803.2 C568.3 810.1 581.7 811.9 604.5 815.0 C627.3 818.1 637.6 819.3 659.6 818.9 C681.6 818.5 688.0 818.1 714.7 813.0 C741.4 807.9 754.0 803.5 793.3 793.3 C832.6 783.1 884.6 770.5 911.3 761.9 C938.0 753.3 919.1 758.8 927.0 750.1 C934.9 741.4 942.7 726.5 950.6 718.6 C958.5 710.7 953.0 711.9 966.4 710.7 C979.8 709.5 1003.3 714.7 1017.5 712.7 C1031.7 710.7 1033.3 703.3 1037.2 700.9 M767.7 1111.1 C779.1 1105.0 806.3 1092.4 824.8 1080.4 C843.3 1068.4 848.8 1062.3 860.2 1050.9 C871.6 1039.5 870.0 1039.5 881.8 1023.4 C893.6 1007.3 905.4 986.8 919.2 970.3 C933.0 953.8 936.4 955.0 950.6 940.8 C964.8 926.6 974.3 916.4 990.0 899.5 C1005.7 882.6 1013.6 874.4 1029.3 856.3 C1045.0 838.2 1056.8 826.4 1068.6 809.1 C1080.4 791.8 1084.4 777.6 1088.3 769.7 M881.8 1023.4 C883.0 1025.4 886.5 1024.9 887.7 1033.2 C888.9 1041.5 886.1 1055.3 887.7 1064.7 C889.3 1074.1 892.5 1074.7 895.6 1080.4 C898.7 1086.1 901.8 1090.5 903.4 1093.0 M1074.7 823.7 C1078.0 829.0 1087.9 840.5 1091.4 850.3 C1094.9 860.1 1092.2 868.4 1092.4 872.9 M1086.5 875.8 C1087.7 875.3 1089.6 873.5 1092.4 873.3 C1095.2 873.1 1097.3 873.2 1100.3 874.9 C1103.3 876.6 1105.2 877.8 1107.2 881.7 C1109.2 885.6 1107.9 890.2 1110.1 894.5 C1112.3 898.8 1114.5 901.5 1118.0 903.4 C1121.5 905.3 1121.5 904.6 1127.8 904.0 C1134.1 903.4 1144.0 899.9 1149.5 900.4 C1155.0 900.9 1153.8 903.1 1155.4 906.3 C1157.0 909.5 1161.2 909.9 1157.3 916.2 C1153.4 922.5 1139.6 932.4 1135.7 937.8 C1131.8 943.2 1137.3 942.2 1137.7 943.3 M1000.0 713.6 C1003.9 713.2 1013.0 713.6 1019.7 711.6 C1026.4 709.6 1028.3 707.3 1033.4 703.8 C1038.5 700.3 1042.8 695.9 1045.2 693.9 M1047.2 705.7 C1048.2 706.9 1050.7 708.6 1052.1 711.6 C1053.5 714.6 1053.7 718.7 1054.1 720.5 M1046.2 707.7 C1044.4 714.6 1037.8 735.0 1037.4 742.1 C1037.0 749.2 1042.8 742.9 1044.2 743.1 M1053.1 701.8 C1055.1 703.8 1057.8 706.1 1062.9 711.6 C1068.0 717.1 1073.2 724.0 1078.7 729.3 C1084.2 734.6 1088.1 736.4 1090.5 738.2 M1102.3 690.0 C1097.6 698.3 1087.0 717.5 1078.7 731.3 C1070.4 745.1 1066.9 749.0 1061.0 758.8 C1055.1 768.6 1052.6 770.7 1049.2 780.5 C1045.8 790.3 1042.2 800.5 1044.2 808.0 C1046.2 815.5 1052.9 814.7 1059.0 817.8 C1065.1 820.9 1071.6 822.5 1074.7 823.7 M1086.5 797.2 L1074.7 823.7 M1078.7 772.6 C1080.3 773.0 1085.3 772.8 1086.5 774.6 C1087.7 776.4 1086.2 780.0 1084.6 781.4 C1083.0 782.8 1079.9 781.4 1078.7 781.4 M1040.3 813.9 C1037.0 817.4 1030.5 823.7 1023.6 831.6 C1016.7 839.5 1009.4 848.9 1005.9 853.2 M1244.8 690.0 C1249.1 692.8 1257.6 700.9 1266.5 704.2 C1275.4 707.5 1280.1 702.3 1289.1 706.7 C1298.1 711.1 1307.2 722.5 1311.7 726.4 M1405.0 690.0 C1411.2 696.8 1428.7 716.2 1436.2 724.2 C1443.7 732.2 1434.7 724.3 1442.5 730.0 C1450.3 735.7 1456.7 741.3 1475.0 752.5 C1493.3 763.7 1522.3 778.7 1533.8 786.2 C1545.3 793.7 1537.5 787.6 1532.5 790.0 C1527.5 792.4 1520.3 793.8 1508.8 798.0 C1497.3 802.2 1485.8 806.8 1475.0 811.2 C1464.2 815.6 1461.8 816.7 1455.0 820.0 C1448.2 823.3 1444.2 824.7 1441.2 827.5 C1438.2 830.3 1439.5 831.3 1440.0 833.8 C1440.5 836.3 1443.0 838.8 1443.8 840.0 M1441.2 830.0 C1445.0 830.1 1450.7 830.7 1460.0 830.5 C1469.3 830.3 1481.6 828.4 1487.5 828.8 C1493.4 829.2 1490.0 830.3 1489.5 832.5 C1489.0 834.7 1486.7 835.5 1485.0 840.0 C1483.3 844.5 1483.7 851.0 1481.2 855.0 C1478.7 859.0 1476.5 858.0 1472.5 860.0 C1468.5 862.0 1463.2 862.2 1461.2 865.0 C1459.2 867.8 1459.0 869.0 1462.5 873.8 C1466.0 878.6 1475.1 883.6 1478.8 888.8 C1482.5 894.0 1478.0 895.5 1481.2 900.0 C1484.4 904.5 1492.0 907.4 1495.0 911.2 C1498.0 915.0 1495.0 916.5 1496.2 918.8 C1497.4 921.1 1499.7 919.8 1501.2 922.5 C1502.7 925.2 1501.0 927.5 1503.8 932.5 C1506.6 937.5 1510.0 942.8 1515.0 947.5 C1520.0 952.2 1526.0 953.2 1528.8 956.2 C1531.6 959.2 1529.8 959.2 1528.8 962.5 C1527.8 965.8 1524.3 968.5 1523.8 972.5 C1523.3 976.5 1526.0 976.5 1526.2 982.5 C1526.4 988.5 1526.7 996.6 1525.0 1002.5 C1523.3 1008.4 1519.0 1010.1 1517.5 1012.0 M1443.8 847.5 L1437.5 851.2 M1440.0 842.5 C1438.5 841.5 1436.5 839.0 1432.5 837.5 C1428.5 836.0 1424.5 834.5 1420.0 835.0 C1415.5 835.5 1415.0 836.8 1410.0 840.0 C1405.0 843.2 1402.0 847.7 1395.0 851.2 C1388.0 854.7 1384.5 854.5 1375.0 857.5 C1365.5 860.5 1353.0 864.5 1347.5 866.2 M1375.0 857.5 C1375.0 861.0 1377.2 867.0 1375.0 875.0 C1372.8 883.0 1366.0 891.5 1363.8 897.5 C1361.6 903.5 1364.8 902.3 1363.8 905.0 C1362.8 907.7 1359.8 910.0 1358.8 911.2 M1320.0 862.5 C1321.0 864.5 1321.5 867.5 1325.0 872.5 C1328.5 877.5 1330.0 882.2 1337.5 887.5 C1345.0 892.8 1357.5 896.5 1362.5 898.8 M1427.5 726.2 C1424.0 731.0 1412.0 742.2 1410.0 750.0 C1408.0 757.8 1412.5 759.0 1417.5 765.0 C1422.5 771.0 1429.7 776.1 1435.0 780.0 C1440.3 783.9 1442.0 783.6 1443.8 784.5 M1300.0 715.0 L1311.2 726.2 M1783.8 690.0 L1808.0 696.2 M1027.5 860.0 C1012.5 876.0 974.0 918.0 952.5 940.0 C931.0 962.0 926.5 964.0 920.0 970.0 M1092.5 870.0 C1092.2 875.5 1092.7 884.5 1091.2 897.5 C1089.7 910.5 1088.2 920.5 1085.0 935.0 C1081.8 949.5 1079.0 959.2 1075.0 970.0 C1071.0 980.8 1066.8 981.3 1065.0 988.8 C1063.2 996.3 1063.2 1001.0 1066.2 1007.5 C1069.2 1014.0 1075.0 1020.7 1080.0 1021.2 C1085.0 1021.7 1089.2 1015.7 1091.2 1010.0 C1093.2 1004.3 1089.0 1001.5 1090.0 992.5 C1091.0 983.5 1093.4 972.5 1096.2 965.0 C1099.0 957.5 1100.0 958.4 1103.8 955.0 C1107.6 951.6 1110.3 948.9 1115.0 948.0 C1119.7 947.1 1123.0 948.9 1127.5 950.5 C1132.0 952.1 1135.0 953.3 1137.5 956.2 C1140.0 959.1 1137.0 960.2 1140.0 965.0 C1143.0 969.8 1146.5 976.9 1152.5 980.0 C1158.5 983.1 1160.5 980.6 1170.0 980.5 C1179.5 980.4 1184.5 978.6 1200.0 979.5 C1215.5 980.4 1232.5 987.1 1247.5 985.0 C1262.5 982.9 1268.5 972.0 1275.0 968.8 C1281.5 965.6 1277.5 967.8 1280.0 968.8 C1282.5 969.8 1285.0 970.1 1287.5 973.8 C1290.0 977.5 1291.5 984.8 1292.5 987.5 M1086.2 875.5 C1089.0 875.2 1095.7 872.4 1100.0 873.8 C1104.3 875.2 1105.5 878.3 1107.5 882.5 C1109.5 886.7 1107.5 890.7 1110.0 895.0 C1112.5 899.3 1115.5 902.3 1120.0 903.8 C1124.5 905.3 1127.0 903.3 1132.5 902.5 C1138.0 901.7 1143.0 899.0 1147.5 900.0 C1152.0 901.0 1153.3 903.7 1155.0 907.5 C1156.7 911.3 1159.7 913.3 1156.2 918.8 C1152.7 924.3 1141.7 930.5 1137.5 935.0 C1133.3 939.5 1133.0 939.0 1135.0 941.2 C1137.0 943.4 1144.7 942.4 1147.5 946.2 C1150.3 950.0 1149.1 955.7 1148.8 960.0 C1148.5 964.3 1145.5 963.5 1146.2 967.5 C1146.9 971.5 1151.2 977.5 1152.5 980.0 M1170.0 983.8 C1182.5 984.8 1213.5 986.6 1232.5 988.8 C1251.5 991.0 1256.5 992.3 1265.0 995.0 C1273.5 997.7 1273.0 1001.0 1275.0 1002.5 M1275.0 968.8 C1273.0 972.5 1265.5 981.3 1265.0 987.5 C1264.5 993.7 1269.5 998.3 1272.5 1000.0 C1275.5 1001.7 1278.7 1002.2 1280.0 996.2 C1281.3 990.2 1279.0 975.2 1278.8 970.0 M1292.5 985.0 C1306.8 968.8 1348.8 921.3 1363.8 903.8 C1378.8 886.3 1366.8 898.8 1367.5 897.5 M1292.5 985.0 C1293.0 988.0 1292.5 994.0 1295.0 1000.0 C1297.5 1006.0 1303.5 1010.5 1305.0 1015.0 C1306.5 1019.5 1306.0 1019.0 1302.5 1022.5 C1299.0 1026.0 1288.0 1027.5 1287.5 1032.5 C1287.0 1037.5 1297.3 1041.2 1300.0 1047.5 C1302.7 1053.8 1301.0 1060.5 1301.2 1063.8 M1290.0 1020.0 C1287.5 1021.0 1287.7 1017.2 1277.5 1025.0 C1267.3 1032.8 1242.8 1052.0 1238.8 1058.8 C1234.8 1065.6 1251.3 1062.1 1257.5 1058.8 C1263.7 1055.5 1267.0 1047.8 1270.0 1042.5 C1273.0 1037.2 1270.5 1036.0 1272.5 1032.5 C1274.5 1029.0 1278.5 1026.5 1280.0 1025.0 M1275.0 1055.0 C1276.0 1055.8 1277.0 1056.9 1280.0 1058.8 C1283.0 1060.7 1285.8 1063.4 1290.0 1064.5 C1294.2 1065.6 1290.2 1065.9 1301.2 1064.5 C1312.2 1063.1 1329.7 1060.2 1345.0 1057.5 C1360.3 1054.8 1368.0 1055.2 1377.5 1051.2 C1387.0 1047.2 1388.8 1040.3 1392.5 1037.5 C1396.2 1034.7 1389.1 1031.3 1396.2 1037.0 C1403.3 1042.7 1421.6 1060.4 1428.0 1066.2 M1525.5 992.8 C1525.4 994.2 1530.3 992.5 1524.9 999.9 C1519.5 1007.3 1503.1 1020.1 1498.4 1029.8 C1493.7 1039.5 1498.9 1041.6 1501.2 1048.4 C1503.5 1055.2 1509.2 1058.6 1509.8 1064.0 C1510.4 1069.4 1507.8 1072.5 1504.1 1075.4 C1500.4 1078.3 1495.5 1076.0 1491.2 1078.3 C1486.9 1080.6 1486.7 1084.3 1482.7 1086.9 C1478.7 1089.5 1476.4 1090.0 1471.3 1091.1 C1466.2 1092.2 1471.3 1102.6 1457.0 1092.6 C1442.7 1082.6 1411.4 1051.5 1400.0 1041.2 M1613.9 1106.0 C1620.2 1103.3 1636.1 1094.3 1645.2 1092.6 C1654.3 1090.9 1653.8 1097.7 1659.5 1097.4 C1665.2 1097.1 1666.9 1091.0 1673.7 1091.1 C1680.5 1091.2 1686.8 1097.1 1693.7 1097.7 C1700.6 1098.3 1702.3 1098.2 1708.0 1094.0 C1713.7 1089.8 1711.9 1090.0 1722.2 1076.9 C1732.5 1063.8 1747.9 1045.5 1759.3 1028.4 C1770.7 1011.3 1771.3 1003.3 1779.3 991.3 C1787.3 979.3 1791.5 978.8 1799.2 968.5 C1806.9 958.2 1810.1 952.2 1817.7 940.0 C1825.3 927.8 1829.4 922.6 1837.2 907.4 C1845.0 892.2 1852.9 879.0 1856.8 864.1 C1860.7 849.2 1856.5 839.5 1856.8 832.7 C1857.1 825.9 1858.2 830.5 1858.5 830.0 M1798.0 696.0 C1802.4 698.7 1804.5 699.3 1820.1 709.3 C1835.7 719.3 1860.7 736.5 1876.2 746.2 C1891.7 755.9 1893.3 755.6 1897.6 758.0 M1818.6 709.3 C1816.2 711.7 1812.1 715.2 1806.8 721.1 C1801.5 727.0 1800.4 731.4 1792.1 738.8 C1783.8 746.2 1776.4 751.2 1765.5 758.0 C1754.6 764.8 1749.0 768.3 1737.5 772.7 C1726.0 777.1 1718.8 780.5 1708.0 780.1 C1697.2 779.7 1688.6 772.4 1683.7 770.5 M1817.2 710.8 L1820.1 718.2 M1808.3 721.1 L1811.3 726.3 M1897.6 758.0 C1895.4 758.9 1888.7 760.6 1886.5 762.4 C1884.3 764.2 1888.6 765.3 1886.5 766.8 C1884.4 768.3 1878.6 768.5 1876.2 769.8 C1873.8 771.1 1875.0 772.8 1874.7 773.5 M1897.6 774.2 C1895.4 776.9 1891.7 781.0 1886.5 787.5 C1881.3 794.0 1877.3 798.2 1871.7 806.7 C1866.1 815.2 1861.1 825.3 1858.5 830.0 M1893.9 749.1 L1897.6 746.2 M1851.8 770.5 C1856.7 771.1 1868.4 772.2 1876.2 773.5 C1884.0 774.8 1888.0 776.5 1890.9 777.2 M1848.9 775.0 L1886.5 781.6 M1845.9 779.4 L1878.4 788.2 M1851.8 770.5 L1845.9 779.4 M1859.2 771.7 L1854.0 781.6 M1866.6 772.7 L1862.2 783.8 M1876.2 773.5 L1870.3 786.0 M1890.9 777.2 L1878.4 788.2 M1877.6 768.3 L1889.4 769.8 M1094.0 640.0 C1090.2 645.2 1083.2 656.6 1075.0 666.0 C1066.8 675.4 1058.8 681.7 1053.0 687.2 C1047.2 692.7 1050.1 690.0 1046.0 693.5 C1041.9 697.0 1037.8 700.7 1032.6 704.5 C1027.4 708.3 1022.5 710.8 1020.0 712.4 M1053.0 687.2 C1055.2 688.1 1058.3 689.5 1064.0 691.9 C1069.7 694.3 1075.1 696.3 1081.4 699.0 C1087.7 701.7 1092.7 704.0 1095.5 705.3 M1090.8 693.5 L1098.7 698.2 M1039.7 698.2 C1041.1 699.8 1044.0 702.9 1046.7 706.1 C1049.4 709.3 1051.4 710.9 1053.0 714.0 C1054.6 717.1 1054.3 720.2 1054.6 721.8 M1046.7 706.1 C1045.8 708.6 1044.0 711.7 1042.0 718.7 C1040.0 725.7 1037.6 736.5 1036.5 741.0 M470.8 359.3 C473.6 360.6 479.2 363.7 485.0 366.0 C490.8 368.3 497.0 370.0 500.0 371.0" fill="none" stroke="#ffea8a" stroke-width="2.8" stroke-linejoin="round" stroke-linecap="round"/>
<path d="M530.0 177.5 C529.2 178.8 525.5 180.5 526.0 184.0 C526.5 187.5 530.9 190.4 532.5 195.0 C534.1 199.6 528.0 203.8 534.0 207.0 C540.0 210.2 553.3 208.4 562.5 211.0 C571.7 213.6 576.3 217.2 580.0 220.0 C583.7 222.8 577.0 222.2 581.0 225.0 C585.0 227.8 594.2 231.8 600.0 234.0 C605.8 236.2 607.5 234.8 610.0 236.0 C612.5 237.2 609.5 240.0 612.5 240.0 C615.5 240.0 622.0 236.0 625.0 236.0 C628.0 236.0 626.7 237.2 627.5 240.0 C628.3 242.8 627.0 246.2 629.0 250.0 C631.0 253.8 633.3 256.4 637.5 259.0 C641.7 261.6 643.7 262.6 650.0 263.0 C656.3 263.4 666.0 262.6 669.0 261.0 C672.0 259.4 667.0 257.0 665.0 255.0 C663.0 253.0 659.6 252.5 659.0 251.0 C658.4 249.5 662.0 248.9 662.0 247.5 C662.0 246.1 656.9 246.3 659.0 244.0 C661.1 241.7 667.3 238.0 672.5 236.0 C677.7 234.0 674.5 234.6 685.0 234.0 C695.5 233.4 708.0 232.0 725.0 233.0 C742.0 234.0 759.5 237.0 770.0 239.0 C780.5 241.0 773.5 241.8 777.5 243.0 C781.5 244.2 786.5 245.7 790.0 245.0 C793.5 244.3 793.5 239.5 795.0 239.5 C796.5 239.5 792.5 242.1 797.5 245.0 C802.5 247.9 809.5 252.0 820.0 254.0 C830.5 256.0 841.8 256.2 850.0 255.0 C858.2 253.8 857.5 248.1 861.0 248.0 C864.5 247.9 858.2 252.6 867.5 254.5 C876.8 256.4 898.0 255.6 907.5 257.5 C917.0 259.4 908.0 260.7 915.0 264.0 C922.0 267.3 936.7 271.4 942.5 274.0 C948.3 276.6 945.5 275.3 944.0 277.0 C942.5 278.7 935.8 280.4 935.0 282.5 C934.2 284.6 937.5 286.0 940.0 287.5 C942.5 289.0 945.5 288.5 947.5 290.0 C949.5 291.5 948.0 293.2 950.0 295.0 C952.0 296.8 955.0 297.0 957.5 299.0 C960.0 301.0 960.8 304.0 962.5 305.0 C964.2 306.0 965.0 305.8 966.0 304.0 C967.0 302.2 965.7 297.8 967.5 296.0 C969.3 294.2 969.5 294.4 975.0 295.0 C980.5 295.6 988.4 299.2 995.0 299.0 C1001.6 298.8 1005.4 295.8 1008.0 294.0 C1010.6 292.2 1006.5 290.9 1008.0 290.0 C1009.5 289.1 1012.5 287.7 1015.5 289.5 C1018.5 291.3 1019.0 298.3 1023.0 299.0 C1027.0 299.7 1030.5 293.3 1035.5 293.0 C1040.5 292.7 1042.0 293.1 1048.0 297.5 C1054.0 301.9 1060.5 311.5 1065.5 315.0 C1070.5 318.5 1070.0 313.2 1073.0 315.0 C1076.0 316.8 1077.7 322.2 1080.5 324.0 C1083.3 325.8 1084.7 321.6 1087.0 324.0 C1089.3 326.4 1084.8 333.0 1092.0 336.0 C1099.2 339.0 1116.0 335.7 1123.0 339.0 C1130.0 342.3 1123.5 348.2 1127.0 352.5 C1130.5 356.8 1135.8 359.9 1140.5 360.5 C1145.2 361.1 1147.0 359.4 1150.5 355.5 C1154.0 351.6 1155.0 344.3 1158.0 341.0 C1161.0 337.7 1163.5 337.7 1165.5 339.0 C1167.5 340.3 1169.0 340.8 1168.0 347.5 C1167.0 354.2 1162.3 365.0 1160.5 372.5 C1158.7 380.0 1162.0 379.0 1159.0 385.0 C1156.0 391.0 1147.7 397.5 1145.5 402.5 C1143.3 407.5 1143.5 406.5 1148.0 410.0 C1152.5 413.5 1162.0 418.0 1168.0 420.0 C1174.0 422.0 1172.5 423.5 1178.0 420.0 C1183.5 416.5 1192.5 408.5 1195.5 402.5 C1198.5 396.5 1192.8 394.5 1193.0 390.0 C1193.2 385.5 1195.7 384.5 1196.7 380.0 C1197.7 375.5 1196.0 372.5 1198.0 367.5 C1200.0 362.5 1205.0 357.5 1206.7 355.0 M500.0 371.0 C505.0 372.6 513.5 377.3 525.0 379.0 C536.5 380.7 547.5 378.5 557.5 379.5 C567.5 380.5 563.0 377.7 575.0 384.0 C587.0 390.3 606.0 404.4 617.5 411.0 C629.0 417.6 625.5 415.2 632.5 417.0 C639.5 418.8 637.0 411.2 652.5 420.0 C668.0 428.8 698.5 452.8 710.0 461.0 M997.5 336.0 C999.6 336.3 1002.9 336.7 1008.0 337.5 C1013.1 338.3 1017.8 338.3 1023.0 340.0 C1028.2 341.7 1031.5 342.0 1034.0 346.0 C1036.5 350.0 1033.2 355.2 1035.5 360.0 C1037.8 364.8 1043.0 363.5 1045.5 370.0 C1048.0 376.5 1048.3 381.0 1048.0 392.5 C1047.7 404.0 1042.0 413.6 1044.0 427.5 C1046.0 441.4 1055.2 455.1 1058.0 462.0 M1206.7 355.0 C1208.5 355.5 1210.2 356.5 1215.5 357.5 C1220.8 358.5 1226.5 360.5 1233.0 360.0 C1239.5 359.5 1243.3 357.3 1248.0 355.0 C1252.7 352.7 1255.5 351.0 1256.7 348.7 C1257.9 346.4 1256.5 345.4 1254.0 343.7 C1251.5 342.0 1246.7 343.7 1244.0 340.0 C1241.3 336.3 1240.0 329.3 1240.5 325.0 C1241.0 320.7 1247.2 320.7 1246.7 318.7 C1246.2 316.7 1241.5 317.2 1238.0 315.0 C1234.5 312.8 1228.5 310.3 1229.0 307.5 C1229.5 304.7 1238.0 303.3 1240.5 301.0 C1243.0 298.7 1240.0 298.2 1241.7 296.0 C1243.4 293.8 1247.5 291.2 1249.0 290.0 M1206.7 355.0 C1203.0 358.0 1192.7 365.0 1188.0 370.0 C1183.3 375.0 1184.5 375.5 1183.0 380.0 C1181.5 384.5 1182.5 384.5 1180.5 392.5 C1178.5 400.5 1176.3 412.0 1173.0 420.0 C1169.7 428.0 1165.8 424.1 1164.0 432.5 C1162.2 440.9 1164.0 456.1 1164.0 462.0 M1206.7 355.0 C1207.0 359.0 1206.2 370.0 1208.0 375.0 C1209.8 380.0 1208.0 379.0 1215.5 380.0 C1223.0 381.0 1239.5 380.0 1245.5 380.0 M1233.0 360.0 C1231.0 362.5 1224.0 369.0 1223.0 372.5 C1222.0 376.0 1223.5 376.0 1228.0 377.5 C1232.5 379.0 1242.0 379.5 1245.5 380.0 M1215.5 380.0 C1219.5 380.7 1228.3 380.7 1235.5 383.7 C1242.7 386.7 1247.5 390.0 1251.7 395.0 C1255.9 400.0 1257.4 403.0 1256.7 408.7 C1256.0 414.4 1247.7 418.9 1248.0 423.7 C1248.3 428.5 1253.5 430.0 1258.0 432.5 C1262.5 435.0 1267.0 436.5 1270.5 436.0 C1274.0 435.5 1274.0 434.7 1275.5 430.0 C1277.0 425.3 1278.0 417.5 1278.0 412.5 C1278.0 407.5 1274.0 408.0 1275.5 405.0 C1277.0 402.0 1280.0 401.0 1285.5 397.5 C1291.0 394.0 1299.0 391.0 1303.0 387.5 C1307.0 384.0 1305.8 382.8 1305.5 380.0 C1305.2 377.2 1300.5 374.5 1301.7 373.7 C1302.9 372.9 1307.4 375.5 1311.7 376.0 C1316.0 376.5 1320.0 377.2 1323.0 376.0 C1326.0 374.8 1325.0 371.2 1326.7 370.0 C1328.4 368.8 1328.9 371.3 1331.7 370.0 C1334.5 368.7 1335.2 365.7 1340.5 363.7 C1345.8 361.7 1353.3 362.0 1358.0 360.0 C1362.7 358.0 1362.8 355.0 1364.0 353.7 M1333.0 322.0 C1331.5 321.8 1328.0 318.9 1325.5 321.0 C1323.0 323.1 1322.8 328.7 1320.5 332.5 C1318.2 336.3 1315.5 336.0 1314.0 340.0 C1312.5 344.0 1312.7 348.5 1313.0 352.5 C1313.3 356.5 1316.5 355.8 1315.5 360.0 C1314.5 364.2 1309.5 371.0 1308.0 373.7 M1364.0 353.7 C1363.0 352.0 1360.7 350.2 1359.0 345.0 C1357.3 339.8 1355.2 333.0 1355.5 327.5 C1355.8 322.0 1358.0 320.8 1360.5 317.5 C1363.0 314.2 1358.5 311.9 1368.0 311.0 C1377.5 310.1 1393.0 313.8 1408.0 313.0 C1423.0 312.2 1426.5 307.7 1443.0 307.0 C1459.5 306.3 1478.0 307.7 1490.5 309.5 C1503.0 311.3 1500.4 312.7 1505.5 316.0 C1510.6 319.3 1513.9 324.0 1516.0 326.0 M1364.0 353.7 C1366.3 355.7 1372.7 360.4 1375.5 363.7 C1378.3 367.0 1374.5 365.7 1378.0 370.0 C1381.5 374.3 1389.8 380.8 1393.0 385.0 C1396.2 389.2 1395.0 389.0 1394.0 391.0 C1393.0 393.0 1388.5 392.7 1388.0 395.0 C1387.5 397.3 1390.5 402.3 1391.7 402.5 C1392.9 402.7 1391.7 397.5 1394.0 396.0 C1396.3 394.5 1400.2 398.2 1403.0 395.0 C1405.8 391.8 1407.8 384.3 1408.0 380.0 C1408.2 375.7 1402.0 374.0 1404.0 373.7 C1406.0 373.4 1414.0 379.2 1418.0 378.7 C1422.0 378.2 1417.3 373.5 1424.0 371.0 C1430.7 368.5 1444.7 366.3 1451.7 366.0 C1458.7 365.7 1456.0 369.7 1459.0 369.5 C1462.0 369.3 1460.9 364.7 1466.7 365.0 C1472.5 365.3 1483.2 369.0 1488.0 371.0 C1492.8 373.0 1484.9 375.7 1490.5 375.0 C1496.1 374.3 1510.9 369.0 1516.0 367.5 M1305.0 377.0 C1305.6 377.6 1305.4 374.9 1308.0 380.0 C1310.6 385.1 1314.5 396.8 1318.0 402.5 C1321.5 408.2 1325.0 403.2 1325.5 408.7 C1326.0 414.2 1322.5 423.2 1320.5 430.0 C1318.5 436.8 1316.3 437.5 1315.5 442.5 C1314.7 447.5 1316.5 452.5 1316.7 455.0 M1536.5 178.2 C1544.6 180.1 1568.8 184.6 1577.0 187.5 C1585.2 190.4 1578.0 190.2 1577.5 192.5 C1577.0 194.8 1572.1 195.5 1574.5 198.8 C1576.9 202.1 1584.0 206.2 1589.5 208.8 C1595.0 211.4 1596.7 210.5 1602.0 212.0 C1607.3 213.5 1612.6 214.1 1615.8 216.2 C1619.0 218.3 1616.7 220.5 1618.2 222.5 C1619.7 224.5 1622.2 224.7 1623.2 226.2 C1624.2 227.7 1623.8 228.3 1623.2 230.0 C1622.6 231.7 1618.2 232.9 1620.0 234.5 C1621.8 236.1 1624.6 236.9 1632.0 238.0 C1639.4 239.1 1650.5 239.0 1657.0 240.0 C1663.5 241.0 1662.7 241.5 1664.5 243.0 C1666.3 244.5 1663.8 245.9 1665.8 247.5 C1667.8 249.1 1671.3 248.9 1674.5 251.2 C1677.7 253.5 1675.5 256.9 1682.0 258.8 C1688.5 260.7 1701.2 259.3 1707.0 260.5 C1712.8 261.7 1710.0 261.9 1710.8 265.0 C1711.6 268.1 1712.1 271.7 1710.8 276.2 C1709.5 280.7 1705.5 283.7 1704.5 287.5 C1703.5 291.3 1706.8 291.7 1705.8 295.0 C1704.8 298.3 1704.0 302.0 1699.5 303.8 C1695.0 305.6 1686.8 302.6 1683.2 303.8 C1679.6 305.0 1679.7 307.5 1681.5 310.0 C1683.3 312.5 1687.4 314.6 1692.0 316.2 C1696.6 317.8 1698.5 316.2 1704.5 318.0 C1710.5 319.8 1716.0 323.1 1722.0 325.0 C1728.0 326.9 1732.0 326.3 1734.5 327.5 C1737.0 328.7 1732.5 330.3 1734.5 331.2 C1736.5 332.1 1743.0 331.0 1744.5 332.0 C1746.0 333.0 1746.5 334.6 1742.0 336.2 C1737.5 337.8 1732.0 338.2 1722.0 340.0 C1712.0 341.8 1701.0 344.2 1692.0 345.0 C1683.0 345.8 1684.0 342.6 1677.0 343.8 C1670.0 345.0 1666.0 348.5 1657.0 351.2 C1648.0 353.9 1639.5 355.3 1632.0 357.5 C1624.5 359.7 1623.5 361.3 1619.5 362.0 C1615.5 362.7 1614.3 363.1 1612.0 361.2 C1609.7 359.3 1609.7 355.1 1608.2 352.5 C1606.7 349.9 1607.7 349.0 1604.5 348.0 C1601.3 347.0 1595.3 349.1 1592.0 347.5 C1588.7 345.9 1591.2 342.5 1588.2 340.0 C1585.2 337.5 1581.0 337.6 1577.0 335.0 C1573.0 332.4 1571.2 329.0 1568.2 327.0 C1565.2 325.0 1569.7 324.9 1562.0 325.0 C1554.3 325.1 1538.7 327.3 1529.5 327.5 C1520.3 327.7 1519.8 327.9 1515.8 326.2 C1511.8 324.5 1514.5 322.0 1509.5 318.8 C1504.5 315.6 1498.3 312.0 1490.8 310.0 C1483.3 308.0 1475.8 309.0 1472.0 308.8 M1619.5 362.0 C1618.0 361.8 1617.5 361.7 1612.0 361.2 C1606.5 360.7 1600.0 360.7 1592.0 359.5 C1584.0 358.3 1582.5 356.1 1572.0 355.0 C1561.5 353.9 1547.5 354.3 1539.5 353.8 C1531.5 353.3 1534.6 354.0 1532.0 352.5 C1529.4 351.0 1528.5 346.5 1526.5 346.2 C1524.5 345.9 1523.1 348.4 1522.0 351.2 C1520.9 354.0 1520.6 357.0 1520.8 360.0 C1521.0 363.0 1525.5 364.4 1523.2 366.2 C1520.9 368.0 1516.0 367.0 1509.5 368.8 C1503.0 370.6 1495.1 374.5 1490.8 375.0 C1486.5 375.5 1488.7 372.0 1488.2 371.2 M1900.0 427.5 L1900.0 430.0 M1852.0 451.2 L1898.2 443.2 M708.8 462.0 C711.5 463.5 713.3 466.9 722.5 469.5 C731.7 472.1 746.0 472.5 755.0 475.0 C764.0 477.5 760.5 477.6 767.5 482.0 C774.5 486.4 781.0 492.2 790.0 497.0 C799.0 501.8 794.0 500.6 812.5 505.8 C831.0 511.0 863.4 517.4 882.5 523.2 C901.6 529.0 902.9 532.6 908.0 535.0 M908.0 535.0 C914.5 538.0 928.0 542.0 940.5 550.0 C953.0 558.0 959.0 566.2 970.5 575.0 C982.0 583.8 992.5 590.0 998.0 593.8 M998.0 593.8 C999.2 596.0 1003.4 598.3 1004.2 605.0 C1005.0 611.7 1001.8 618.5 1001.8 627.5 C1001.8 636.5 1001.5 642.0 1004.2 650.0 C1006.9 658.0 1008.7 660.0 1015.5 667.5 C1022.3 675.0 1029.5 680.0 1038.0 687.5 C1046.5 695.0 1050.0 696.0 1058.0 705.0 C1066.0 714.0 1071.8 725.7 1078.0 732.5 C1084.2 739.3 1087.0 737.5 1089.2 738.8 M998.0 595.0 C1002.0 594.8 1007.2 594.8 1018.0 593.8 C1028.8 592.8 1039.3 592.0 1051.8 590.0 C1064.3 588.0 1073.3 585.0 1080.5 583.8 C1087.7 582.6 1084.5 583.1 1088.0 583.8 C1091.5 584.5 1096.0 586.8 1098.0 587.5 M1051.8 590.0 C1055.0 591.5 1060.8 593.5 1068.0 597.5 C1075.2 601.5 1080.0 605.0 1088.0 610.0 C1096.0 615.0 1104.0 620.0 1108.0 622.5 M1051.8 590.0 C1050.0 586.0 1046.8 578.5 1043.0 570.0 C1039.2 561.5 1035.5 556.5 1033.0 547.5 C1030.5 538.5 1029.5 533.0 1030.5 525.0 C1031.5 517.0 1033.5 515.0 1038.0 507.5 C1042.5 500.0 1047.0 493.5 1053.0 487.5 C1059.0 481.5 1065.0 479.5 1068.0 477.5 M1030.5 530.0 C1029.5 535.0 1028.0 542.5 1025.5 555.0 C1023.0 567.5 1019.5 585.0 1018.0 592.5 M1008.0 537.5 L1025.5 540.0 M1051.8 590.0 C1053.0 587.5 1055.5 582.0 1058.0 577.5 C1060.5 573.0 1063.0 569.5 1064.2 567.5 M1044.2 430.0 C1046.0 434.0 1048.2 440.5 1053.0 450.0 C1057.8 459.5 1062.0 468.7 1068.0 477.5 C1074.0 486.3 1078.0 487.3 1083.0 493.8 C1088.0 500.3 1088.5 506.0 1093.0 510.0 C1097.5 514.0 1100.5 513.6 1105.5 513.8 C1110.5 514.0 1114.0 510.5 1118.0 511.2 C1122.0 511.9 1124.0 516.2 1125.5 517.5 M1110.5 511.2 C1112.0 508.0 1112.5 500.7 1118.0 495.0 C1123.5 489.3 1128.5 487.5 1138.0 482.5 C1147.5 477.5 1152.5 474.5 1165.5 470.0 C1178.5 465.5 1193.0 461.5 1203.0 460.0 C1213.0 458.5 1211.0 459.5 1215.5 462.5 C1220.0 465.5 1222.0 471.5 1225.5 475.0 C1229.0 478.5 1231.5 479.0 1233.0 480.0 M1165.5 470.0 C1165.2 465.0 1164.2 453.0 1164.2 445.0 C1164.2 437.0 1165.2 433.0 1165.5 430.0 M1253.0 452.5 L1260.5 477.5 M1254.2 430.0 C1256.0 431.0 1258.7 434.2 1263.0 435.0 C1267.3 435.8 1273.0 434.0 1275.5 433.8 M1318.0 430.0 C1317.2 432.5 1314.2 437.5 1314.2 442.5 C1314.2 447.5 1315.2 450.0 1318.0 455.0 C1320.8 460.0 1321.0 462.5 1328.0 467.5 C1335.0 472.5 1345.8 475.5 1353.0 480.0 C1360.2 484.5 1363.2 482.5 1364.2 490.0 C1365.2 497.5 1363.7 510.5 1358.0 517.5 C1352.3 524.5 1341.0 521.5 1335.5 525.0 C1330.0 528.5 1332.5 529.0 1330.5 535.0 C1328.5 541.0 1328.0 548.8 1325.5 555.0 C1323.0 561.2 1316.5 562.7 1318.0 566.2 C1319.5 569.7 1322.0 571.7 1333.0 572.5 C1344.0 573.3 1363.8 569.3 1373.0 570.0 C1382.2 570.7 1378.2 573.2 1379.2 576.2 C1380.2 579.2 1382.2 580.2 1378.0 585.0 C1373.8 589.8 1362.8 595.0 1358.0 600.0 C1353.2 605.0 1351.7 601.5 1354.2 610.0 C1356.7 618.5 1362.2 629.0 1370.5 642.5 C1378.8 656.0 1386.4 666.2 1395.5 677.5 C1404.6 688.8 1411.9 694.5 1416.0 698.8 M1318.0 453.8 C1331.0 452.5 1363.4 450.5 1383.0 447.5 C1402.6 444.5 1409.4 440.5 1416.0 438.8 M1383.0 448.8 C1382.2 451.0 1378.7 455.5 1379.2 460.0 C1379.7 464.5 1384.2 469.0 1385.5 471.2 M1088.3 769.7 C1090.7 758.9 1096.7 729.9 1100.3 715.6 C1103.9 701.3 1102.1 705.8 1106.5 698.2 C1110.9 690.6 1114.4 686.8 1122.3 677.8 C1130.2 668.8 1136.8 661.0 1145.9 653.4 C1155.0 645.8 1161.0 644.7 1167.9 640.0 C1174.8 635.3 1172.5 635.0 1180.5 630.0 C1188.5 625.0 1197.0 621.0 1208.0 615.0 C1219.0 609.0 1223.0 605.0 1235.5 600.0 C1248.0 595.0 1257.8 593.5 1270.5 590.0 C1283.2 586.5 1286.7 584.6 1299.2 582.5 C1311.7 580.4 1317.2 580.5 1333.0 579.5 C1348.8 578.5 1361.4 577.2 1378.0 577.5 C1394.6 577.8 1408.4 580.5 1416.0 581.2 M1061.0 758.8 C1063.2 755.2 1067.0 749.0 1071.9 741.0 C1076.8 733.0 1080.6 725.8 1085.3 718.7 C1090.0 711.6 1092.8 709.4 1095.5 705.3 C1098.2 701.2 1094.9 703.7 1098.7 698.2 C1102.5 692.7 1106.5 686.3 1114.4 677.8 C1122.3 669.3 1128.9 663.3 1138.0 655.7 C1147.1 648.1 1151.0 644.4 1160.0 640.0 C1169.0 635.6 1174.4 636.3 1183.0 633.8 C1191.6 631.3 1197.8 629.8 1203.0 627.5 C1208.2 625.2 1208.4 624.5 1209.2 622.5 C1210.0 620.5 1207.3 618.5 1206.8 617.5 M1180.5 631.2 C1182.0 633.5 1182.5 634.7 1188.0 642.5 C1193.5 650.3 1197.5 661.5 1208.0 670.0 C1218.5 678.5 1229.5 678.0 1240.5 685.0 C1251.5 692.0 1253.5 700.8 1263.0 705.0 C1272.5 709.2 1278.5 702.0 1288.0 706.2 C1297.5 710.4 1306.0 722.2 1310.5 726.2 M1044.2 707.5 C1043.0 714.5 1038.0 735.5 1038.0 742.5 C1038.0 749.5 1043.0 742.5 1044.2 742.5 M1048.0 705.0 L1053.0 721.2 M1710.0 460.1 C1712.4 459.4 1719.0 459.1 1721.9 456.8 C1724.8 454.5 1723.3 450.4 1724.6 448.8 C1725.9 447.2 1726.2 447.7 1728.6 448.8 C1731.0 449.9 1732.3 453.1 1736.5 454.4 C1740.7 455.7 1744.9 455.4 1749.8 455.4 C1754.7 455.4 1755.4 455.3 1761.1 454.4 C1766.8 453.5 1773.2 451.7 1778.4 450.8 C1783.6 449.9 1784.8 451.8 1787.0 450.1 C1789.2 448.4 1789.1 445.1 1789.6 442.2 C1790.1 439.3 1790.3 438.0 1789.6 435.5 C1788.9 433.0 1787.0 430.8 1786.3 429.6 M1787.0 450.1 C1790.2 450.9 1796.3 451.2 1802.9 454.1 C1809.5 457.0 1812.0 460.2 1820.2 464.7 C1828.4 469.2 1836.9 473.2 1844.1 476.7 C1851.3 480.2 1854.9 478.8 1856.0 482.0 C1857.1 485.2 1856.3 492.5 1849.4 492.6 C1842.5 492.7 1827.1 484.7 1821.5 482.7 M1856.0 482.0 C1860.3 482.3 1868.8 486.6 1877.3 483.3 C1885.8 480.0 1894.3 469.0 1898.5 465.4 M1856.0 482.0 C1857.9 480.9 1862.4 478.4 1865.3 476.7 C1868.2 475.0 1869.5 474.1 1870.6 473.4 M1856.0 482.0 C1857.3 483.6 1855.3 485.8 1862.7 490.0 C1870.1 494.2 1885.8 498.2 1893.2 503.2 C1900.6 508.2 1898.2 511.7 1899.8 515.2 C1901.4 518.7 1901.7 517.8 1901.2 520.5 C1900.7 523.2 1898.3 524.8 1897.2 528.5 C1896.1 532.2 1895.3 534.6 1895.8 539.1 C1896.3 543.6 1898.7 543.6 1899.8 551.0 C1900.9 558.4 1900.9 571.0 1901.2 576.0 M1850.7 450.8 C1852.3 451.1 1854.2 452.8 1858.7 452.1 C1863.2 451.4 1865.3 449.2 1873.3 447.5 C1881.3 445.8 1893.5 444.3 1898.5 443.5 M1821.5 495.9 C1823.1 498.4 1826.6 503.3 1829.5 508.5 C1832.4 513.7 1834.5 516.5 1836.1 521.8 C1837.7 527.1 1836.5 531.1 1837.4 535.1 C1838.3 539.1 1837.1 538.8 1840.8 541.7 C1844.5 544.6 1851.6 546.2 1856.0 549.7 C1860.4 553.2 1861.9 553.7 1862.7 559.0 C1863.5 564.3 1860.5 572.6 1860.0 576.0 M1899.8 426.9 L1899.8 430.2 M1650.0 647.4 C1663.0 651.1 1685.2 656.3 1714.9 666.0 C1744.6 675.7 1781.8 690.0 1798.5 696.0 M1650.0 563.8 C1651.9 564.8 1655.5 565.8 1659.7 568.7 C1663.9 571.6 1663.3 572.6 1671.1 578.4 C1678.9 584.2 1691.6 593.0 1698.7 597.9 C1705.8 602.8 1702.9 601.4 1706.8 602.7 C1710.7 604.0 1713.2 601.5 1718.1 604.4 C1723.0 607.3 1727.5 614.5 1731.1 617.3 C1734.7 620.1 1734.0 618.5 1736.0 618.2 C1738.0 617.9 1737.3 614.6 1740.9 615.7 C1744.5 616.8 1747.6 620.2 1753.8 623.8 C1760.0 627.4 1764.2 628.1 1771.7 633.6 C1779.2 639.1 1786.3 647.2 1791.2 651.4 C1796.1 655.6 1791.8 653.6 1796.0 654.7 C1800.2 655.8 1806.7 655.8 1812.2 657.1 C1817.7 658.4 1819.4 660.7 1823.6 661.2 C1827.8 661.7 1829.4 661.5 1833.3 659.5 C1837.2 657.5 1838.2 655.6 1843.1 651.4 C1848.0 647.2 1850.9 646.2 1857.7 638.4 C1864.5 630.6 1870.6 620.9 1877.1 612.5 C1883.6 604.1 1886.5 601.5 1890.1 596.3 C1893.7 591.1 1893.7 590.1 1895.0 586.5 C1896.3 582.9 1895.6 582.3 1896.6 578.4 C1897.6 574.5 1899.4 573.9 1899.9 567.1 C1900.4 560.3 1899.7 551.8 1899.0 544.3 C1898.3 536.8 1896.4 534.6 1896.6 529.7 C1896.8 524.8 1899.2 521.9 1899.9 520.0 M1714.9 577.6 C1716.2 579.7 1719.5 584.0 1721.4 588.1 C1723.3 592.2 1724.1 595.0 1724.6 597.9 C1725.1 600.8 1724.0 601.7 1723.8 602.7 M1820.4 544.3 C1820.1 549.2 1820.0 557.0 1818.7 568.7 C1817.4 580.4 1815.2 589.7 1813.9 602.7 C1812.6 615.7 1812.9 623.2 1812.2 633.6 C1811.5 644.0 1810.9 650.5 1810.6 654.7 M1812.2 633.6 C1814.2 634.6 1815.5 634.8 1822.0 638.4 C1828.5 642.0 1839.5 647.5 1844.7 651.4 C1849.9 655.3 1845.0 649.8 1847.9 657.9 C1850.8 666.0 1856.7 684.5 1859.3 692.0 C1861.9 699.5 1860.6 694.6 1860.9 695.2 M1819.5 556.5 C1825.7 557.5 1843.9 559.3 1850.4 561.4 C1856.9 563.5 1851.8 565.3 1852.0 567.1 C1852.2 568.9 1851.4 569.7 1851.2 570.3 M1818.7 567.1 C1827.1 568.4 1845.3 571.2 1860.9 573.5 C1876.5 575.8 1889.5 577.4 1896.6 578.4 M1835.0 520.0 C1835.8 524.2 1835.1 535.3 1839.0 541.1 C1842.9 546.9 1849.9 546.0 1854.4 549.2 C1858.9 552.4 1860.1 554.1 1861.7 557.3 C1863.3 560.5 1863.6 560.5 1862.5 565.4 C1861.4 570.3 1859.6 575.5 1856.0 581.7 C1852.4 587.9 1848.3 589.8 1844.7 596.3 C1841.1 602.8 1842.1 608.9 1838.2 614.1 C1834.3 619.3 1828.4 619.3 1825.2 622.2 C1822.0 625.1 1822.5 625.5 1822.0 628.7 C1821.5 631.9 1822.6 636.5 1822.8 638.4 M1811.4 640.1 C1809.5 641.2 1802.8 643.1 1801.7 645.7 C1800.6 648.3 1804.0 651.0 1805.8 653.0 C1807.6 655.0 1809.6 655.0 1810.6 655.5 M1824.4 657.9 L1818.7 685.5 M1798.5 696.0 C1801.2 696.5 1806.2 697.8 1812.2 698.5 C1818.2 699.2 1815.8 700.3 1828.5 699.3 C1841.2 698.3 1865.4 693.4 1875.5 693.6 C1885.6 693.8 1875.9 697.8 1878.8 700.1 C1881.7 702.4 1887.8 704.0 1890.1 705.0 M1857.7 679.8 C1861.9 679.6 1874.3 679.8 1878.8 679.0 C1883.3 678.2 1880.1 676.4 1880.4 675.8 M1860.9 690.4 L1865.8 690.4 M1825.2 711.4 C1823.3 711.1 1819.4 708.2 1815.5 709.8 C1811.6 711.4 1809.0 715.8 1805.8 719.6 C1802.6 723.4 1800.6 727.1 1799.3 729.0 M1815.5 709.8 L1820.4 717.9 M1808.2 721.2 L1810.6 726.0 M1416.0 580.0 C1422.5 581.2 1425.5 579.4 1448.5 586.2 C1471.5 593.0 1506.5 606.0 1531.0 613.8 C1555.5 621.6 1547.2 618.3 1571.0 625.0 C1594.8 631.7 1634.2 643.0 1650.0 647.5 M1416.0 440.0 C1420.5 442.5 1430.0 446.7 1438.5 452.5 C1447.0 458.3 1452.2 460.8 1458.5 468.8 C1464.8 476.8 1467.8 480.3 1469.8 492.5 C1471.8 504.7 1470.8 516.0 1468.5 530.0 C1466.2 544.0 1462.5 551.3 1458.5 562.5 C1454.5 573.7 1450.5 581.5 1448.5 586.2 M1471.0 527.5 C1474.5 522.0 1483.5 505.7 1488.5 500.0 C1493.5 494.3 1494.3 501.8 1496.0 498.8 C1497.7 495.8 1491.4 487.0 1497.2 485.0 C1503.0 483.0 1519.3 488.0 1524.8 488.8 M1496.0 498.8 C1499.0 499.5 1507.2 500.5 1511.0 502.5 C1514.8 504.5 1511.8 506.8 1514.8 508.8 C1517.8 510.8 1522.5 510.5 1526.0 512.5 C1529.5 514.5 1531.4 513.3 1532.2 518.8 C1533.0 524.3 1526.3 530.8 1529.8 540.0 C1533.3 549.2 1549.6 550.2 1549.8 565.0 C1550.0 579.8 1534.8 604.0 1531.0 613.8 M1618.5 474.5 C1618.0 482.1 1617.3 501.4 1616.0 512.5 C1614.7 523.6 1611.4 526.0 1612.2 530.0 C1613.0 534.0 1618.0 530.5 1619.8 532.5 C1621.6 534.5 1621.8 535.5 1621.0 540.0 C1620.2 544.5 1618.2 550.5 1616.0 555.0 C1613.8 559.5 1610.3 559.0 1609.8 562.5 C1609.3 566.0 1612.3 569.2 1613.5 572.5 C1614.7 575.8 1613.0 575.8 1616.0 578.8 C1619.0 581.8 1626.0 585.8 1628.5 587.5 M1599.8 556.2 C1600.3 557.0 1600.2 559.2 1602.2 560.0 C1604.2 560.8 1608.3 560.0 1609.8 560.0 M1616.0 578.8 C1611.0 580.5 1597.0 583.8 1591.0 587.5 C1585.0 591.2 1588.2 590.5 1586.0 597.5 C1583.8 604.5 1582.8 617.5 1579.8 622.5 C1576.8 627.5 1573.3 620.0 1571.0 622.5 C1568.7 625.0 1564.5 628.0 1568.5 635.0 C1572.5 642.0 1584.3 650.5 1591.0 657.5 C1597.7 664.5 1597.7 666.7 1602.2 670.0 C1606.7 673.3 1605.7 673.6 1613.5 673.8 C1621.3 674.0 1633.3 670.5 1641.0 671.2 C1648.7 671.9 1650.0 676.2 1652.2 677.5 M1638.5 527.5 C1638.8 530.0 1638.3 535.0 1639.8 540.0 C1641.3 545.0 1644.3 548.0 1646.0 552.5 C1647.7 557.0 1648.0 560.5 1648.5 562.5 M1701.0 486.2 C1699.5 483.5 1694.0 477.0 1693.5 472.5 C1693.0 468.0 1694.0 466.5 1698.5 463.8 C1703.0 461.1 1710.7 460.3 1716.0 458.8 C1721.3 457.3 1723.0 456.7 1724.8 456.2 M450.3 772.5 C458.3 774.1 471.5 774.6 490.5 780.7 C509.5 786.8 522.7 796.3 545.5 803.2 C568.3 810.1 581.7 811.9 604.5 815.0 C627.3 818.1 637.6 819.3 659.6 818.9 C681.6 818.5 688.0 818.1 714.7 813.0 C741.4 807.9 754.0 803.5 793.3 793.3 C832.6 783.1 884.6 770.5 911.3 761.9 C938.0 753.3 919.1 758.8 927.0 750.1 C934.9 741.4 942.7 726.5 950.6 718.6 C958.5 710.7 953.0 711.9 966.4 710.7 C979.8 709.5 1003.3 714.7 1017.5 712.7 C1031.7 710.7 1033.3 703.3 1037.2 700.9 M767.7 1111.1 C779.1 1105.0 806.3 1092.4 824.8 1080.4 C843.3 1068.4 848.8 1062.3 860.2 1050.9 C871.6 1039.5 870.0 1039.5 881.8 1023.4 C893.6 1007.3 905.4 986.8 919.2 970.3 C933.0 953.8 936.4 955.0 950.6 940.8 C964.8 926.6 974.3 916.4 990.0 899.5 C1005.7 882.6 1013.6 874.4 1029.3 856.3 C1045.0 838.2 1056.8 826.4 1068.6 809.1 C1080.4 791.8 1084.4 777.6 1088.3 769.7 M881.8 1023.4 C883.0 1025.4 886.5 1024.9 887.7 1033.2 C888.9 1041.5 886.1 1055.3 887.7 1064.7 C889.3 1074.1 892.5 1074.7 895.6 1080.4 C898.7 1086.1 901.8 1090.5 903.4 1093.0 M1074.7 823.7 C1078.0 829.0 1087.9 840.5 1091.4 850.3 C1094.9 860.1 1092.2 868.4 1092.4 872.9 M1086.5 875.8 C1087.7 875.3 1089.6 873.5 1092.4 873.3 C1095.2 873.1 1097.3 873.2 1100.3 874.9 C1103.3 876.6 1105.2 877.8 1107.2 881.7 C1109.2 885.6 1107.9 890.2 1110.1 894.5 C1112.3 898.8 1114.5 901.5 1118.0 903.4 C1121.5 905.3 1121.5 904.6 1127.8 904.0 C1134.1 903.4 1144.0 899.9 1149.5 900.4 C1155.0 900.9 1153.8 903.1 1155.4 906.3 C1157.0 909.5 1161.2 909.9 1157.3 916.2 C1153.4 922.5 1139.6 932.4 1135.7 937.8 C1131.8 943.2 1137.3 942.2 1137.7 943.3 M1000.0 713.6 C1003.9 713.2 1013.0 713.6 1019.7 711.6 C1026.4 709.6 1028.3 707.3 1033.4 703.8 C1038.5 700.3 1042.8 695.9 1045.2 693.9 M1047.2 705.7 C1048.2 706.9 1050.7 708.6 1052.1 711.6 C1053.5 714.6 1053.7 718.7 1054.1 720.5 M1046.2 707.7 C1044.4 714.6 1037.8 735.0 1037.4 742.1 C1037.0 749.2 1042.8 742.9 1044.2 743.1 M1053.1 701.8 C1055.1 703.8 1057.8 706.1 1062.9 711.6 C1068.0 717.1 1073.2 724.0 1078.7 729.3 C1084.2 734.6 1088.1 736.4 1090.5 738.2 M1102.3 690.0 C1097.6 698.3 1087.0 717.5 1078.7 731.3 C1070.4 745.1 1066.9 749.0 1061.0 758.8 C1055.1 768.6 1052.6 770.7 1049.2 780.5 C1045.8 790.3 1042.2 800.5 1044.2 808.0 C1046.2 815.5 1052.9 814.7 1059.0 817.8 C1065.1 820.9 1071.6 822.5 1074.7 823.7 M1086.5 797.2 L1074.7 823.7 M1078.7 772.6 C1080.3 773.0 1085.3 772.8 1086.5 774.6 C1087.7 776.4 1086.2 780.0 1084.6 781.4 C1083.0 782.8 1079.9 781.4 1078.7 781.4 M1040.3 813.9 C1037.0 817.4 1030.5 823.7 1023.6 831.6 C1016.7 839.5 1009.4 848.9 1005.9 853.2 M1244.8 690.0 C1249.1 692.8 1257.6 700.9 1266.5 704.2 C1275.4 707.5 1280.1 702.3 1289.1 706.7 C1298.1 711.1 1307.2 722.5 1311.7 726.4 M1405.0 690.0 C1411.2 696.8 1428.7 716.2 1436.2 724.2 C1443.7 732.2 1434.7 724.3 1442.5 730.0 C1450.3 735.7 1456.7 741.3 1475.0 752.5 C1493.3 763.7 1522.3 778.7 1533.8 786.2 C1545.3 793.7 1537.5 787.6 1532.5 790.0 C1527.5 792.4 1520.3 793.8 1508.8 798.0 C1497.3 802.2 1485.8 806.8 1475.0 811.2 C1464.2 815.6 1461.8 816.7 1455.0 820.0 C1448.2 823.3 1444.2 824.7 1441.2 827.5 C1438.2 830.3 1439.5 831.3 1440.0 833.8 C1440.5 836.3 1443.0 838.8 1443.8 840.0 M1441.2 830.0 C1445.0 830.1 1450.7 830.7 1460.0 830.5 C1469.3 830.3 1481.6 828.4 1487.5 828.8 C1493.4 829.2 1490.0 830.3 1489.5 832.5 C1489.0 834.7 1486.7 835.5 1485.0 840.0 C1483.3 844.5 1483.7 851.0 1481.2 855.0 C1478.7 859.0 1476.5 858.0 1472.5 860.0 C1468.5 862.0 1463.2 862.2 1461.2 865.0 C1459.2 867.8 1459.0 869.0 1462.5 873.8 C1466.0 878.6 1475.1 883.6 1478.8 888.8 C1482.5 894.0 1478.0 895.5 1481.2 900.0 C1484.4 904.5 1492.0 907.4 1495.0 911.2 C1498.0 915.0 1495.0 916.5 1496.2 918.8 C1497.4 921.1 1499.7 919.8 1501.2 922.5 C1502.7 925.2 1501.0 927.5 1503.8 932.5 C1506.6 937.5 1510.0 942.8 1515.0 947.5 C1520.0 952.2 1526.0 953.2 1528.8 956.2 C1531.6 959.2 1529.8 959.2 1528.8 962.5 C1527.8 965.8 1524.3 968.5 1523.8 972.5 C1523.3 976.5 1526.0 976.5 1526.2 982.5 C1526.4 988.5 1526.7 996.6 1525.0 1002.5 C1523.3 1008.4 1519.0 1010.1 1517.5 1012.0 M1443.8 847.5 L1437.5 851.2 M1440.0 842.5 C1438.5 841.5 1436.5 839.0 1432.5 837.5 C1428.5 836.0 1424.5 834.5 1420.0 835.0 C1415.5 835.5 1415.0 836.8 1410.0 840.0 C1405.0 843.2 1402.0 847.7 1395.0 851.2 C1388.0 854.7 1384.5 854.5 1375.0 857.5 C1365.5 860.5 1353.0 864.5 1347.5 866.2 M1375.0 857.5 C1375.0 861.0 1377.2 867.0 1375.0 875.0 C1372.8 883.0 1366.0 891.5 1363.8 897.5 C1361.6 903.5 1364.8 902.3 1363.8 905.0 C1362.8 907.7 1359.8 910.0 1358.8 911.2 M1320.0 862.5 C1321.0 864.5 1321.5 867.5 1325.0 872.5 C1328.5 877.5 1330.0 882.2 1337.5 887.5 C1345.0 892.8 1357.5 896.5 1362.5 898.8 M1427.5 726.2 C1424.0 731.0 1412.0 742.2 1410.0 750.0 C1408.0 757.8 1412.5 759.0 1417.5 765.0 C1422.5 771.0 1429.7 776.1 1435.0 780.0 C1440.3 783.9 1442.0 783.6 1443.8 784.5 M1300.0 715.0 L1311.2 726.2 M1783.8 690.0 L1808.0 696.2 M1027.5 860.0 C1012.5 876.0 974.0 918.0 952.5 940.0 C931.0 962.0 926.5 964.0 920.0 970.0 M1092.5 870.0 C1092.2 875.5 1092.7 884.5 1091.2 897.5 C1089.7 910.5 1088.2 920.5 1085.0 935.0 C1081.8 949.5 1079.0 959.2 1075.0 970.0 C1071.0 980.8 1066.8 981.3 1065.0 988.8 C1063.2 996.3 1063.2 1001.0 1066.2 1007.5 C1069.2 1014.0 1075.0 1020.7 1080.0 1021.2 C1085.0 1021.7 1089.2 1015.7 1091.2 1010.0 C1093.2 1004.3 1089.0 1001.5 1090.0 992.5 C1091.0 983.5 1093.4 972.5 1096.2 965.0 C1099.0 957.5 1100.0 958.4 1103.8 955.0 C1107.6 951.6 1110.3 948.9 1115.0 948.0 C1119.7 947.1 1123.0 948.9 1127.5 950.5 C1132.0 952.1 1135.0 953.3 1137.5 956.2 C1140.0 959.1 1137.0 960.2 1140.0 965.0 C1143.0 969.8 1146.5 976.9 1152.5 980.0 C1158.5 983.1 1160.5 980.6 1170.0 980.5 C1179.5 980.4 1184.5 978.6 1200.0 979.5 C1215.5 980.4 1232.5 987.1 1247.5 985.0 C1262.5 982.9 1268.5 972.0 1275.0 968.8 C1281.5 965.6 1277.5 967.8 1280.0 968.8 C1282.5 969.8 1285.0 970.1 1287.5 973.8 C1290.0 977.5 1291.5 984.8 1292.5 987.5 M1086.2 875.5 C1089.0 875.2 1095.7 872.4 1100.0 873.8 C1104.3 875.2 1105.5 878.3 1107.5 882.5 C1109.5 886.7 1107.5 890.7 1110.0 895.0 C1112.5 899.3 1115.5 902.3 1120.0 903.8 C1124.5 905.3 1127.0 903.3 1132.5 902.5 C1138.0 901.7 1143.0 899.0 1147.5 900.0 C1152.0 901.0 1153.3 903.7 1155.0 907.5 C1156.7 911.3 1159.7 913.3 1156.2 918.8 C1152.7 924.3 1141.7 930.5 1137.5 935.0 C1133.3 939.5 1133.0 939.0 1135.0 941.2 C1137.0 943.4 1144.7 942.4 1147.5 946.2 C1150.3 950.0 1149.1 955.7 1148.8 960.0 C1148.5 964.3 1145.5 963.5 1146.2 967.5 C1146.9 971.5 1151.2 977.5 1152.5 980.0 M1170.0 983.8 C1182.5 984.8 1213.5 986.6 1232.5 988.8 C1251.5 991.0 1256.5 992.3 1265.0 995.0 C1273.5 997.7 1273.0 1001.0 1275.0 1002.5 M1275.0 968.8 C1273.0 972.5 1265.5 981.3 1265.0 987.5 C1264.5 993.7 1269.5 998.3 1272.5 1000.0 C1275.5 1001.7 1278.7 1002.2 1280.0 996.2 C1281.3 990.2 1279.0 975.2 1278.8 970.0 M1292.5 985.0 C1306.8 968.8 1348.8 921.3 1363.8 903.8 C1378.8 886.3 1366.8 898.8 1367.5 897.5 M1292.5 985.0 C1293.0 988.0 1292.5 994.0 1295.0 1000.0 C1297.5 1006.0 1303.5 1010.5 1305.0 1015.0 C1306.5 1019.5 1306.0 1019.0 1302.5 1022.5 C1299.0 1026.0 1288.0 1027.5 1287.5 1032.5 C1287.0 1037.5 1297.3 1041.2 1300.0 1047.5 C1302.7 1053.8 1301.0 1060.5 1301.2 1063.8 M1290.0 1020.0 C1287.5 1021.0 1287.7 1017.2 1277.5 1025.0 C1267.3 1032.8 1242.8 1052.0 1238.8 1058.8 C1234.8 1065.6 1251.3 1062.1 1257.5 1058.8 C1263.7 1055.5 1267.0 1047.8 1270.0 1042.5 C1273.0 1037.2 1270.5 1036.0 1272.5 1032.5 C1274.5 1029.0 1278.5 1026.5 1280.0 1025.0 M1275.0 1055.0 C1276.0 1055.8 1277.0 1056.9 1280.0 1058.8 C1283.0 1060.7 1285.8 1063.4 1290.0 1064.5 C1294.2 1065.6 1290.2 1065.9 1301.2 1064.5 C1312.2 1063.1 1329.7 1060.2 1345.0 1057.5 C1360.3 1054.8 1368.0 1055.2 1377.5 1051.2 C1387.0 1047.2 1388.8 1040.3 1392.5 1037.5 C1396.2 1034.7 1389.1 1031.3 1396.2 1037.0 C1403.3 1042.7 1421.6 1060.4 1428.0 1066.2 M1525.5 992.8 C1525.4 994.2 1530.3 992.5 1524.9 999.9 C1519.5 1007.3 1503.1 1020.1 1498.4 1029.8 C1493.7 1039.5 1498.9 1041.6 1501.2 1048.4 C1503.5 1055.2 1509.2 1058.6 1509.8 1064.0 C1510.4 1069.4 1507.8 1072.5 1504.1 1075.4 C1500.4 1078.3 1495.5 1076.0 1491.2 1078.3 C1486.9 1080.6 1486.7 1084.3 1482.7 1086.9 C1478.7 1089.5 1476.4 1090.0 1471.3 1091.1 C1466.2 1092.2 1471.3 1102.6 1457.0 1092.6 C1442.7 1082.6 1411.4 1051.5 1400.0 1041.2 M1613.9 1106.0 C1620.2 1103.3 1636.1 1094.3 1645.2 1092.6 C1654.3 1090.9 1653.8 1097.7 1659.5 1097.4 C1665.2 1097.1 1666.9 1091.0 1673.7 1091.1 C1680.5 1091.2 1686.8 1097.1 1693.7 1097.7 C1700.6 1098.3 1702.3 1098.2 1708.0 1094.0 C1713.7 1089.8 1711.9 1090.0 1722.2 1076.9 C1732.5 1063.8 1747.9 1045.5 1759.3 1028.4 C1770.7 1011.3 1771.3 1003.3 1779.3 991.3 C1787.3 979.3 1791.5 978.8 1799.2 968.5 C1806.9 958.2 1810.1 952.2 1817.7 940.0 C1825.3 927.8 1829.4 922.6 1837.2 907.4 C1845.0 892.2 1852.9 879.0 1856.8 864.1 C1860.7 849.2 1856.5 839.5 1856.8 832.7 C1857.1 825.9 1858.2 830.5 1858.5 830.0 M1798.0 696.0 C1802.4 698.7 1804.5 699.3 1820.1 709.3 C1835.7 719.3 1860.7 736.5 1876.2 746.2 C1891.7 755.9 1893.3 755.6 1897.6 758.0 M1818.6 709.3 C1816.2 711.7 1812.1 715.2 1806.8 721.1 C1801.5 727.0 1800.4 731.4 1792.1 738.8 C1783.8 746.2 1776.4 751.2 1765.5 758.0 C1754.6 764.8 1749.0 768.3 1737.5 772.7 C1726.0 777.1 1718.8 780.5 1708.0 780.1 C1697.2 779.7 1688.6 772.4 1683.7 770.5 M1817.2 710.8 L1820.1 718.2 M1808.3 721.1 L1811.3 726.3 M1897.6 758.0 C1895.4 758.9 1888.7 760.6 1886.5 762.4 C1884.3 764.2 1888.6 765.3 1886.5 766.8 C1884.4 768.3 1878.6 768.5 1876.2 769.8 C1873.8 771.1 1875.0 772.8 1874.7 773.5 M1897.6 774.2 C1895.4 776.9 1891.7 781.0 1886.5 787.5 C1881.3 794.0 1877.3 798.2 1871.7 806.7 C1866.1 815.2 1861.1 825.3 1858.5 830.0 M1893.9 749.1 L1897.6 746.2 M1851.8 770.5 C1856.7 771.1 1868.4 772.2 1876.2 773.5 C1884.0 774.8 1888.0 776.5 1890.9 777.2 M1848.9 775.0 L1886.5 781.6 M1845.9 779.4 L1878.4 788.2 M1851.8 770.5 L1845.9 779.4 M1859.2 771.7 L1854.0 781.6 M1866.6 772.7 L1862.2 783.8 M1876.2 773.5 L1870.3 786.0 M1890.9 777.2 L1878.4 788.2 M1877.6 768.3 L1889.4 769.8 M1094.0 640.0 C1090.2 645.2 1083.2 656.6 1075.0 666.0 C1066.8 675.4 1058.8 681.7 1053.0 687.2 C1047.2 692.7 1050.1 690.0 1046.0 693.5 C1041.9 697.0 1037.8 700.7 1032.6 704.5 C1027.4 708.3 1022.5 710.8 1020.0 712.4 M1053.0 687.2 C1055.2 688.1 1058.3 689.5 1064.0 691.9 C1069.7 694.3 1075.1 696.3 1081.4 699.0 C1087.7 701.7 1092.7 704.0 1095.5 705.3 M1090.8 693.5 L1098.7 698.2 M1039.7 698.2 C1041.1 699.8 1044.0 702.9 1046.7 706.1 C1049.4 709.3 1051.4 710.9 1053.0 714.0 C1054.6 717.1 1054.3 720.2 1054.6 721.8 M1046.7 706.1 C1045.8 708.6 1044.0 711.7 1042.0 718.7 C1040.0 725.7 1037.6 736.5 1036.5 741.0 M470.8 359.3 C473.6 360.6 479.2 363.7 485.0 366.0 C490.8 368.3 497.0 370.0 500.0 371.0" fill="none" stroke="#b9b9c6" stroke-width="1.5" stroke-dasharray="1.4 1.2" stroke-linejoin="round"/>
<circle cx="1182.5" cy="557.5" r="4.0" fill="#4a8a4e" stroke="#fff" stroke-width="1"/>
<circle cx="1208.5" cy="655.5" r="4.0" fill="#4a8a4e" stroke="#fff" stroke-width="1"/>
<circle cx="1436.2" cy="724.2" r="4.0" fill="#4a8a4e" stroke="#fff" stroke-width="1"/>
<circle cx="1444.5" cy="848.2" r="4.3" fill="#4e8d52" stroke="#fff" stroke-width="1.2"/>
<circle cx="1292.5" cy="1015.5" r="4.3" fill="#4e8d52" stroke="#fff" stroke-width="1.2"/>
<circle cx="1877.6" cy="752.4" r="4.0" fill="#4a8a4e" stroke="#fff" stroke-width="1"/>
<text x="1186.5" y="551.7" style="font-family:'Liberation Sans',sans-serif;paint-order:stroke;stroke:#505050;stroke-linejoin:round;fill:#fff;font-size:16px;font-style:italic;stroke-width:2.4px">Swellendam</text>
<text x="1211.5" y="650" style="font-family:'Liberation Sans',sans-serif;paint-order:stroke;stroke:#505050;stroke-linejoin:round;fill:#fff;font-size:14px;stroke-width:2.2px">Railton</text>
<text x="1439" y="719.3" style="font-family:'Liberation Sans',sans-serif;paint-order:stroke;stroke:#505050;stroke-linejoin:round;fill:#fff;font-size:12px;stroke-width:2.2px">Bontebok National Park Entrance Gate</text>
<text x="1447.5" y="843.2" style="font-family:'Liberation Sans',sans-serif;paint-order:stroke;stroke:#505050;stroke-linejoin:round;fill:#fff;font-size:12px;stroke-width:2.2px">Bontebok National Park Reception &amp; Shop</text>
<text x="1295.5" y="1011.3" style="font-family:'Liberation Sans',sans-serif;paint-order:stroke;stroke:#505050;stroke-linejoin:round;fill:#fff;font-size:10px;stroke-width:2px">Lang Elsies Kraal Rest Camp</text>
<text x="1881" y="746.7" style="font-family:'Liberation Sans',sans-serif;paint-order:stroke;stroke:#505050;stroke-linejoin:round;fill:#fff;font-size:16px;font-style:italic;stroke-width:2.4px">Buffeljagsrivier</text>
</svg></div>
 <div id="status"><span style="left:929px;top:7px;color:#0000ee;text-decoration:underline;font-size:13px;white-space:nowrap">There is a new plugin available</span><div style="left:1117px;top:6px;width:20px;height:20px;box-sizing:border-box;border:1px solid #8e8e8e;background:linear-gradient(#fafafa,#e4e4e4)"><svg width="18" height="18" viewBox="0 0 18 18"><path d="M4 4 C6 2 9 2 10 4 C11 6 8 7 7 6 M6 6 L13 14 M4.5 9 C7 7.5 10 8 11 10 M8 13.5 C10 12 13 12.5 14 14.5" fill="none" stroke="#222" stroke-width="1.3"/><circle cx="11" cy="11" r="3.5" fill="none" stroke="#222" stroke-width="1.2"/></svg></div><span style="left:1146px;top:7px;font-size:13px">Coordinate:</span><div style="left:1223px;top:6px;width:300px;height:20px;box-sizing:border-box;border:1px solid #9a9a9a;border-top-color:#7d7d7d;background:#fff;text-align:center;font-size:13px;line-height:19px">20.4398,-34.0394</div><span style="left:1532px;top:7px;font-size:13px">Scale</span><div style="left:1578px;top:10px;width:93px;height:15px;box-sizing:border-box;border:1px solid #a4a4a4;border-radius:0 4px 4px 0;background:#fff;font-size:13px;line-height:14px;padding-left:2px">1:23396<div style="right:0;top:0;width:13px;height:13px;border-left:1px solid #c4c4c4;background:linear-gradient(#fff,#ececec);border-radius:0 3px 3px 0"><svg width="13" height="13" style="display:block"><path d="M3.5 5 H9.5 L6.5 9.5 Z" fill="#444"/></svg></div></div><div style="left:1678px;top:6px;width:20px;height:20px;box-sizing:border-box;border:1px solid #8e8e8e;background:linear-gradient(#fafafa,#e4e4e4)"><svg width="18" height="18" viewBox="0 0 18 18"><path d="M2 16 C8 14 13 9 16 2 C14 9 10 14 5 17 Z" fill="#777" stroke="#666" stroke-width=".6"/><circle cx="6" cy="5.5" r="3.6" fill="none" stroke="#d02a2a" stroke-width="1.4"/><path d="M3.5 3 L8.5 8" stroke="#d02a2a" stroke-width="1.4"/></svg></div><div style="left:1704px;top:9px;width:14px;height:14px;box-sizing:border-box;border:1px solid #5d6470;border-radius:3px;background:linear-gradient(#f4f6f9,#c4cdd8)"></div><svg style="position:absolute;left:1704px;top:3px" width="18" height="20"><path d="M4 11.5 L7 16 L13.5 3.5" fill="none" stroke="#1a2330" stroke-width="2.2" stroke-linecap="round" stroke-linejoin="round"/></svg><span style="left:1722px;top:7px;font-size:13px">Render</span><span style="left:1770px;top:7px;font-size:13px;color:#333">EPSG:4326</span><div style="left:1848px;top:7px;width:20px;height:19px;box-sizing:border-box;border:1px solid #8e8e8e;background:linear-gradient(#fafafa,#e4e4e4)"><svg width="18" height="18" viewBox="0 0 18 18"><circle cx="9" cy="9" r="7" fill="#d8d8d8" stroke="#7a7a7a" stroke-width="1.6"/><ellipse cx="9" cy="9" rx="3.5" ry="7" fill="none" stroke="#7a7a7a" stroke-width="1.3"/><path d="M2 9 H16" stroke="#7a7a7a" stroke-width="1.3"/><rect x="6.5" y="6.5" width="5" height="5" fill="#eee" stroke="#888" stroke-width=".8"/></svg></div><div style="left:1874px;top:6px;width:20px;height:20px;box-sizing:border-box;border:1px solid #8e8e8e;background:linear-gradient(#fdfdfd,#e6e6e6)"><svg width="19" height="19" viewBox="0 0 19 19"><path d="M9.5 3.5 L15.5 15 H3.5 Z" fill="#f6f3b0" stroke="#c9c58a" stroke-width="1" stroke-linejoin="round"/><path d="M9.5 7.5 V11.5" stroke="#222" stroke-width="1.6"/><circle cx="9.5" cy="13.3" r=".9" fill="#222"/></svg></div><svg style="position:absolute;left:1904px;top:17px" width="15" height="15"><path d="M2 13 L13 2 M6 13 L13 6 M10 13 L13 10" stroke="#8a8a8a" stroke-width="1"/></svg></div>
</div>
</body>
</html>
